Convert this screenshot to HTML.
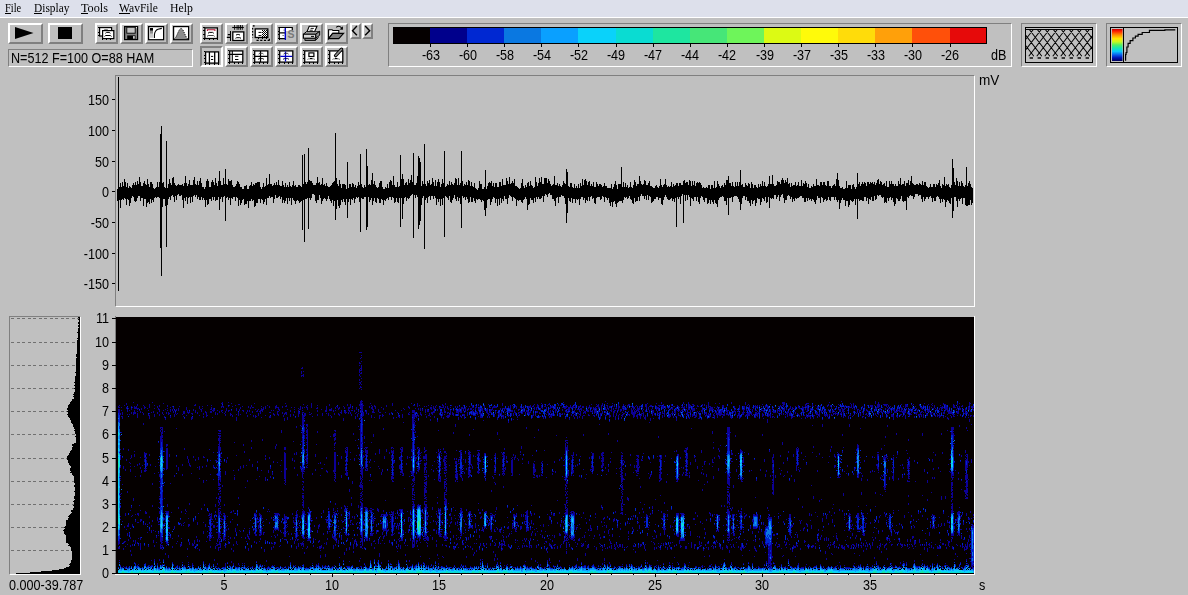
<!DOCTYPE html><html><head><meta charset="utf-8"><title>Spectrogram</title><style>
html,body{margin:0;padding:0;}
body{width:1188px;height:595px;overflow:hidden;background:#c0c0c0;position:relative;
 font-family:"Liberation Sans",sans-serif;font-size:13px;color:#000;}
.a{position:absolute;}
.b{position:absolute;box-sizing:border-box;border:2px solid;background:#c0c0c0;}
.b svg{position:absolute;left:0;top:0;}
.m{position:absolute;top:0;font-family:"Liberation Serif",serif;font-size:13px;line-height:15px;white-space:nowrap;transform-origin:0 0;}
.t{position:absolute;white-space:nowrap;line-height:14px;font-size:14px;transform:scaleX(0.9);transform-origin:0 0;}
.r{transform-origin:100% 0;text-align:right;}
.c{transform-origin:50% 0;text-align:center;}
.sunk{position:absolute;box-sizing:border-box;border:1px solid;border-color:#808080 #fff #fff #808080;}
</style></head><body>
<div class="a" style="left:0;top:0;width:1188px;height:17px;background:#dde0eb"></div>
<div class="a" style="left:0;top:17px;width:1188px;height:1px;background:#fff"></div>
<span class="m" style="left:5px;top:0px;transform:scaleX(0.8)">File</span>
<div class="a" style="left:5px;top:13px;width:6px;height:1px;background:#000"></div>
<span class="m" style="left:34px;top:0px;transform:scaleX(0.875)">Display</span>
<div class="a" style="left:34px;top:13px;width:8px;height:1px;background:#000"></div>
<span class="m" style="left:81px;top:0px;transform:scaleX(0.94)">Tools</span>
<div class="a" style="left:81px;top:13px;width:7px;height:1px;background:#000"></div>
<span class="m" style="left:119px;top:0px;transform:scaleX(0.89)">WavFile</span>
<div class="a" style="left:119px;top:13px;width:10.5px;height:1px;background:#000"></div>
<span class="m" style="left:169.5px;top:0px;transform:scaleX(0.905)">Help</span>
<div class="b" style="left:8px;top:23px;width:35px;height:21px;border-color:#ffffff #808080 #808080 #ffffff;"><svg width="35" height="21" viewBox="0 0 35 21" style="left:-2px;top:-2px"><polygon points="7,4 7,16 25.5,10" fill="#000" shape-rendering="auto"/></svg></div>
<div class="b" style="left:48px;top:23px;width:35px;height:21px;border-color:#ffffff #808080 #808080 #ffffff;"><svg width="35" height="21" viewBox="0 0 35 21" style="left:-2px;top:-2px"><rect x="10" y="4" width="14" height="12" fill="#000" shape-rendering="crispEdges"/></svg></div>
<div class="b" style="left:95px;top:23px;width:23px;height:21px;border-color:#ffffff #808080 #808080 #ffffff;"><svg width="23" height="21" viewBox="0 0 23 21" style="left:-2px;top:-2px"><rect x="4.6" y="4.6" width="12" height="8.4" fill="#fff" stroke="#000" stroke-width="1.2"/><rect x="3.2" y="4" width="1.3" height="1" fill="#000" shape-rendering="crispEdges"/><rect x="3.2" y="8.5" width="1.3" height="1" fill="#000" shape-rendering="crispEdges"/><rect x="3.2" y="12.2" width="1.3" height="1" fill="#000" shape-rendering="crispEdges"/><path d="M9 7.1L10.2 6.6H11.8L13 7.1" stroke="#666" stroke-width="1.0" fill="none" stroke-linejoin="round"/><rect x="7.6" y="7.6" width="11.2" height="8.0" fill="#fff" stroke="#000" stroke-width="1.2"/><rect x="7.2" y="15.6" width="1" height="1.2" fill="#000" shape-rendering="crispEdges"/><rect x="11" y="15.6" width="1" height="1.2" fill="#000" shape-rendering="crispEdges"/><rect x="15.2" y="15.6" width="1" height="1.2" fill="#000" shape-rendering="crispEdges"/><path d="M10.4 10.3L11.6 9.4H14.200000000000001L15.4 10.3" stroke="#000" stroke-width="1.0" fill="none" stroke-linejoin="round"/><path d="M9.5 13.4L10.7 12.5H15.3L16.5 13.4" stroke="#000" stroke-width="1.0" fill="none" stroke-linejoin="round"/></svg></div>
<div class="b" style="left:120px;top:23px;width:23px;height:21px;border-color:#ffffff #808080 #808080 #ffffff;"><svg width="23" height="21" viewBox="0 0 23 21" style="left:-2px;top:-2px"><rect x="4.6" y="3.6" width="13" height="13" fill="#808080" stroke="#000" stroke-width="1.2"/><rect x="6.8" y="4.2" width="8.4" height="6" fill="#c4c4c4" stroke="#000" stroke-width="0.9"/><rect x="7.2" y="12.4" width="8.3" height="4.2" fill="#000"/><rect x="13" y="13.1" width="1.8" height="2.6" fill="#c8c8c8"/><rect x="16" y="4.2" width="1" height="1" fill="#fff"/></svg></div>
<div class="b" style="left:145px;top:23px;width:23px;height:21px;border-color:#ffffff #808080 #808080 #ffffff;"><svg width="23" height="21" viewBox="0 0 23 21" style="left:-2px;top:-2px"><rect x="3.6" y="3.6" width="15" height="13.1" fill="#fff" stroke="#000" stroke-width="1.2"/><rect x="5" y="5" width="3" height="2.8" fill="#000"/><rect x="5" y="7.8" width="3" height="3" fill="#8c8c8c"/><rect x="5" y="10.8" width="3" height="4" fill="#c8c8c8"/><path d="M9.4 14.9V11.8Q9.8 7.4 13 6.2L16.8 5.4" stroke="#000" stroke-width="1.1" fill="none"/></svg></div>
<div class="b" style="left:170px;top:23px;width:23px;height:21px;border-color:#ffffff #808080 #808080 #ffffff;"><svg width="23" height="21" viewBox="0 0 23 21" style="left:-2px;top:-2px"><rect x="3.6" y="3.6" width="15" height="13.1" fill="#fff" stroke="#000" stroke-width="1.2"/><path d="M4.2 16.1C7 14.5 8.6 5.4 11.1 5.4C13.6 5.4 15.2 14.5 18 16.1Z" fill="#8c8c8c"/><path d="M4.2 16.1C7 14.5 8.6 5.4 11.1 5.4C13.6 5.4 15.2 14.5 18 16.1" fill="none" stroke="#000" stroke-width="0.9" stroke-dasharray="1.2 1"/></svg></div>
<div class="b" style="left:200px;top:23px;width:23px;height:21px;border-color:#ffffff #808080 #808080 #ffffff;"><svg width="23" height="21" viewBox="0 0 23 21" style="left:-2px;top:-2px"><rect x="4.9" y="4.9" width="12.5" height="10.6" fill="#fff" stroke="#000" stroke-width="1.3"/><rect x="3.2" y="4.2" width="1.3" height="1" fill="#000" shape-rendering="crispEdges"/><rect x="3.2" y="7.3" width="1.3" height="1" fill="#000" shape-rendering="crispEdges"/><rect x="3.2" y="11" width="1.3" height="1" fill="#000" shape-rendering="crispEdges"/><rect x="3.2" y="14.8" width="1.3" height="1" fill="#000" shape-rendering="crispEdges"/><rect x="4.4" y="15.8" width="1" height="1.2" fill="#000" shape-rendering="crispEdges"/><rect x="9" y="15.8" width="1" height="1.2" fill="#000" shape-rendering="crispEdges"/><rect x="13.2" y="15.8" width="1" height="1.2" fill="#000" shape-rendering="crispEdges"/><rect x="17" y="15.8" width="1" height="1.2" fill="#000" shape-rendering="crispEdges"/><path d="M7.4 7.9V6.7H14.9V7.9" stroke="#b01030" stroke-width="1.1" fill="none"/><path d="M8 10.3L9.2 9.4H12.600000000000001L13.8 10.3" stroke="#000" stroke-width="1.0" fill="none" stroke-linejoin="round"/><path d="M7 13.4L8.2 12.5H13.4L14.6 13.4" stroke="#444" stroke-width="1.0" fill="none" stroke-linejoin="round"/></svg></div>
<div class="b" style="left:225px;top:23px;width:23px;height:21px;border-color:#ffffff #808080 #808080 #ffffff;"><svg width="23" height="21" viewBox="0 0 23 21" style="left:-2px;top:-2px"><rect x="7.8" y="8.9" width="11" height="8.6" fill="#fff" stroke="#000" stroke-width="1.3"/><rect x="5" y="8.2" width="1.1" height="9.6" fill="#000" shape-rendering="crispEdges"/><path d="M2.8 11.6H5.4M1.8 14.4H5.4" stroke="#000" stroke-width="1.1"/><path d="M7.2 4.5H18.8" stroke="#000" stroke-width="1.1"/><path d="M9.6 2V6.8M12.1 2V6.8M13.8 2V6.8M15.5 2V6.8M17.3 2V6.8" stroke="#000" stroke-width="0.9"/><path d="M11 12.1L12.2 11.5H13.8L15 12.1" stroke="#000" stroke-width="1.0" fill="none" stroke-linejoin="round"/><path d="M10.5 15.299999999999999L11.7 14.7H14.8L16 15.299999999999999" stroke="#000" stroke-width="1.0" fill="none" stroke-linejoin="round"/></svg></div>
<div class="b" style="left:250px;top:23px;width:23px;height:21px;border-color:#ffffff #808080 #808080 #ffffff;"><svg width="23" height="21" viewBox="0 0 23 21" style="left:-2px;top:-2px"><rect x="5.2" y="5.9" width="12.6" height="8.6" fill="#fff" stroke="#000" stroke-width="1.3"/><g shape-rendering="crispEdges"><rect x="11.5" y="6.6" width="1" height="1" fill="#000"/><rect x="13.5" y="6.6" width="1" height="1" fill="#000"/><rect x="15.5" y="6.6" width="1" height="1" fill="#000"/><rect x="12.5" y="7.6" width="1" height="1" fill="#000"/><rect x="14.5" y="7.6" width="1" height="1" fill="#000"/><rect x="16.5" y="7.6" width="1" height="1" fill="#000"/><rect x="11.5" y="8.6" width="1" height="1" fill="#000"/><rect x="13.5" y="8.6" width="1" height="1" fill="#000"/><rect x="15.5" y="8.6" width="1" height="1" fill="#000"/><rect x="12.5" y="9.6" width="1" height="1" fill="#000"/><rect x="14.5" y="9.6" width="1" height="1" fill="#000"/><rect x="16.5" y="9.6" width="1" height="1" fill="#000"/><rect x="11.5" y="10.6" width="1" height="1" fill="#000"/><rect x="13.5" y="10.6" width="1" height="1" fill="#000"/><rect x="15.5" y="10.6" width="1" height="1" fill="#000"/><rect x="12.5" y="11.6" width="1" height="1" fill="#000"/><rect x="14.5" y="11.6" width="1" height="1" fill="#000"/><rect x="16.5" y="11.6" width="1" height="1" fill="#000"/><rect x="11.5" y="12.6" width="1" height="1" fill="#000"/><rect x="13.5" y="12.6" width="1" height="1" fill="#000"/><rect x="15.5" y="12.6" width="1" height="1" fill="#000"/></g><path d="M8.5 9.4H11.5M8.5 12.6H11.5" stroke="#000" stroke-width="1"/><rect x="3" y="2.2" width="1.6" height="1.4" fill="#000"/><path d="M2.6 5V14.5" stroke="#000" stroke-width="1.2" stroke-dasharray="1.5 1.5"/><path d="M6.5 17.3H19M19.4 15.8V17.8" stroke="#000" stroke-width="1.2" stroke-dasharray="2.2 1.5"/><rect x="8" y="14.8" width="1" height="1.2" fill="#000" shape-rendering="crispEdges"/><rect x="12.3" y="14.8" width="1" height="1.2" fill="#000" shape-rendering="crispEdges"/><rect x="16" y="14.8" width="1" height="1.2" fill="#000" shape-rendering="crispEdges"/></svg></div>
<div class="b" style="left:275px;top:23px;width:23px;height:21px;border-color:#ffffff #808080 #808080 #ffffff;"><svg width="23" height="21" viewBox="0 0 23 21" style="left:-2px;top:-2px"><rect x="4.5" y="5" width="6" height="10.6" fill="#fff"/><rect x="10.5" y="5" width="7" height="3" fill="#fff"/><path d="M3.3 4.5H17.8M17.3 4.5V7.4M4.3 4.5V15.6M4 9.9H10M4 15.6H11" stroke="#000" stroke-width="1.2" fill="none"/><rect x="2.9" y="7.6" width="1.2" height="1" fill="#000" shape-rendering="crispEdges"/><rect x="2.9" y="11.2" width="1.2" height="1" fill="#000" shape-rendering="crispEdges"/><rect x="2.9" y="14.8" width="1.2" height="1" fill="#000" shape-rendering="crispEdges"/><rect x="4.2" y="15.8" width="1" height="1.1" fill="#000" shape-rendering="crispEdges"/><rect x="10" y="15.8" width="1" height="1.1" fill="#000" shape-rendering="crispEdges"/><path d="M10.3 5V16.8" stroke="#0000d0" stroke-width="1.4"/><rect x="8.6" y="6.6" width="1" height="1" fill="#333"/><rect x="7.6" y="12" width="1" height="1" fill="#333"/><text x="12.6" y="15.4" font-family="Liberation Sans,sans-serif" font-weight="bold" font-size="10.5" fill="#787878">S</text></svg></div>
<div class="b" style="left:300px;top:23px;width:23px;height:21px;border-color:#ffffff #808080 #808080 #ffffff;"><svg width="23" height="21" viewBox="0 0 23 21" style="left:-2px;top:-2px"><path d="M9.2 3.3H17L14.6 8.8H7Z" fill="#fff" stroke="#000" stroke-width="1.1"/><path d="M10.6 5.4H13.8M9.6 7.2H12.8" stroke="#000" stroke-width="0.9"/><path d="M3.4 11.2L6.4 8.8H19.6L15.8 11.2Z" fill="#d8d8d8" stroke="#000" stroke-width="1"/><rect x="3.4" y="11.2" width="12.4" height="4" fill="#d8d8d8" stroke="#000" stroke-width="1.1"/><path d="M15.8 11.2L19.7 8.2V12.2L15.8 15.2Z" fill="#909090" stroke="#000" stroke-width="1"/><path d="M4.9 15.9H15.4V17.4H4.9Z" fill="#fff" stroke="#000" stroke-width="1"/><path d="M15.4 17.4L18.6 14.4" stroke="#000" stroke-width="1"/><path d="M11 13.4H14" stroke="#000" stroke-width="1"/></svg></div>
<div class="b" style="left:325px;top:23px;width:23px;height:21px;border-color:#ffffff #808080 #808080 #ffffff;"><svg width="23" height="21" viewBox="0 0 23 21" style="left:-2px;top:-2px"><path d="M3.6 15.6V6.7H7L7.9 7.5H13.8V10.4H7.7Z" fill="#fff" stroke="#000" stroke-width="1.1"/><path d="M7.7 10.4H18.6L13.8 15.6H3.6Z" fill="#808080" stroke="#000" stroke-width="1.1"/><path d="M11.2 4.4Q13.8 1.9 16.6 4.8" fill="none" stroke="#000" stroke-width="1.1"/><polygon points="17.9,3.3 17.9,6.7 14.6,6.4" fill="#000"/></svg></div>
<div class="b" style="left:350px;top:23px;width:11px;height:16px;border-color:#ffffff #808080 #808080 #ffffff;"><svg width="11" height="16" viewBox="0 0 11 16" style="left:-2px;top:-2px"><path d="M6.9 3.1L2.5 7.7L6.9 12.3" fill="none" stroke="#000" stroke-width="1.4"/></svg></div>
<div class="b" style="left:362px;top:23px;width:11px;height:16px;border-color:#ffffff #808080 #808080 #ffffff;"><svg width="11" height="16" viewBox="0 0 11 16" style="left:-2px;top:-2px"><path d="M3.1 3.1L7.7 7.7L3.1 12.3" fill="none" stroke="#000" stroke-width="1.4"/></svg></div>
<div class="b" style="left:200px;top:46px;width:23px;height:21px;border-color:#808080 #ffffff #ffffff #808080;"><svg width="23" height="21" viewBox="0 0 23 21" style="left:-2px;top:-2px"><rect x="5.6" y="5.9" width="13" height="11.2" fill="#fff" stroke="#000" stroke-width="1.3"/><path d="M9.4 5.9V17.1M14.7 5.9V17.1" stroke="#000" stroke-width="1.3"/><path d="M11 10.4H13.2M11 13.5H13.2" stroke="#000" stroke-width="1"/><rect x="3.9" y="5.3" width="1.3" height="1" fill="#000" shape-rendering="crispEdges"/><rect x="3.9" y="8.5" width="1.3" height="1" fill="#000" shape-rendering="crispEdges"/><rect x="3.9" y="12.2" width="1.3" height="1" fill="#000" shape-rendering="crispEdges"/><rect x="3.9" y="15.8" width="1.3" height="1" fill="#000" shape-rendering="crispEdges"/><rect x="5" y="17.3" width="1" height="1.2" fill="#000" shape-rendering="crispEdges"/><rect x="8.9" y="17.3" width="1" height="1.2" fill="#000" shape-rendering="crispEdges"/><rect x="14.2" y="17.3" width="1" height="1.2" fill="#000" shape-rendering="crispEdges"/><rect x="18" y="17.3" width="1" height="1.2" fill="#000" shape-rendering="crispEdges"/></svg></div>
<div class="b" style="left:225px;top:46px;width:23px;height:21px;border-color:#ffffff #808080 #808080 #ffffff;"><svg width="23" height="21" viewBox="0 0 23 21" style="left:-2px;top:-2px"><rect x="4.7" y="4.9" width="13.1" height="11.2" fill="#fff" stroke="#000" stroke-width="1.3"/><path d="M4.7 8.4H17.8M7.3 4.9V16.1" stroke="#000" stroke-width="1.1"/><path d="M10 10.3H13.4M10 13.5H13.4" stroke="#000" stroke-width="1"/><rect x="3" y="4.3" width="1.3" height="1" fill="#000" shape-rendering="crispEdges"/><rect x="3" y="7.9" width="1.3" height="1" fill="#000" shape-rendering="crispEdges"/><rect x="3" y="11.8" width="1.3" height="1" fill="#000" shape-rendering="crispEdges"/><rect x="3" y="15.5" width="1.3" height="1" fill="#000" shape-rendering="crispEdges"/><rect x="4.2" y="16.4" width="1" height="1.2" fill="#000" shape-rendering="crispEdges"/><rect x="9.2" y="16.4" width="1" height="1.2" fill="#000" shape-rendering="crispEdges"/><rect x="13.2" y="16.4" width="1" height="1.2" fill="#000" shape-rendering="crispEdges"/><rect x="17.2" y="16.4" width="1" height="1.2" fill="#000" shape-rendering="crispEdges"/></svg></div>
<div class="b" style="left:250px;top:46px;width:23px;height:21px;border-color:#ffffff #808080 #808080 #ffffff;"><svg width="23" height="21" viewBox="0 0 23 21" style="left:-2px;top:-2px"><rect x="4.7" y="4.9" width="13.1" height="11.2" fill="#fff" stroke="#000" stroke-width="1.3"/><path d="M4.7 10.4H17.8M10.5 4.9V16.1" stroke="#000" stroke-width="1.2"/><path d="M8.6 8.1L9.799999999999999 7.3H12.3L13.5 8.1" stroke="#333" stroke-width="0.9" fill="none" stroke-linejoin="round"/><path d="M8 13.4L9.2 12.6H12.8L14 13.4" stroke="#000" stroke-width="0.9" fill="none" stroke-linejoin="round"/><rect x="3" y="4.3" width="1.3" height="1" fill="#000" shape-rendering="crispEdges"/><rect x="3" y="7.9" width="1.3" height="1" fill="#000" shape-rendering="crispEdges"/><rect x="3" y="11.8" width="1.3" height="1" fill="#000" shape-rendering="crispEdges"/><rect x="3" y="15.5" width="1.3" height="1" fill="#000" shape-rendering="crispEdges"/><rect x="4.2" y="16.4" width="1" height="1.2" fill="#000" shape-rendering="crispEdges"/><rect x="9.2" y="16.4" width="1" height="1.2" fill="#000" shape-rendering="crispEdges"/><rect x="13.2" y="16.4" width="1" height="1.2" fill="#000" shape-rendering="crispEdges"/><rect x="17.2" y="16.4" width="1" height="1.2" fill="#000" shape-rendering="crispEdges"/></svg></div>
<div class="b" style="left:275px;top:46px;width:23px;height:21px;border-color:#ffffff #808080 #808080 #ffffff;"><svg width="23" height="21" viewBox="0 0 23 21" style="left:-2px;top:-2px"><rect x="4.7" y="4.9" width="13.1" height="11.2" fill="#fff" stroke="#000" stroke-width="1.3"/><path d="M5.3 10.4H17.2M10.5 5.5V15.5" stroke="#0000c8" stroke-width="1.3"/><path d="M8.6 8.1L9.799999999999999 7.3H12.3L13.5 8.1" stroke="#223" stroke-width="0.9" fill="none" stroke-linejoin="round"/><path d="M8 13.4L9.2 12.6H12.8L14 13.4" stroke="#003" stroke-width="0.9" fill="none" stroke-linejoin="round"/><rect x="3" y="4.3" width="1.3" height="1" fill="#000" shape-rendering="crispEdges"/><rect x="3" y="7.9" width="1.3" height="1" fill="#000" shape-rendering="crispEdges"/><rect x="3" y="11.8" width="1.3" height="1" fill="#000" shape-rendering="crispEdges"/><rect x="3" y="15.5" width="1.3" height="1" fill="#000" shape-rendering="crispEdges"/><rect x="4.2" y="16.4" width="1" height="1.2" fill="#000" shape-rendering="crispEdges"/><rect x="9.2" y="16.4" width="1" height="1.2" fill="#000" shape-rendering="crispEdges"/><rect x="13.2" y="16.4" width="1" height="1.2" fill="#000" shape-rendering="crispEdges"/><rect x="17.2" y="16.4" width="1" height="1.2" fill="#000" shape-rendering="crispEdges"/></svg></div>
<div class="b" style="left:300px;top:46px;width:23px;height:21px;border-color:#ffffff #808080 #808080 #ffffff;"><svg width="23" height="21" viewBox="0 0 23 21" style="left:-2px;top:-2px"><rect x="4.7" y="4.9" width="13.1" height="11.2" fill="#fff" stroke="#000" stroke-width="1.3"/><rect x="8.9" y="6.9" width="5" height="3.6" fill="#fff" stroke="#000" stroke-width="1.2"/><path d="M7.4 13.5L8.6 12.9H13.8L15 13.5" stroke="#666" stroke-width="0.9" fill="none" stroke-linejoin="round"/><path d="M10 12.5H12.4" stroke="#000" stroke-width="1"/><rect x="3" y="4.3" width="1.3" height="1" fill="#000" shape-rendering="crispEdges"/><rect x="3" y="7.9" width="1.3" height="1" fill="#000" shape-rendering="crispEdges"/><rect x="3" y="11.8" width="1.3" height="1" fill="#000" shape-rendering="crispEdges"/><rect x="3" y="15.5" width="1.3" height="1" fill="#000" shape-rendering="crispEdges"/><rect x="4.2" y="16.4" width="1" height="1.2" fill="#000" shape-rendering="crispEdges"/><rect x="9.2" y="16.4" width="1" height="1.2" fill="#000" shape-rendering="crispEdges"/><rect x="13.2" y="16.4" width="1" height="1.2" fill="#000" shape-rendering="crispEdges"/><rect x="17.2" y="16.4" width="1" height="1.2" fill="#000" shape-rendering="crispEdges"/></svg></div>
<div class="b" style="left:325px;top:46px;width:23px;height:21px;border-color:#ffffff #808080 #808080 #ffffff;"><svg width="23" height="21" viewBox="0 0 23 21" style="left:-2px;top:-2px"><rect x="4.7" y="4.9" width="13.1" height="11.2" fill="#fff" stroke="#000" stroke-width="1.3"/><path d="M10.6 9.6L16.6 3.2" stroke="#000" stroke-width="3.4" stroke-linecap="round"/><path d="M10.7 9.5L16.5 3.3" stroke="#909090" stroke-width="1.6" stroke-linecap="round"/><path d="M7.4 13.5L8.6 12.9H13.8L15 13.5" stroke="#666" stroke-width="0.9" fill="none" stroke-linejoin="round"/><path d="M10 12.5H12.4" stroke="#000" stroke-width="1"/><rect x="3" y="4.3" width="1.3" height="1" fill="#000" shape-rendering="crispEdges"/><rect x="3" y="7.9" width="1.3" height="1" fill="#000" shape-rendering="crispEdges"/><rect x="3" y="11.8" width="1.3" height="1" fill="#000" shape-rendering="crispEdges"/><rect x="3" y="15.5" width="1.3" height="1" fill="#000" shape-rendering="crispEdges"/><rect x="4.2" y="16.4" width="1" height="1.2" fill="#000" shape-rendering="crispEdges"/><rect x="9.2" y="16.4" width="1" height="1.2" fill="#000" shape-rendering="crispEdges"/><rect x="13.2" y="16.4" width="1" height="1.2" fill="#000" shape-rendering="crispEdges"/><rect x="17.2" y="16.4" width="1" height="1.2" fill="#000" shape-rendering="crispEdges"/></svg></div>
<div class="sunk" style="left:8px;top:49px;width:185px;height:18px"></div>
<span class="t" id="status" style="left:11px;top:51px">N=512 F=100 O=88 HAM</span>
<div class="sunk" style="left:388px;top:23px;width:624px;height:44px"></div>
<svg class="a" style="left:0;top:0" width="1188" height="70" shape-rendering="crispEdges"><rect x="393" y="27" width="37" height="17" fill="#050000"/><rect x="430" y="27" width="37" height="17" fill="#00008c"/><rect x="467" y="27" width="37" height="17" fill="#0028d2"/><rect x="504" y="27" width="37" height="17" fill="#0a78e1"/><rect x="541" y="27" width="37" height="17" fill="#0aa0ff"/><rect x="578" y="27" width="38" height="17" fill="#0ad2fa"/><rect x="616" y="27" width="37" height="17" fill="#0adcd2"/><rect x="653" y="27" width="37" height="17" fill="#1ee6a0"/><rect x="690" y="27" width="37" height="17" fill="#46e678"/><rect x="727" y="27" width="37" height="17" fill="#6ef55a"/><rect x="764" y="27" width="37" height="17" fill="#dcfa14"/><rect x="801" y="27" width="37" height="17" fill="#fffa0a"/><rect x="838" y="27" width="37" height="17" fill="#ffdc0a"/><rect x="875" y="27" width="37" height="17" fill="#ffa00a"/><rect x="912" y="27" width="38" height="17" fill="#ff500a"/><rect x="950" y="27" width="37" height="17" fill="#e60a0a"/><rect x="393" y="27" width="594" height="1" fill="#000"/><rect x="393" y="43" width="594" height="1" fill="#000"/><rect x="986" y="27" width="1" height="17" fill="#000"/><rect x="430" y="44" width="1" height="3" fill="#000"/><rect x="467" y="44" width="1" height="3" fill="#000"/><rect x="504" y="44" width="1" height="3" fill="#000"/><rect x="541" y="44" width="1" height="3" fill="#000"/><rect x="578" y="44" width="1" height="3" fill="#000"/><rect x="616" y="44" width="1" height="3" fill="#000"/><rect x="653" y="44" width="1" height="3" fill="#000"/><rect x="690" y="44" width="1" height="3" fill="#000"/><rect x="727" y="44" width="1" height="3" fill="#000"/><rect x="764" y="44" width="1" height="3" fill="#000"/><rect x="801" y="44" width="1" height="3" fill="#000"/><rect x="838" y="44" width="1" height="3" fill="#000"/><rect x="875" y="44" width="1" height="3" fill="#000"/><rect x="912" y="44" width="1" height="3" fill="#000"/><rect x="950" y="44" width="1" height="3" fill="#000"/></svg>
<span class="t c" style="left:410.6px;top:48px;width:40px">-63</span>
<span class="t c" style="left:447.7px;top:48px;width:40px">-60</span>
<span class="t c" style="left:484.8px;top:48px;width:40px">-58</span>
<span class="t c" style="left:521.9px;top:48px;width:40px">-54</span>
<span class="t c" style="left:559.0px;top:48px;width:40px">-52</span>
<span class="t c" style="left:596.1px;top:48px;width:40px">-49</span>
<span class="t c" style="left:633.2px;top:48px;width:40px">-47</span>
<span class="t c" style="left:670.3px;top:48px;width:40px">-44</span>
<span class="t c" style="left:707.4px;top:48px;width:40px">-42</span>
<span class="t c" style="left:744.5px;top:48px;width:40px">-39</span>
<span class="t c" style="left:781.6px;top:48px;width:40px">-37</span>
<span class="t c" style="left:818.7px;top:48px;width:40px">-35</span>
<span class="t c" style="left:855.8px;top:48px;width:40px">-33</span>
<span class="t c" style="left:892.9px;top:48px;width:40px">-30</span>
<span class="t c" style="left:930.0px;top:48px;width:40px">-26</span>
<span class="t" id="dB" style="left:990.5px;top:48px">dB</span>
<div class="sunk" style="left:1021px;top:23px;width:76px;height:44px"></div>
<svg class="a" style="left:1025px;top:27px" width="68" height="36" viewBox="0 0 68 36"><rect x="0.5" y="0.5" width="67" height="35" fill="#c0c0c0" stroke="#000" stroke-width="1"/><path d="M1 2.5H67" stroke="#000" stroke-width="1"/><clipPath id="mc"><rect x="1" y="1" width="66" height="34"/></clipPath><path d="M-59.70 2.5L-39.16 29.2M-55.70 2.5L-76.24 29.2M-51.70 2.5L-31.16 29.2M-47.70 2.5L-68.24 29.2M-43.70 2.5L-23.16 29.2M-39.70 2.5L-60.24 29.2M-35.70 2.5L-15.16 29.2M-31.70 2.5L-52.24 29.2M-27.70 2.5L-7.16 29.2M-23.70 2.5L-44.24 29.2M-19.70 2.5L0.84 29.2M-15.70 2.5L-36.24 29.2M-11.70 2.5L8.84 29.2M-7.70 2.5L-28.24 29.2M-3.70 2.5L16.84 29.2M0.30 2.5L-20.24 29.2M4.30 2.5L24.84 29.2M8.30 2.5L-12.24 29.2M12.30 2.5L32.84 29.2M16.30 2.5L-4.24 29.2M20.30 2.5L40.84 29.2M24.30 2.5L3.76 29.2M28.30 2.5L48.84 29.2M32.30 2.5L11.76 29.2M36.30 2.5L56.84 29.2M40.30 2.5L19.76 29.2M44.30 2.5L64.84 29.2M48.30 2.5L27.76 29.2M52.30 2.5L72.84 29.2M56.30 2.5L35.76 29.2M60.30 2.5L80.84 29.2M64.30 2.5L43.76 29.2M68.30 2.5L88.84 29.2M72.30 2.5L51.76 29.2M76.30 2.5L96.84 29.2M80.30 2.5L59.76 29.2M84.30 2.5L104.84 29.2M88.30 2.5L67.76 29.2M92.30 2.5L112.84 29.2M96.30 2.5L75.76 29.2M100.30 2.5L120.84 29.2M104.30 2.5L83.76 29.2M108.30 2.5L128.84 29.2M112.30 2.5L91.76 29.2M116.30 2.5L136.84 29.2M120.30 2.5L99.76 29.2M124.30 2.5L144.84 29.2M128.30 2.5L107.76 29.2M132.30 2.5L152.84 29.2M136.30 2.5L115.76 29.2M140.30 2.5L160.84 29.2M144.30 2.5L123.76 29.2" stroke="#000" stroke-width="1.05" fill="none" clip-path="url(#mc)"/><rect x="4.6" y="30.3" width="3.4" height="1.4" fill="#000"/><rect x="12.6" y="30.3" width="3.4" height="1.4" fill="#000"/><rect x="20.6" y="30.3" width="3.4" height="1.4" fill="#000"/><rect x="28.6" y="30.3" width="3.4" height="1.4" fill="#000"/><rect x="36.6" y="30.3" width="3.4" height="1.4" fill="#000"/><rect x="44.6" y="30.3" width="3.4" height="1.4" fill="#000"/><rect x="52.6" y="30.3" width="3.4" height="1.4" fill="#000"/><rect x="60.6" y="30.3" width="3.4" height="1.4" fill="#000"/></svg>
<div class="sunk" style="left:1106px;top:23px;width:76px;height:44px"></div>
<svg class="a" style="left:1110px;top:27px" width="68" height="36" viewBox="0 0 68 36"><defs><linearGradient id="cg" x1="0" y1="0" x2="0" y2="1"><stop offset="0" stop-color="#c80000"/><stop offset="0.07" stop-color="#ff1e00"/><stop offset="0.18" stop-color="#ff8c00"/><stop offset="0.3" stop-color="#ffe600"/><stop offset="0.4" stop-color="#c8fa1e"/><stop offset="0.5" stop-color="#50f064"/><stop offset="0.6" stop-color="#14e6b4"/><stop offset="0.7" stop-color="#0ac8fa"/><stop offset="0.8" stop-color="#0a64f0"/><stop offset="0.9" stop-color="#0014b4"/><stop offset="1" stop-color="#00005a"/></linearGradient></defs><rect x="0.5" y="0.5" width="67" height="35" fill="#c0c0c0" stroke="#000" stroke-width="1"/><rect x="2" y="2" width="10.5" height="32" fill="url(#cg)"/><path d="M13.5 0V36" stroke="#000" stroke-width="1"/><path d="M15.6 33.7H15.60V27.3H15.6H16.10V25.5H16.6H16.90V20H17.2H18.10V16.4H19H20.15V13.7H21.3H22.90V11H24.5H25.40V9.1H26.3H28.10V7.3H29.9H32.20V5.5H34.5H39.45V3.3H44.4H54.85V2.8H65.3" stroke="#000" stroke-width="1.2" fill="none"/></svg>
<div class="sunk" style="left:115px;top:75px;width:860px;height:232px"></div>
<span class="t r" style="left:59px;top:93px;width:50px">150</span>
<span class="t r" style="left:59px;top:124px;width:50px">100</span>
<span class="t r" style="left:59px;top:155px;width:50px">50</span>
<span class="t r" style="left:59px;top:185px;width:50px">0</span>
<span class="t r" style="left:59px;top:216px;width:50px">-50</span>
<span class="t r" style="left:59px;top:247px;width:50px">-100</span>
<span class="t r" style="left:59px;top:277px;width:50px">-150</span>
<span class="t r" style="left:59px;top:566px;width:50px">0</span>
<span class="t r" style="left:59px;top:543px;width:50px">1</span>
<span class="t r" style="left:59px;top:520px;width:50px">2</span>
<span class="t r" style="left:59px;top:497px;width:50px">3</span>
<span class="t r" style="left:59px;top:474px;width:50px">4</span>
<span class="t r" style="left:59px;top:451px;width:50px">5</span>
<span class="t r" style="left:59px;top:427px;width:50px">6</span>
<span class="t r" style="left:59px;top:404px;width:50px">7</span>
<span class="t r" style="left:59px;top:381px;width:50px">8</span>
<span class="t r" style="left:59px;top:358px;width:50px">9</span>
<span class="t r" style="left:59px;top:335px;width:50px">10</span>
<span class="t r" style="left:59px;top:311px;width:50px">11</span>
<span class="t c" style="left:203.5px;top:578px;width:40px">5</span>
<span class="t c" style="left:311.5px;top:578px;width:40px">10</span>
<span class="t c" style="left:418.5px;top:578px;width:40px">15</span>
<span class="t c" style="left:526.5px;top:578px;width:40px">20</span>
<span class="t c" style="left:634.5px;top:578px;width:40px">25</span>
<span class="t c" style="left:741.5px;top:578px;width:40px">30</span>
<span class="t c" style="left:849.5px;top:578px;width:40px">35</span>
<span class="t" id="mV" style="left:979px;top:73px;transform:scaleX(0.97)">mV</span>
<span class="t" id="sec" style="left:979px;top:578px">s</span>
<svg class="a" style="left:0;top:0" width="1188" height="310" shape-rendering="crispEdges"><path d="M117.5 189V201M118.5 77V291M119.5 187V200M120.5 183V208M121.5 187V200M122.5 182V199M123.5 186V200M124.5 179V198M125.5 182V199M126.5 187V205M127.5 183V199M128.5 188V200M129.5 186V206M130.5 187V203M131.5 188V198M132.5 185V196M133.5 183V197M134.5 185V201M135.5 182V202M136.5 185V201M137.5 181V198M138.5 184V196M139.5 177V196M140.5 182V201M141.5 186V198M142.5 186V198M143.5 183V206M144.5 181V199M145.5 184V199M146.5 185V207M147.5 179V203M148.5 184V202M149.5 187V204M150.5 182V199M151.5 182V203M152.5 184V200M153.5 188V202M154.5 189V198M155.5 188V197M156.5 187V198M157.5 182V197M158.5 187V197M159.5 182V198M160.5 134V248M161.5 126V276M162.5 183V207M163.5 182V199M164.5 187V199M165.5 188V206M166.5 141V247M167.5 188V205M168.5 184V199M169.5 179V197M170.5 183V200M171.5 185V196M172.5 178V195M173.5 177V197M174.5 183V202M175.5 185V196M176.5 186V200M177.5 185V195M178.5 184V194M179.5 185V196M180.5 185V196M181.5 185V195M182.5 184V200M183.5 186V208M184.5 183V198M185.5 176V201M186.5 183V197M187.5 186V204M188.5 184V198M189.5 180V197M190.5 185V203M191.5 185V197M192.5 185V202M193.5 180V196M194.5 177V195M195.5 184V197M196.5 185V195M197.5 181V199M198.5 185V197M199.5 181V200M200.5 178V200M201.5 183V197M202.5 187V200M203.5 187V198M204.5 189V200M205.5 187V207M206.5 181V200M207.5 179V205M208.5 181V204M209.5 187V199M210.5 187V199M211.5 182V201M212.5 180V197M213.5 182V200M214.5 185V197M215.5 178V201M216.5 183V200M217.5 186V200M218.5 181V197M219.5 171V210M220.5 181V199M221.5 185V197M222.5 185V202M223.5 178V197M224.5 184V196M225.5 169V221M226.5 184V198M227.5 185V197M228.5 179V200M229.5 181V198M230.5 181V205M231.5 180V198M232.5 185V199M233.5 187V197M234.5 187V197M235.5 186V201M236.5 184V197M237.5 181V198M238.5 182V206M239.5 184V200M240.5 187V205M241.5 187V203M242.5 189V200M243.5 189V199M244.5 186V205M245.5 186V204M246.5 185V204M247.5 189V201M248.5 189V208M249.5 186V201M250.5 185V201M251.5 182V199M252.5 186V201M253.5 184V200M254.5 185V207M255.5 183V206M256.5 183V203M257.5 182V203M258.5 182V199M259.5 182V199M260.5 187V203M261.5 189V199M262.5 187V200M263.5 183V204M264.5 187V202M265.5 186V199M266.5 178V205M267.5 185V198M268.5 184V198M269.5 174V196M270.5 184V198M271.5 184V197M272.5 186V197M273.5 185V203M274.5 183V199M275.5 185V195M276.5 182V198M277.5 185V198M278.5 180V197M279.5 185V196M280.5 186V199M281.5 186V197M282.5 181V203M283.5 185V200M284.5 187V203M285.5 183V201M286.5 187V198M287.5 185V204M288.5 187V198M289.5 182V201M290.5 186V198M291.5 187V205M292.5 185V198M293.5 181V200M294.5 186V201M295.5 185V204M296.5 187V201M297.5 187V200M298.5 185V201M299.5 185V203M300.5 186V202M301.5 187V201M302.5 155V230M303.5 184V200M304.5 154V242M305.5 182V199M306.5 184V199M307.5 182V198M308.5 148V229M309.5 180V198M310.5 181V200M311.5 181V198M312.5 183V194M313.5 185V194M314.5 185V195M315.5 185V201M316.5 183V203M317.5 177V200M318.5 183V200M319.5 182V195M320.5 185V198M321.5 184V204M322.5 178V201M323.5 185V199M324.5 184V198M325.5 186V199M326.5 183V201M327.5 186V199M328.5 187V196M329.5 187V199M330.5 186V201M331.5 185V203M332.5 183V200M333.5 182V206M334.5 181V201M335.5 133V220M336.5 178V209M337.5 184V200M338.5 186V206M339.5 180V208M340.5 184V205M341.5 188V200M342.5 184V202M343.5 184V199M344.5 184V202M345.5 185V205M346.5 189V199M347.5 162V218M348.5 188V202M349.5 184V199M350.5 184V205M351.5 187V199M352.5 183V200M353.5 184V198M354.5 187V203M355.5 185V199M356.5 188V197M357.5 186V198M358.5 182V197M359.5 185V202M360.5 154V232M361.5 184V198M362.5 187V199M363.5 188V199M364.5 185V197M365.5 187V197M366.5 149V230M367.5 166V227M368.5 185V197M369.5 184V202M370.5 185V200M371.5 180V198M372.5 173V205M373.5 184V201M374.5 181V198M375.5 185V202M376.5 187V203M377.5 188V198M378.5 187V199M379.5 183V203M380.5 181V203M381.5 181V199M382.5 187V200M383.5 189V205M384.5 189V200M385.5 187V201M386.5 188V199M387.5 184V198M388.5 188V200M389.5 182V197M390.5 180V197M391.5 181V200M392.5 185V197M393.5 176V198M394.5 185V203M395.5 187V202M396.5 187V198M397.5 182V202M398.5 187V203M399.5 186V198M400.5 155V227M401.5 179V198M402.5 174V219M403.5 179V204M404.5 185V198M405.5 183V197M406.5 182V201M407.5 185V198M408.5 179V199M409.5 183V198M410.5 180V196M411.5 175V195M412.5 182V194M413.5 153V238M414.5 185V195M415.5 185V198M416.5 183V195M417.5 176V197M418.5 156V229M419.5 158V225M420.5 162V221M421.5 186V205M422.5 181V198M423.5 184V196M424.5 144V249M425.5 184V200M426.5 186V198M427.5 181V203M428.5 183V197M429.5 180V196M430.5 185V200M431.5 184V196M432.5 178V196M433.5 182V199M434.5 186V196M435.5 180V198M436.5 186V205M437.5 182V199M438.5 179V202M439.5 182V199M440.5 187V206M441.5 184V199M442.5 179V205M443.5 183V198M444.5 151V237M445.5 187V196M446.5 186V197M447.5 184V198M448.5 185V200M449.5 181V196M450.5 185V202M451.5 182V203M452.5 184V200M453.5 185V198M454.5 183V195M455.5 178V199M456.5 179V201M457.5 185V197M458.5 178V201M459.5 185V198M460.5 183V204M461.5 151V228M462.5 181V196M463.5 186V198M464.5 184V197M465.5 185V200M466.5 182V197M467.5 185V199M468.5 180V203M469.5 181V202M470.5 186V197M471.5 182V202M472.5 186V202M473.5 187V198M474.5 183V201M475.5 188V203M476.5 189V199M477.5 190V200M478.5 188V199M479.5 181V199M480.5 184V200M481.5 184V202M482.5 189V200M483.5 189V201M484.5 187V210M485.5 170V216M486.5 189V208M487.5 186V200M488.5 183V199M489.5 182V199M490.5 183V205M491.5 181V202M492.5 186V199M493.5 183V197M494.5 187V198M495.5 183V203M496.5 183V199M497.5 187V206M498.5 187V199M499.5 182V205M500.5 182V198M501.5 186V203M502.5 179V199M503.5 185V201M504.5 185V196M505.5 185V199M506.5 178V199M507.5 181V204M508.5 184V198M509.5 177V195M510.5 184V196M511.5 183V197M512.5 181V201M513.5 183V197M514.5 179V198M515.5 186V199M516.5 186V206M517.5 187V200M518.5 188V201M519.5 189V200M520.5 188V200M521.5 183V202M522.5 179V203M523.5 186V200M524.5 188V199M525.5 185V197M526.5 187V199M527.5 183V210M528.5 182V205M529.5 186V204M530.5 181V198M531.5 185V200M532.5 186V200M533.5 188V203M534.5 187V198M535.5 177V202M536.5 182V197M537.5 186V199M538.5 183V197M539.5 178V199M540.5 182V199M541.5 177V198M542.5 184V196M543.5 184V202M544.5 178V196M545.5 178V194M546.5 178V195M547.5 183V197M548.5 179V194M549.5 181V193M550.5 184V195M551.5 186V195M552.5 185V199M553.5 184V199M554.5 176V201M555.5 185V206M556.5 185V198M557.5 183V197M558.5 186V203M559.5 184V197M560.5 186V197M561.5 187V195M562.5 185V196M563.5 181V196M564.5 183V198M565.5 184V204M566.5 169V223M567.5 172V213M568.5 186V198M569.5 187V201M570.5 183V202M571.5 183V198M572.5 187V203M573.5 188V199M574.5 184V199M575.5 188V203M576.5 186V199M577.5 188V200M578.5 184V199M579.5 188V205M580.5 183V199M581.5 186V197M582.5 179V197M583.5 185V200M584.5 180V198M585.5 179V203M586.5 181V200M587.5 185V201M588.5 182V197M589.5 181V201M590.5 186V197M591.5 184V196M592.5 186V199M593.5 182V198M594.5 187V203M595.5 187V204M596.5 182V198M597.5 184V197M598.5 186V197M599.5 184V197M600.5 184V200M601.5 185V199M602.5 187V196M603.5 186V197M604.5 183V202M605.5 186V197M606.5 186V198M607.5 188V200M608.5 188V198M609.5 188V203M610.5 188V206M611.5 184V202M612.5 189V207M613.5 187V202M614.5 184V201M615.5 181V204M616.5 185V207M617.5 189V203M618.5 184V202M619.5 184V201M620.5 184V201M621.5 167V201M622.5 187V203M623.5 182V200M624.5 187V197M625.5 183V198M626.5 187V197M627.5 185V199M628.5 188V198M629.5 187V196M630.5 182V199M631.5 187V200M632.5 188V203M633.5 185V204M634.5 180V198M635.5 182V202M636.5 186V201M637.5 184V201M638.5 184V197M639.5 176V201M640.5 181V196M641.5 184V194M642.5 185V196M643.5 184V196M644.5 180V199M645.5 181V196M646.5 185V200M647.5 185V195M648.5 183V200M649.5 181V196M650.5 186V197M651.5 186V203M652.5 187V202M653.5 188V201M654.5 188V199M655.5 186V199M656.5 185V197M657.5 187V197M658.5 188V200M659.5 186V198M660.5 179V198M661.5 185V204M662.5 187V205M663.5 185V200M664.5 184V197M665.5 179V195M666.5 185V197M667.5 187V199M668.5 186V200M669.5 187V200M670.5 186V199M671.5 182V198M672.5 187V201M673.5 184V199M674.5 186V202M675.5 185V198M676.5 183V227M677.5 183V197M678.5 186V199M679.5 183V197M680.5 183V204M681.5 185V196M682.5 185V194M683.5 181V223M684.5 180V195M685.5 183V201M686.5 182V195M687.5 182V200M688.5 185V195M689.5 180V197M690.5 181V206M691.5 186V198M692.5 181V199M693.5 185V201M694.5 181V197M695.5 186V197M696.5 183V201M697.5 182V197M698.5 183V202M699.5 182V204M700.5 183V198M701.5 185V196M702.5 188V197M703.5 187V200M704.5 188V202M705.5 188V198M706.5 187V198M707.5 188V204M708.5 185V203M709.5 185V200M710.5 189V204M711.5 185V200M712.5 185V202M713.5 188V204M714.5 181V200M715.5 188V203M716.5 187V204M717.5 181V207M718.5 184V200M719.5 186V198M720.5 188V197M721.5 186V197M722.5 185V196M723.5 187V197M724.5 183V201M725.5 185V201M726.5 180V205M727.5 180V198M728.5 176V215M729.5 183V198M730.5 183V198M731.5 186V197M732.5 182V202M733.5 186V197M734.5 187V196M735.5 182V196M736.5 186V196M737.5 182V197M738.5 186V199M739.5 182V202M740.5 170V210M741.5 185V204M742.5 184V198M743.5 187V196M744.5 187V196M745.5 183V200M746.5 185V197M747.5 186V201M748.5 183V201M749.5 184V203M750.5 188V206M751.5 182V200M752.5 184V204M753.5 188V201M754.5 185V200M755.5 185V206M756.5 187V203M757.5 188V198M758.5 184V199M759.5 187V199M760.5 184V205M761.5 186V202M762.5 181V198M763.5 186V199M764.5 182V201M765.5 186V197M766.5 187V203M767.5 186V202M768.5 184V197M769.5 176V208M770.5 184V198M771.5 184V199M772.5 175V198M773.5 184V199M774.5 186V195M775.5 186V195M776.5 185V199M777.5 181V197M778.5 182V195M779.5 182V201M780.5 184V197M781.5 180V195M782.5 178V194M783.5 180V198M784.5 183V203M785.5 180V200M786.5 182V200M787.5 178V196M788.5 184V195M789.5 183V196M790.5 187V199M791.5 183V197M792.5 186V202M793.5 185V199M794.5 185V201M795.5 182V198M796.5 186V199M797.5 185V198M798.5 182V198M799.5 186V197M800.5 186V196M801.5 180V196M802.5 186V198M803.5 183V198M804.5 184V202M805.5 181V202M806.5 183V198M807.5 187V201M808.5 184V198M809.5 188V200M810.5 188V199M811.5 186V201M812.5 187V199M813.5 184V200M814.5 186V202M815.5 186V204M816.5 179V200M817.5 185V196M818.5 185V198M819.5 186V198M820.5 182V203M821.5 182V197M822.5 185V198M823.5 182V202M824.5 182V200M825.5 185V199M826.5 186V201M827.5 181V200M828.5 181V197M829.5 186V200M830.5 186V201M831.5 188V197M832.5 186V197M833.5 185V197M834.5 184V200M835.5 186V197M836.5 179V200M837.5 173V202M838.5 180V200M839.5 186V209M840.5 188V203M841.5 188V200M842.5 187V198M843.5 189V200M844.5 189V200M845.5 188V206M846.5 181V201M847.5 188V201M848.5 185V207M849.5 185V205M850.5 185V200M851.5 189V201M852.5 185V202M853.5 184V201M854.5 187V199M855.5 189V205M856.5 187V199M857.5 173V219M858.5 184V199M859.5 182V201M860.5 186V200M861.5 184V200M862.5 182V201M863.5 184V201M864.5 182V197M865.5 183V197M866.5 186V201M867.5 182V198M868.5 182V204M869.5 184V199M870.5 182V200M871.5 183V197M872.5 182V201M873.5 184V201M874.5 182V196M875.5 185V200M876.5 183V199M877.5 180V195M878.5 179V196M879.5 184V195M880.5 181V195M881.5 182V197M882.5 185V198M883.5 184V197M884.5 183V203M885.5 186V202M886.5 181V203M887.5 187V198M888.5 187V201M889.5 181V198M890.5 184V197M891.5 181V200M892.5 184V198M893.5 184V202M894.5 186V206M895.5 184V204M896.5 186V198M897.5 186V199M898.5 181V201M899.5 184V201M900.5 178V199M901.5 185V196M902.5 184V201M903.5 184V202M904.5 181V201M905.5 186V201M906.5 183V210M907.5 183V197M908.5 180V198M909.5 185V196M910.5 181V195M911.5 176V196M912.5 183V196M913.5 184V199M914.5 185V197M915.5 185V194M916.5 184V194M917.5 184V194M918.5 185V196M919.5 183V195M920.5 184V195M921.5 185V199M922.5 181V202M923.5 185V197M924.5 182V201M925.5 182V199M926.5 186V197M927.5 187V197M928.5 188V199M929.5 187V197M930.5 184V196M931.5 187V198M932.5 187V202M933.5 184V198M934.5 184V201M935.5 187V201M936.5 184V197M937.5 185V196M938.5 183V197M939.5 180V199M940.5 186V203M941.5 188V199M942.5 184V202M943.5 185V199M944.5 177V200M945.5 186V207M946.5 184V202M947.5 185V200M948.5 184V201M949.5 187V203M950.5 188V204M951.5 185V198M952.5 159V218M953.5 168V211M954.5 182V197M955.5 185V197M956.5 178V201M957.5 181V207M958.5 186V199M959.5 182V201M960.5 186V199M961.5 181V198M962.5 183V204M963.5 186V198M964.5 187V198M965.5 185V205M966.5 167V206M967.5 186V206M968.5 183V205M969.5 181V205M970.5 184V200M971.5 187V205M972.5 188V203" stroke="#000" stroke-width="1" fill="none"/></svg>
<div class="a" style="left:115px;top:316px;width:1px;height:258px;background:#808080"></div>
<div class="a" style="left:116px;top:317px;width:858px;height:257px;background:#050000"></div>
<div class="a" style="left:115px;top:574px;width:860px;height:1px;background:#fff"></div>
<div class="a" style="left:974px;top:316px;width:1px;height:259px;background:#fff"></div>
<svg class="a" style="left:116px;top:317px" width="858" height="257" shape-rendering="crispEdges" fill="none"><defs><filter id="sb" x="0" y="0" width="100%" height="100%"><feGaussianBlur stdDeviation="0.55"/></filter></defs><g filter="url(#sb)"><path stroke="#0c0696" d="M2.5 89v2M2.5 92v4M2.5 224v4M2.5 230v2M3.5 88v1M3.5 90v1M3.5 92v6M3.5 222v5M3.5 230v2M3.5 243v1M4.5 96v2M4.5 118v1M4.5 132v1M4.5 136v1M4.5 139v4M4.5 149v2M4.5 161v1M4.5 163v1M4.5 177v1M4.5 179v1M4.5 188v1M4.5 190v1M4.5 199v1M4.5 202v1M4.5 248v1M5.5 90v1M5.5 93v1M5.5 99v1M5.5 115v1M5.5 176v1M5.5 250v1M6.5 95v3M6.5 99v3M6.5 140v1M6.5 167v1M6.5 204v1M6.5 250v1M7.5 131v2M7.5 149v3M7.5 225v2M7.5 231v2M7.5 249v1M8.5 88v1M8.5 209v2M8.5 224v2M8.5 250v1M9.5 152v2M9.5 196v3M9.5 224v1M9.5 229v1M9.5 250v1M10.5 86v2M10.5 90v2M10.5 142v2M10.5 212v1M10.5 249v1M11.5 90v1M11.5 92v3M11.5 97v1M11.5 174v2M11.5 208v2M11.5 216v3M11.5 227v1M12.5 91v1M12.5 132v2M12.5 206v4M12.5 222v2M12.5 250v1M13.5 93v1M13.5 97v1M13.5 145v1M13.5 216v2M14.5 141v1M14.5 146v1M14.5 149v1M14.5 152v3M14.5 193v1M14.5 211v1M14.5 220v2M14.5 228v2M14.5 233v2M15.5 89v1M15.5 91v2M15.5 95v2M15.5 138v3M15.5 189v2M15.5 199v1M15.5 237v2M16.5 90v1M16.5 198v1M16.5 207v3M16.5 227v2M17.5 85v1M17.5 95v3M17.5 181v3M17.5 223v2M17.5 250v1M18.5 89v3M18.5 93v4M18.5 134v1M18.5 137v3M18.5 149v1M18.5 245v1M19.5 90v2M19.5 95v2M19.5 159v1M19.5 197v1M19.5 203v2M19.5 223v4M19.5 246v1M20.5 89v3M20.5 249v1M21.5 87v2M21.5 91v2M21.5 94v1M21.5 96v5M21.5 147v2M21.5 196v2M21.5 205v1M21.5 225v2M21.5 248v1M22.5 91v1M22.5 196v3M22.5 205v1M22.5 221v1M22.5 227v2M22.5 247v1M23.5 93v1M23.5 146v2M23.5 188v1M24.5 94v2M24.5 140v1M24.5 150v2M24.5 158v2M24.5 193v1M24.5 202v3M24.5 220v3M24.5 226v7M25.5 91v2M25.5 153v3M25.5 202v2M26.5 95v1M26.5 148v1M27.5 88v1M27.5 96v2M27.5 106v2M27.5 206v2M28.5 89v3M28.5 135v6M28.5 142v3M28.5 147v1M28.5 151v1M28.5 153v2M28.5 228v1M29.5 90v1M29.5 136v2M29.5 140v2M29.5 151v4M29.5 194v3M29.5 206v2M29.5 246v1M30.5 136v2M30.5 140v2M30.5 143v7M30.5 151v1M30.5 153v1M30.5 195v2M31.5 91v1M31.5 148v1M31.5 207v1M31.5 215v1M31.5 249v1M32.5 93v1M32.5 97v2M32.5 228v2M32.5 248v1M33.5 87v4M33.5 96v1M33.5 98v4M33.5 137v2M33.5 199v2M33.5 205v2M33.5 212v2M33.5 248v1M34.5 147v2M35.5 95v1M35.5 208v2M35.5 213v3M35.5 243v1M35.5 248v1M36.5 85v1M36.5 166v2M36.5 188v2M36.5 203v2M36.5 248v1M37.5 94v2M37.5 213v1M37.5 223v3M37.5 250v1M38.5 88v1M38.5 91v1M38.5 97v3M38.5 156v1M38.5 228v2M38.5 242v2M39.5 149v1M39.5 214v1M40.5 219v2M40.5 225v1M41.5 89v2M41.5 95v2M41.5 200v4M41.5 246v2M42.5 91v2M42.5 125v1M42.5 145v1M42.5 155v1M42.5 190v1M42.5 204v2M42.5 207v1M42.5 215v2M42.5 218v1M42.5 250v1M43.5 88v2M43.5 92v3M43.5 97v2M43.5 148v1M43.5 157v3M43.5 164v1M43.5 170v1M43.5 179v1M43.5 181v2M43.5 185v1M43.5 194v3M43.5 204v1M43.5 207v1M43.5 242v2M43.5 250v1M44.5 110v2M44.5 113v2M44.5 119v12M44.5 162v4M44.5 167v3M44.5 173v2M44.5 177v4M44.5 187v3M44.5 216v9M44.5 227v5M44.5 245v1M45.5 110v1M45.5 112v1M45.5 115v10M45.5 220v7M45.5 228v1M45.5 230v2M45.5 248v1M46.5 95v2M46.5 110v7M46.5 118v3M46.5 122v8M46.5 160v2M46.5 167v6M46.5 175v7M46.5 183v6M46.5 218v1M46.5 220v4M46.5 225v1M46.5 228v3M46.5 232v1M46.5 247v1M47.5 86v1M47.5 93v1M47.5 97v1M47.5 141v1M47.5 153v1M47.5 196v1M47.5 200v1M47.5 203v1M47.5 207v1M47.5 209v1M47.5 212v1M47.5 242v1M48.5 99v2M48.5 114v1M48.5 134v1M48.5 151v2M48.5 181v1M48.5 198v1M48.5 201v2M48.5 206v2M48.5 247v1M49.5 92v1M49.5 101v2M49.5 194v1M49.5 196v1M49.5 199v6M49.5 206v1M49.5 210v1M49.5 212v4M49.5 218v1M49.5 220v3M49.5 224v1M49.5 236v2M50.5 95v2M50.5 127v3M50.5 131v22M50.5 194v2M50.5 225v2M50.5 228v1M51.5 88v2M51.5 91v1M51.5 93v1M51.5 127v2M51.5 131v21M51.5 187v3M51.5 194v2M51.5 226v2M52.5 95v3M52.5 194v5M52.5 200v1M52.5 204v1M52.5 208v1M52.5 211v1M52.5 215v1M52.5 217v2M52.5 220v1M52.5 222v2M52.5 225v1M52.5 228v1M52.5 238v3M52.5 250v1M53.5 96v1M53.5 137v3M53.5 204v1M53.5 210v2M53.5 215v1M53.5 218v1M53.5 250v1M54.5 90v1M54.5 92v3M54.5 99v2M54.5 166v1M54.5 219v2M55.5 195v1M56.5 89v1M56.5 92v2M56.5 221v1M56.5 229v2M56.5 245v1M57.5 90v2M57.5 94v2M57.5 247v1M58.5 93v1M58.5 97v3M58.5 158v2M58.5 209v3M59.5 93v1M59.5 95v2M59.5 250v1M60.5 92v2M60.5 97v1M60.5 111v1M60.5 139v1M60.5 148v2M60.5 226v1M60.5 249v1M61.5 96v1M61.5 224v1M61.5 248v1M62.5 91v3M62.5 150v4M62.5 190v2M62.5 207v1M62.5 218v2M63.5 89v1M63.5 249v1M64.5 202v1M64.5 206v1M64.5 227v3M65.5 194v2M65.5 207v2M65.5 221v1M65.5 226v3M65.5 249v1M66.5 97v1M66.5 147v2M66.5 157v2M66.5 245v1M67.5 94v3M67.5 99v1M67.5 206v1M67.5 208v1M67.5 249v1M68.5 94v3M68.5 101v1M68.5 131v2M68.5 205v1M68.5 248v1M69.5 192v2M69.5 196v1M70.5 90v3M70.5 98v1M70.5 194v1M71.5 93v3M71.5 139v3M71.5 231v2M71.5 239v1M71.5 250v1M72.5 95v2M72.5 142v4M72.5 201v1M72.5 207v3M72.5 224v1M72.5 245v1M73.5 94v2M73.5 146v3M73.5 186v2M73.5 207v2M73.5 225v3M73.5 249v1M74.5 148v2M74.5 249v1M75.5 96v1M75.5 100v3M75.5 156v1M76.5 96v2M76.5 100v2M76.5 226v3M76.5 246v2M77.5 92v2M77.5 139v2M77.5 204v1M77.5 227v2M77.5 248v1M78.5 88v1M78.5 223v4M78.5 230v1M79.5 87v2M79.5 93v3M79.5 142v2M79.5 201v2M79.5 231v1M80.5 219v2M80.5 227v3M81.5 95v2M81.5 150v1M81.5 205v3M81.5 222v3M81.5 231v1M82.5 140v3M82.5 196v1M83.5 89v3M83.5 98v1M83.5 149v4M83.5 161v1M83.5 223v2M83.5 232v2M84.5 92v1M84.5 248v1M85.5 92v3M85.5 191v2M86.5 89v1M86.5 91v1M86.5 149v2M87.5 96v2M87.5 99v2M87.5 139v2M87.5 163v3M87.5 205v1M87.5 214v3M87.5 244v1M88.5 140v1M88.5 187v2M88.5 248v1M89.5 94v2M89.5 207v3M89.5 247v1M90.5 95v5M90.5 148v2M90.5 163v1M90.5 224v1M90.5 250v1M91.5 88v1M91.5 98v1M91.5 144v1M91.5 214v1M91.5 219v2M91.5 250v1M92.5 193v2M92.5 198v1M92.5 218v1M93.5 132v1M93.5 196v3M93.5 200v1M93.5 202v1M93.5 204v1M93.5 207v1M93.5 209v5M93.5 217v1M93.5 219v5M93.5 246v1M94.5 92v1M94.5 94v2M94.5 143v1M94.5 157v1M94.5 197v1M94.5 199v3M94.5 215v2M94.5 220v2M94.5 223v1M94.5 229v2M95.5 88v1M95.5 90v3M95.5 94v2M95.5 196v7M95.5 204v1M95.5 206v3M95.5 211v3M95.5 215v2M95.5 218v3M95.5 249v1M96.5 93v1M96.5 100v1M96.5 202v1M96.5 206v2M96.5 218v1M97.5 91v4M97.5 135v1M97.5 148v3M97.5 162v1M97.5 204v1M97.5 208v3M97.5 220v1M98.5 92v2M98.5 151v1M98.5 200v1M98.5 208v3M98.5 242v2M99.5 95v3M99.5 143v1M99.5 151v1M99.5 187v3M99.5 194v2M99.5 197v2M99.5 201v2M99.5 229v3M99.5 249v1M100.5 143v2M100.5 157v1M100.5 180v2M100.5 205v1M100.5 209v1M100.5 215v1M100.5 226v1M100.5 228v1M100.5 249v1M101.5 93v1M101.5 96v2M101.5 138v1M101.5 141v1M101.5 147v2M101.5 151v1M101.5 156v1M101.5 158v1M101.5 208v2M101.5 215v1M101.5 222v3M101.5 227v2M101.5 246v2M102.5 113v1M102.5 116v1M102.5 118v1M102.5 121v3M102.5 127v1M102.5 129v8M102.5 159v1M102.5 161v1M102.5 163v6M102.5 170v1M102.5 172v1M102.5 176v2M102.5 181v1M102.5 183v3M102.5 188v1M102.5 191v8M102.5 215v7M102.5 227v1M102.5 230v4M102.5 250v1M103.5 94v2M103.5 113v2M103.5 116v1M103.5 118v16M103.5 159v4M103.5 166v3M103.5 170v3M103.5 174v1M103.5 179v4M103.5 185v3M103.5 191v1M103.5 193v1M103.5 195v3M103.5 216v5M103.5 222v1M103.5 224v4M103.5 230v1M104.5 113v2M104.5 116v1M104.5 118v2M104.5 121v1M104.5 123v1M104.5 125v1M104.5 130v4M104.5 136v5M104.5 143v2M104.5 147v2M104.5 151v2M104.5 155v4M104.5 160v5M104.5 167v1M104.5 170v2M104.5 173v2M104.5 176v1M104.5 179v2M104.5 182v3M104.5 189v1M104.5 191v1M104.5 194v3M104.5 199v1M104.5 201v1M104.5 203v2M104.5 209v2M104.5 214v3M104.5 218v1M104.5 220v2M104.5 224v1M104.5 226v5M104.5 232v1M105.5 86v1M105.5 89v2M105.5 93v2M105.5 135v1M105.5 140v1M105.5 144v1M105.5 197v1M105.5 201v2M105.5 204v1M105.5 209v2M106.5 85v2M106.5 88v2M106.5 93v1M106.5 95v1M106.5 168v2M106.5 202v1M106.5 207v1M106.5 250v1M107.5 89v2M107.5 196v1M107.5 198v2M107.5 202v4M107.5 208v3M107.5 212v4M107.5 218v6M108.5 96v1M108.5 144v1M108.5 187v2M108.5 196v3M108.5 220v3M108.5 228v1M108.5 250v1M109.5 94v2M109.5 97v2M109.5 154v4M109.5 198v5M109.5 204v1M109.5 206v4M109.5 211v9M109.5 221v1M109.5 223v1M109.5 228v3M109.5 246v4M110.5 91v3M110.5 143v3M110.5 206v1M110.5 209v1M110.5 212v2M110.5 227v1M111.5 140v2M111.5 199v1M111.5 208v1M111.5 245v1M112.5 85v1M112.5 89v1M112.5 93v2M112.5 211v2M112.5 219v1M112.5 222v1M112.5 224v3M113.5 88v1M113.5 93v1M113.5 226v1M113.5 248v1M114.5 96v3M114.5 195v1M114.5 204v2M114.5 220v2M115.5 86v1M115.5 93v1M115.5 97v1M115.5 194v2M115.5 231v2M115.5 244v2M115.5 250v1M116.5 89v1M116.5 98v2M116.5 202v1M117.5 153v1M117.5 193v2M117.5 227v2M117.5 233v2M117.5 246v2M118.5 125v1M118.5 158v1M118.5 160v3M118.5 196v1M118.5 220v2M119.5 88v1M119.5 211v4M119.5 249v1M120.5 91v3M120.5 97v1M120.5 100v4M120.5 138v1M120.5 215v2M120.5 224v3M121.5 195v1M121.5 198v1M121.5 208v1M121.5 227v1M121.5 250v1M122.5 87v1M122.5 95v4M122.5 152v2M122.5 180v2M122.5 246v2M123.5 87v1M123.5 92v2M123.5 187v1M123.5 213v1M123.5 248v1M124.5 90v2M124.5 97v1M124.5 149v3M124.5 214v1M125.5 220v1M126.5 89v1M126.5 93v1M126.5 246v1M127.5 93v2M127.5 127v2M127.5 148v3M127.5 214v1M128.5 134v2M128.5 211v1M128.5 246v1M129.5 170v1M129.5 220v2M129.5 231v1M129.5 250v1M130.5 95v2M130.5 148v1M130.5 224v1M131.5 93v2M131.5 98v2M131.5 163v2M131.5 217v3M132.5 89v2M132.5 219v3M132.5 231v3M132.5 249v1M133.5 93v2M133.5 142v2M133.5 211v1M133.5 213v2M133.5 216v2M133.5 221v2M134.5 90v2M134.5 97v1M134.5 203v1M134.5 250v1M135.5 88v2M135.5 123v2M135.5 130v2M135.5 230v1M135.5 250v1M136.5 90v1M136.5 94v2M136.5 147v3M136.5 249v1M137.5 90v1M137.5 98v2M137.5 211v1M137.5 213v1M138.5 86v1M138.5 196v1M138.5 199v4M138.5 205v2M138.5 208v2M138.5 211v2M138.5 215v2M138.5 224v2M139.5 92v1M139.5 98v3M139.5 196v2M139.5 216v3M139.5 250v1M140.5 94v1M140.5 99v1M140.5 162v1M140.5 195v1M140.5 197v3M140.5 201v8M140.5 211v2M140.5 214v1M140.5 217v2M140.5 225v2M140.5 244v1M141.5 93v2M141.5 144v2M141.5 152v2M141.5 200v1M141.5 202v1M141.5 204v2M141.5 247v1M142.5 92v1M142.5 96v3M142.5 202v1M142.5 205v1M142.5 208v4M143.5 94v1M143.5 159v1M143.5 196v3M143.5 200v3M143.5 204v1M143.5 206v5M143.5 212v4M143.5 217v2M143.5 224v1M143.5 248v1M144.5 93v4M144.5 197v2M144.5 216v3M144.5 221v2M144.5 247v1M145.5 89v1M145.5 91v3M145.5 100v1M145.5 153v1M145.5 198v6M145.5 207v1M145.5 210v8M145.5 231v1M145.5 249v1M146.5 92v3M146.5 122v2M146.5 201v1M146.5 205v1M146.5 211v1M147.5 90v3M147.5 204v1M147.5 215v3M148.5 215v1M148.5 232v3M148.5 248v1M149.5 89v3M149.5 98v1M149.5 138v2M149.5 141v2M149.5 160v4M149.5 223v2M149.5 251v1M150.5 202v1M150.5 243v2M150.5 251v1M151.5 88v1M151.5 163v1M151.5 194v1M151.5 226v1M151.5 250v1M152.5 153v3M152.5 192v1M152.5 249v1M153.5 89v2M153.5 95v1M153.5 99v2M153.5 140v2M153.5 194v1M153.5 205v2M153.5 250v1M154.5 95v1M154.5 99v2M154.5 150v2M154.5 159v2M155.5 93v1M155.5 200v2M155.5 219v1M155.5 225v2M155.5 230v3M155.5 249v1M156.5 155v3M156.5 226v1M156.5 248v1M157.5 93v1M157.5 96v2M157.5 144v2M157.5 213v3M157.5 229v2M158.5 97v2M158.5 196v1M158.5 198v2M158.5 201v3M158.5 205v1M158.5 208v5M158.5 218v1M158.5 226v2M158.5 248v1M159.5 89v3M159.5 129v3M159.5 196v2M159.5 212v2M159.5 219v2M159.5 225v2M160.5 88v3M160.5 127v2M160.5 196v3M160.5 212v1M160.5 250v1M161.5 90v1M161.5 94v4M161.5 145v1M161.5 196v2M161.5 212v1M161.5 217v2M162.5 90v3M162.5 94v1M162.5 97v2M162.5 196v2M162.5 200v1M162.5 204v3M162.5 208v1M162.5 210v4M162.5 250v1M163.5 92v2M163.5 197v2M163.5 203v1M163.5 229v1M164.5 148v1M164.5 213v2M164.5 228v1M165.5 113v3M165.5 143v1M165.5 154v1M165.5 205v1M165.5 215v1M165.5 250v1M166.5 89v2M166.5 95v2M166.5 203v1M166.5 221v1M166.5 250v1M167.5 98v2M167.5 202v1M167.5 206v1M167.5 211v1M167.5 215v2M168.5 96v2M168.5 101v3M168.5 130v3M168.5 135v27M168.5 163v1M168.5 166v1M168.5 197v7M168.5 207v3M168.5 212v8M168.5 222v1M169.5 86v1M169.5 89v1M169.5 95v2M169.5 130v3M169.5 136v30M169.5 167v1M169.5 199v6M169.5 206v2M169.5 210v4M169.5 215v1M169.5 217v3M169.5 222v1M169.5 249v1M170.5 88v2M170.5 95v3M170.5 151v2M170.5 199v3M170.5 203v2M170.5 208v1M170.5 210v1M170.5 215v1M170.5 222v2M171.5 92v1M171.5 100v3M171.5 202v1M171.5 207v1M171.5 209v1M171.5 214v1M171.5 226v1M172.5 216v2M172.5 249v1M173.5 239v1M174.5 93v2M174.5 97v3M174.5 222v1M174.5 245v1M175.5 90v1M175.5 216v2M175.5 230v1M176.5 141v3M176.5 196v2M176.5 222v1M177.5 97v2M177.5 124v1M177.5 200v2M177.5 203v3M177.5 248v1M178.5 90v1M178.5 92v1M178.5 94v2M178.5 136v2M178.5 143v2M178.5 150v2M178.5 205v3M178.5 209v1M178.5 216v1M178.5 224v3M179.5 100v1M179.5 198v1M179.5 200v4M179.5 205v3M179.5 209v5M179.5 216v5M179.5 222v2M179.5 248v1M180.5 109v2M180.5 135v3M180.5 194v4M180.5 199v1M180.5 220v2M180.5 229v3M180.5 250v1M181.5 157v2M181.5 193v1M181.5 197v4M181.5 205v3M181.5 209v3M181.5 213v1M181.5 215v5M181.5 222v2M182.5 91v1M182.5 93v7M182.5 203v2M182.5 210v1M182.5 218v1M182.5 222v1M182.5 226v4M183.5 92v1M183.5 95v2M183.5 199v1M183.5 213v1M184.5 89v4M184.5 108v1M184.5 139v1M184.5 150v2M184.5 204v1M184.5 209v2M184.5 215v2M184.5 226v1M184.5 249v1M185.5 51v1M185.5 54v3M185.5 58v2M185.5 109v1M185.5 113v1M185.5 124v1M185.5 131v1M185.5 138v1M185.5 145v1M185.5 150v2M185.5 153v2M185.5 198v4M185.5 211v1M185.5 218v1M185.5 226v3M185.5 250v1M186.5 50v2M186.5 58v1M186.5 90v2M186.5 93v1M186.5 95v2M186.5 98v12M186.5 114v6M186.5 121v9M186.5 132v1M186.5 150v1M186.5 152v9M186.5 164v1M186.5 167v1M186.5 171v2M186.5 176v1M186.5 178v3M186.5 182v1M186.5 185v1M186.5 187v2M186.5 192v1M186.5 194v3M186.5 219v2M186.5 225v3M186.5 231v1M187.5 54v1M187.5 57v3M187.5 87v1M187.5 95v1M187.5 98v10M187.5 116v2M187.5 151v4M187.5 156v1M187.5 161v1M187.5 164v2M187.5 169v2M187.5 172v2M187.5 176v1M187.5 178v4M187.5 183v8M187.5 193v3M187.5 220v2M187.5 224v1M187.5 226v4M187.5 247v1M188.5 90v1M188.5 96v4M188.5 101v1M188.5 104v1M188.5 107v1M188.5 110v5M188.5 116v1M188.5 118v4M188.5 123v1M188.5 125v2M188.5 132v2M188.5 135v2M188.5 139v3M188.5 143v2M188.5 146v2M188.5 149v1M188.5 151v2M188.5 154v1M188.5 194v5M188.5 200v7M188.5 208v4M188.5 213v1M188.5 216v2M188.5 220v2M188.5 235v2M189.5 96v3M189.5 139v1M189.5 142v1M189.5 197v1M189.5 204v1M189.5 208v1M189.5 213v1M190.5 89v2M190.5 107v2M190.5 110v2M190.5 113v3M190.5 117v2M190.5 120v2M190.5 125v1M190.5 127v1M190.5 132v2M190.5 135v1M190.5 138v7M190.5 146v1M190.5 149v2M190.5 206v2M190.5 216v1M190.5 220v1M190.5 231v1M190.5 250v1M191.5 88v1M191.5 90v3M191.5 107v3M191.5 112v25M191.5 139v2M191.5 142v5M191.5 148v1M191.5 150v1M191.5 195v1M191.5 198v14M191.5 214v3M191.5 219v1M191.5 221v1M191.5 223v1M191.5 229v2M192.5 190v2M192.5 195v1M192.5 222v2M193.5 95v1M193.5 97v1M193.5 194v2M193.5 222v2M193.5 250v1M194.5 97v1M194.5 196v2M194.5 200v4M194.5 206v2M194.5 210v6M194.5 217v3M194.5 221v1M194.5 223v1M194.5 249v1M195.5 86v5M195.5 96v1M195.5 194v1M195.5 201v1M195.5 204v1M195.5 213v2M196.5 99v1M196.5 156v2M196.5 203v1M196.5 226v1M196.5 246v1M197.5 221v3M197.5 228v2M197.5 249v1M198.5 208v2M199.5 137v3M199.5 152v2M199.5 222v1M199.5 249v1M200.5 91v1M200.5 127v1M200.5 200v2M200.5 247v1M201.5 88v1M201.5 90v2M201.5 93v2M201.5 97v2M201.5 114v2M201.5 213v3M201.5 230v1M201.5 248v1M202.5 146v1M202.5 208v4M202.5 224v2M202.5 246v2M203.5 207v3M203.5 223v2M203.5 229v3M203.5 249v1M204.5 145v2M204.5 158v1M204.5 229v3M204.5 233v1M204.5 238v3M205.5 92v1M205.5 151v1M205.5 196v1M205.5 228v3M206.5 96v3M206.5 151v1M206.5 248v1M207.5 193v3M207.5 216v2M207.5 230v2M208.5 147v1M208.5 226v1M208.5 249v1M209.5 93v2M209.5 202v1M209.5 237v3M209.5 248v1M210.5 89v6M210.5 96v1M210.5 140v2M210.5 153v2M210.5 200v1M210.5 202v4M210.5 225v3M210.5 249v1M211.5 154v2M211.5 202v1M211.5 205v1M211.5 209v2M211.5 215v2M211.5 221v2M211.5 249v1M212.5 96v3M212.5 191v2M212.5 196v1M212.5 203v1M212.5 209v4M213.5 87v2M213.5 92v2M213.5 194v3M213.5 211v2M213.5 214v1M213.5 249v1M214.5 92v2M214.5 98v1M214.5 119v1M214.5 185v1M214.5 204v1M214.5 206v1M214.5 209v1M214.5 214v1M215.5 91v3M215.5 99v2M215.5 203v1M215.5 209v1M215.5 250v1M216.5 198v1M216.5 200v1M216.5 207v2M216.5 217v4M216.5 249v1M217.5 93v2M217.5 117v3M217.5 153v2M217.5 191v3M217.5 195v1M217.5 197v1M217.5 203v1M217.5 213v4M217.5 219v3M217.5 228v4M218.5 96v2M218.5 113v1M218.5 116v4M218.5 121v3M218.5 126v3M218.5 130v1M218.5 132v1M218.5 135v22M218.5 158v1M218.5 160v1M218.5 162v2M218.5 195v3M218.5 220v3M218.5 248v1M219.5 90v2M219.5 93v1M219.5 113v2M219.5 116v3M219.5 120v3M219.5 125v2M219.5 135v20M219.5 156v6M219.5 164v1M219.5 186v2M219.5 194v1M219.5 196v2M219.5 219v5M219.5 227v2M220.5 89v1M220.5 202v4M220.5 209v2M220.5 213v1M220.5 217v1M220.5 221v1M220.5 223v3M220.5 250v1M221.5 89v2M221.5 191v1M221.5 193v2M221.5 197v2M221.5 213v1M222.5 91v2M222.5 96v2M222.5 145v3M222.5 196v1M222.5 203v2M222.5 209v1M222.5 211v1M222.5 223v4M223.5 90v2M223.5 97v2M223.5 217v1M223.5 220v1M223.5 240v1M224.5 95v1M224.5 215v1M224.5 249v1M225.5 93v4M225.5 139v3M225.5 158v3M225.5 190v2M225.5 197v2M225.5 203v1M225.5 219v4M226.5 204v2M227.5 89v1M227.5 101v3M227.5 210v2M227.5 243v1M228.5 90v2M228.5 94v2M228.5 188v2M228.5 192v3M228.5 202v2M228.5 211v1M228.5 227v1M228.5 235v3M229.5 93v4M229.5 131v1M229.5 133v3M229.5 140v1M229.5 143v2M229.5 147v2M229.5 150v4M229.5 156v2M229.5 189v2M229.5 192v2M229.5 195v3M229.5 203v3M229.5 208v2M229.5 211v2M229.5 214v4M230.5 95v1M230.5 130v1M230.5 132v1M230.5 134v5M230.5 144v2M230.5 148v2M230.5 152v7M230.5 191v1M230.5 217v2M230.5 231v3M230.5 249v1M231.5 87v2M231.5 130v10M231.5 141v4M231.5 147v1M231.5 153v1M231.5 155v4M231.5 189v1M231.5 191v1M231.5 193v1M231.5 198v2M231.5 201v11M231.5 217v1M231.5 221v3M231.5 249v1M232.5 90v4M232.5 95v2M232.5 162v1M232.5 195v1M232.5 198v1M232.5 201v1M232.5 207v1M232.5 209v1M232.5 218v1M232.5 249v1M233.5 90v2M233.5 93v2M233.5 172v3M233.5 194v2M233.5 198v4M233.5 217v1M233.5 230v3M233.5 244v1M233.5 249v1M234.5 87v4M234.5 95v2M234.5 135v1M234.5 142v1M234.5 203v3M234.5 207v1M234.5 228v1M234.5 250v1M235.5 93v1M235.5 97v2M235.5 180v2M235.5 186v3M235.5 203v1M236.5 90v2M236.5 93v1M236.5 164v3M236.5 199v2M236.5 206v2M236.5 221v1M236.5 248v1M237.5 116v2M237.5 207v1M237.5 213v1M237.5 227v5M237.5 234v2M238.5 93v2M238.5 141v3M238.5 199v3M238.5 223v4M239.5 96v1M239.5 99v3M239.5 123v1M239.5 222v3M240.5 90v3M240.5 95v1M240.5 138v1M240.5 197v1M240.5 206v2M240.5 224v2M240.5 228v2M241.5 97v3M241.5 128v1M241.5 205v1M241.5 217v2M241.5 227v2M242.5 93v2M242.5 96v1M242.5 109v1M242.5 130v1M242.5 141v1M242.5 188v3M242.5 210v1M243.5 35v1M243.5 45v2M243.5 48v1M243.5 52v4M243.5 57v2M243.5 62v2M243.5 65v1M243.5 67v1M243.5 71v1M243.5 87v2M243.5 102v1M243.5 112v1M243.5 137v2M243.5 144v1M243.5 168v2M243.5 201v1M243.5 208v1M243.5 211v2M243.5 243v2M244.5 35v1M244.5 41v1M244.5 46v1M244.5 51v1M244.5 53v1M244.5 56v1M244.5 59v1M244.5 65v2M244.5 69v2M244.5 84v7M244.5 93v1M244.5 95v1M244.5 97v5M244.5 103v2M244.5 106v29M244.5 136v3M244.5 143v7M244.5 151v1M244.5 153v2M244.5 156v1M244.5 159v4M244.5 165v6M244.5 172v1M244.5 176v1M244.5 178v1M244.5 180v1M244.5 182v1M244.5 184v2M244.5 189v3M244.5 193v2M244.5 199v2M244.5 206v3M244.5 215v3M244.5 221v1M244.5 224v2M244.5 227v1M244.5 229v2M244.5 241v1M244.5 249v1M245.5 35v1M245.5 38v1M245.5 40v1M245.5 44v1M245.5 48v6M245.5 55v2M245.5 61v1M245.5 64v1M245.5 67v1M245.5 70v1M245.5 72v1M245.5 83v4M245.5 88v8M245.5 99v1M245.5 101v1M245.5 115v2M245.5 125v2M245.5 130v1M245.5 151v7M245.5 161v1M245.5 163v3M245.5 167v4M245.5 175v2M245.5 178v2M245.5 182v1M245.5 185v6M245.5 218v2M245.5 221v4M245.5 229v2M245.5 249v1M246.5 84v1M246.5 86v8M246.5 95v5M246.5 101v6M246.5 108v11M246.5 120v6M246.5 127v5M246.5 134v1M246.5 136v4M246.5 145v2M246.5 149v1M246.5 151v10M246.5 162v1M246.5 166v1M246.5 168v5M246.5 174v1M246.5 177v1M246.5 181v1M246.5 183v1M246.5 186v5M246.5 192v5M246.5 214v15M246.5 231v1M247.5 88v1M247.5 95v4M247.5 134v1M247.5 138v3M247.5 151v1M247.5 204v4M247.5 213v1M247.5 250v1M248.5 119v3M248.5 125v1M248.5 131v1M248.5 139v1M248.5 190v1M248.5 199v1M248.5 202v1M248.5 206v1M248.5 208v1M248.5 214v1M248.5 218v1M248.5 224v1M248.5 230v2M248.5 246v1M249.5 94v1M249.5 130v1M249.5 132v4M249.5 137v2M249.5 141v2M249.5 144v7M249.5 152v2M249.5 190v3M249.5 220v2M249.5 248v1M250.5 93v4M250.5 130v2M250.5 133v5M250.5 150v2M250.5 153v1M250.5 190v2M250.5 221v3M251.5 130v1M251.5 133v4M251.5 138v2M251.5 142v1M251.5 144v2M251.5 147v3M251.5 151v3M251.5 191v2M251.5 221v3M252.5 96v2M252.5 194v1M252.5 196v1M252.5 200v1M252.5 203v2M252.5 209v2M253.5 89v2M253.5 144v2M253.5 163v1M253.5 193v1M253.5 222v2M253.5 249v1M254.5 86v1M254.5 142v2M254.5 150v1M254.5 158v2M254.5 191v1M254.5 193v3M254.5 199v2M254.5 202v5M254.5 209v3M254.5 214v1M254.5 217v2M254.5 243v1M255.5 88v1M255.5 90v2M255.5 98v3M255.5 125v1M255.5 163v1M255.5 191v1M255.5 193v2M255.5 215v4M255.5 226v3M255.5 247v1M256.5 89v4M256.5 94v2M256.5 192v1M256.5 195v1M256.5 199v2M256.5 202v3M256.5 206v1M256.5 209v1M256.5 211v4M256.5 216v3M257.5 92v4M257.5 117v3M257.5 192v1M257.5 200v1M257.5 202v5M257.5 209v1M257.5 213v1M257.5 216v1M257.5 224v1M258.5 88v2M258.5 95v1M258.5 100v1M258.5 144v1M258.5 199v1M258.5 203v1M258.5 223v2M258.5 230v2M258.5 242v1M259.5 89v3M259.5 136v2M259.5 201v1M259.5 226v1M259.5 247v1M260.5 207v3M260.5 213v4M260.5 248v1M261.5 191v3M261.5 245v2M262.5 92v3M262.5 149v1M262.5 192v3M262.5 213v2M262.5 223v4M263.5 95v1M263.5 98v4M263.5 132v5M263.5 151v1M263.5 221v1M263.5 236v4M263.5 247v1M264.5 95v1M264.5 98v1M264.5 199v1M264.5 204v1M264.5 206v1M264.5 219v1M264.5 226v1M265.5 90v1M265.5 155v3M265.5 197v3M265.5 205v2M265.5 245v2M265.5 250v1M266.5 97v3M266.5 152v3M266.5 197v1M266.5 199v1M266.5 201v2M266.5 205v8M266.5 215v3M266.5 223v1M267.5 91v2M267.5 98v1M267.5 111v2M267.5 193v2M267.5 197v2M267.5 212v3M267.5 219v3M268.5 139v3M268.5 197v1M268.5 212v2M268.5 218v2M268.5 226v1M269.5 95v1M269.5 183v1M269.5 197v2M269.5 212v2M270.5 88v2M270.5 132v3M270.5 197v3M270.5 203v12M270.5 217v2M271.5 153v1M271.5 197v2M271.5 203v3M271.5 209v2M271.5 213v2M272.5 212v2M272.5 243v2M273.5 96v2M273.5 135v2M273.5 195v1M273.5 197v1M273.5 205v1M273.5 223v3M273.5 248v1M274.5 197v3M274.5 202v1M274.5 204v1M274.5 246v1M275.5 95v2M275.5 130v2M275.5 133v3M275.5 138v3M275.5 142v2M275.5 147v1M275.5 149v2M275.5 153v1M275.5 155v1M275.5 157v1M275.5 159v4M275.5 194v2M275.5 199v12M275.5 212v3M275.5 217v2M275.5 225v2M276.5 86v3M276.5 130v1M276.5 134v3M276.5 139v2M276.5 149v2M276.5 158v4M276.5 163v2M276.5 195v4M276.5 216v3M276.5 228v1M276.5 249v1M277.5 100v2M277.5 131v1M277.5 133v4M277.5 138v4M277.5 143v4M277.5 149v2M277.5 152v2M277.5 155v4M277.5 160v2M277.5 164v1M277.5 194v5M277.5 200v5M277.5 208v6M277.5 217v1M278.5 144v2M278.5 207v3M278.5 216v1M278.5 222v1M279.5 93v1M279.5 196v1M279.5 199v2M279.5 206v1M280.5 100v1M280.5 210v2M280.5 224v3M280.5 230v1M280.5 247v1M281.5 95v1M281.5 193v2M281.5 200v2M281.5 206v3M281.5 231v1M281.5 234v1M281.5 249v1M282.5 97v3M282.5 197v2M282.5 208v5M282.5 215v2M282.5 222v1M282.5 227v3M282.5 243v2M283.5 99v2M283.5 141v2M283.5 148v4M283.5 192v2M283.5 196v1M283.5 198v1M283.5 207v2M283.5 215v2M283.5 221v1M283.5 223v2M283.5 246v1M284.5 131v2M284.5 135v1M284.5 139v5M284.5 147v6M284.5 154v2M284.5 157v1M284.5 192v6M284.5 199v3M284.5 205v1M284.5 207v1M284.5 209v1M284.5 216v2M284.5 220v1M284.5 223v1M284.5 228v4M284.5 250v1M285.5 93v1M285.5 130v1M285.5 132v6M285.5 140v3M285.5 153v3M285.5 192v1M285.5 222v2M286.5 97v4M286.5 130v5M286.5 139v1M286.5 143v1M286.5 146v2M286.5 149v2M286.5 152v5M286.5 158v1M286.5 192v3M286.5 196v4M286.5 201v1M286.5 204v1M286.5 206v6M286.5 214v3M286.5 219v1M286.5 221v3M287.5 91v1M287.5 105v1M287.5 156v3M287.5 203v1M287.5 207v1M287.5 213v4M287.5 219v1M288.5 92v1M288.5 171v1M288.5 206v1M288.5 225v2M289.5 215v1M289.5 224v1M289.5 228v1M289.5 237v2M290.5 146v2M290.5 243v1M291.5 139v3M291.5 194v1M291.5 228v1M291.5 248v1M292.5 89v2M292.5 96v2M292.5 200v5M292.5 212v4M292.5 250v1M293.5 90v2M293.5 95v1M293.5 97v1M293.5 140v1M293.5 159v1M293.5 200v1M293.5 208v3M293.5 243v2M294.5 154v1M294.5 193v2M294.5 197v1M294.5 201v2M294.5 204v1M294.5 206v3M294.5 221v3M294.5 249v1M295.5 86v1M295.5 132v3M295.5 139v1M295.5 142v2M295.5 154v3M295.5 167v1M295.5 197v1M295.5 204v3M295.5 208v2M295.5 215v3M295.5 249v1M296.5 93v3M296.5 97v3M296.5 101v22M296.5 125v9M296.5 135v7M296.5 150v9M296.5 162v2M296.5 166v1M296.5 169v1M296.5 171v7M296.5 179v1M296.5 181v2M296.5 184v1M296.5 187v1M296.5 189v5M296.5 202v1M296.5 218v4M296.5 223v8M296.5 247v1M297.5 88v1M297.5 93v3M297.5 97v10M297.5 113v2M297.5 156v4M297.5 161v4M297.5 168v2M297.5 171v3M297.5 177v1M297.5 182v1M297.5 184v5M297.5 223v2M297.5 227v4M298.5 88v1M298.5 93v9M298.5 103v1M298.5 105v5M298.5 112v2M298.5 115v1M298.5 117v3M298.5 121v1M298.5 123v4M298.5 128v10M298.5 142v1M298.5 151v5M298.5 159v5M298.5 165v1M298.5 167v1M298.5 175v1M298.5 177v2M298.5 180v1M298.5 182v1M298.5 187v3M298.5 191v2M298.5 195v1M298.5 219v11M298.5 249v1M299.5 91v1M299.5 95v1M299.5 98v2M299.5 104v1M299.5 108v1M299.5 114v2M299.5 132v1M299.5 138v1M299.5 140v4M299.5 194v1M299.5 197v2M299.5 208v1M299.5 213v1M299.5 215v1M299.5 248v1M300.5 98v3M300.5 140v2M300.5 145v2M300.5 149v1M300.5 155v2M300.5 195v1M300.5 204v2M300.5 216v1M300.5 223v4M300.5 247v1M301.5 86v4M301.5 96v3M301.5 119v1M301.5 130v2M301.5 135v2M301.5 139v1M301.5 144v4M301.5 151v1M301.5 153v1M301.5 188v2M301.5 218v4M301.5 223v2M301.5 228v2M302.5 91v2M302.5 98v2M302.5 103v1M302.5 130v1M302.5 132v2M302.5 136v1M302.5 150v5M302.5 187v2M302.5 220v1M302.5 232v1M302.5 245v1M303.5 88v1M303.5 131v2M303.5 134v4M303.5 139v3M303.5 144v1M303.5 146v4M303.5 151v2M303.5 188v1M303.5 220v4M304.5 91v3M304.5 95v3M304.5 136v1M304.5 138v1M304.5 141v1M304.5 143v2M304.5 146v1M304.5 189v2M304.5 219v3M304.5 225v1M304.5 239v1M304.5 248v1M305.5 97v2M305.5 135v1M305.5 143v1M305.5 193v2M305.5 198v1M305.5 200v1M305.5 210v1M305.5 213v1M305.5 216v2M305.5 247v1M306.5 92v2M306.5 195v1M306.5 200v2M306.5 216v1M307.5 139v3M307.5 195v2M307.5 203v1M307.5 210v2M307.5 221v2M307.5 245v1M308.5 89v1M308.5 130v3M308.5 134v2M308.5 139v3M308.5 143v1M308.5 146v3M308.5 150v6M308.5 157v1M308.5 159v1M308.5 163v1M308.5 165v2M308.5 168v2M308.5 171v9M308.5 181v1M308.5 184v4M308.5 190v5M308.5 196v13M308.5 210v1M308.5 212v1M308.5 214v6M308.5 221v1M308.5 223v1M308.5 246v1M309.5 92v4M309.5 97v1M309.5 133v2M309.5 137v5M309.5 146v7M309.5 157v1M309.5 159v2M309.5 162v1M309.5 165v3M309.5 169v7M309.5 178v1M309.5 180v2M309.5 184v1M309.5 187v4M309.5 218v4M309.5 223v1M310.5 89v1M310.5 99v2M310.5 133v1M310.5 137v7M310.5 145v3M310.5 150v1M310.5 153v3M310.5 157v1M310.5 159v4M310.5 164v5M310.5 170v1M310.5 173v3M310.5 180v1M310.5 182v1M310.5 184v1M310.5 187v6M310.5 194v4M310.5 199v6M310.5 206v2M310.5 210v1M310.5 212v3M310.5 216v3M310.5 220v3M310.5 225v1M310.5 248v1M311.5 92v3M311.5 190v1M311.5 197v1M311.5 199v3M311.5 205v1M311.5 207v1M311.5 212v1M311.5 214v2M311.5 220v4M311.5 226v1M311.5 228v2M311.5 250v1M312.5 88v1M312.5 93v2M312.5 98v1M312.5 158v2M312.5 198v2M312.5 214v1M312.5 220v4M312.5 248v1M313.5 96v3M313.5 241v1M314.5 90v2M314.5 99v1M314.5 102v2M314.5 205v1M314.5 218v1M314.5 249v1M315.5 88v1M315.5 90v3M315.5 95v2M315.5 152v1M315.5 199v1M315.5 247v1M316.5 95v3M316.5 148v1M316.5 190v3M316.5 220v3M316.5 250v1M317.5 89v3M317.5 94v2M317.5 153v2M317.5 203v2M317.5 212v2M317.5 248v1M318.5 91v5M318.5 99v2M318.5 144v1M318.5 162v1M318.5 212v2M319.5 89v2M319.5 204v1M319.5 244v1M320.5 88v1M320.5 135v1M320.5 151v1M320.5 194v1M320.5 196v2M320.5 205v3M320.5 213v4M320.5 223v2M320.5 227v3M321.5 92v2M321.5 103v2M321.5 139v1M321.5 143v1M321.5 145v1M321.5 153v1M321.5 180v1M321.5 185v2M321.5 198v3M321.5 204v1M321.5 237v2M321.5 250v1M322.5 113v1M322.5 132v3M322.5 136v6M322.5 143v2M322.5 146v2M322.5 150v1M322.5 153v3M322.5 157v7M322.5 191v2M322.5 194v3M322.5 199v3M322.5 203v1M322.5 208v2M322.5 212v3M322.5 216v2M322.5 241v1M322.5 246v2M323.5 90v2M323.5 96v2M323.5 135v2M323.5 159v3M323.5 163v2M323.5 192v3M323.5 216v4M323.5 250v1M324.5 89v2M324.5 94v1M324.5 98v1M324.5 132v1M324.5 135v1M324.5 140v3M324.5 144v1M324.5 146v1M324.5 148v2M324.5 151v3M324.5 156v1M324.5 159v6M324.5 191v2M324.5 194v3M324.5 198v5M324.5 204v4M324.5 212v1M324.5 214v1M324.5 216v4M324.5 250v1M325.5 90v1M325.5 94v2M325.5 99v2M325.5 136v1M325.5 138v1M325.5 141v1M325.5 197v1M325.5 204v2M325.5 214v1M325.5 217v1M325.5 219v1M326.5 87v2M326.5 90v1M326.5 95v4M326.5 151v1M326.5 203v1M326.5 206v2M326.5 212v1M326.5 227v2M326.5 239v1M326.5 249v1M327.5 88v3M327.5 100v2M327.5 131v2M327.5 142v3M327.5 219v2M327.5 240v1M328.5 91v5M328.5 97v1M328.5 134v2M328.5 139v10M328.5 150v2M328.5 153v1M328.5 155v2M328.5 162v1M328.5 164v8M328.5 175v8M328.5 184v4M328.5 192v2M328.5 195v1M328.5 199v3M328.5 203v3M328.5 207v3M328.5 212v1M328.5 214v1M328.5 216v1M328.5 218v4M328.5 223v1M329.5 86v2M329.5 89v2M329.5 94v2M329.5 134v2M329.5 139v3M329.5 143v1M329.5 145v9M329.5 156v1M329.5 158v2M329.5 162v1M329.5 164v2M329.5 167v1M329.5 169v1M329.5 173v1M329.5 175v1M329.5 177v1M329.5 181v6M329.5 219v5M329.5 228v1M330.5 99v1M330.5 136v1M330.5 138v2M330.5 141v1M330.5 144v1M330.5 147v1M330.5 149v2M330.5 152v2M330.5 155v1M330.5 161v1M330.5 163v1M330.5 166v2M330.5 170v5M330.5 177v1M330.5 182v7M330.5 191v1M330.5 193v4M330.5 198v14M330.5 213v2M330.5 216v6M330.5 223v1M330.5 228v2M330.5 248v1M331.5 89v3M331.5 95v2M331.5 98v3M331.5 191v1M331.5 202v2M331.5 216v1M331.5 221v1M332.5 91v2M332.5 95v1M332.5 98v3M332.5 186v1M332.5 250v1M333.5 97v3M333.5 148v1M333.5 198v1M333.5 208v2M333.5 230v1M334.5 90v1M334.5 93v5M334.5 196v3M334.5 205v2M334.5 214v2M334.5 223v1M335.5 88v1M335.5 92v1M335.5 193v2M335.5 200v3M335.5 204v2M335.5 250v1M336.5 95v3M337.5 93v1M337.5 96v3M337.5 115v2M337.5 190v1M337.5 218v3M337.5 230v2M338.5 141v2M338.5 198v1M338.5 225v2M338.5 229v4M338.5 248v1M339.5 89v2M339.5 92v1M339.5 97v2M339.5 107v3M339.5 144v3M339.5 148v2M339.5 151v2M339.5 154v2M339.5 157v4M339.5 163v2M339.5 193v1M339.5 201v1M339.5 205v3M340.5 93v3M340.5 133v1M340.5 141v2M340.5 144v4M340.5 155v5M340.5 161v2M340.5 218v1M340.5 221v2M340.5 227v2M341.5 89v2M341.5 94v2M341.5 147v1M341.5 154v1M341.5 156v7M341.5 164v1M341.5 204v3M341.5 208v1M341.5 226v2M342.5 92v7M342.5 100v3M342.5 142v3M342.5 146v1M342.5 198v1M342.5 202v1M342.5 211v2M342.5 220v1M342.5 230v1M342.5 250v1M343.5 89v1M343.5 91v4M343.5 140v1M343.5 142v1M343.5 146v1M343.5 153v1M343.5 157v1M343.5 199v2M343.5 213v1M343.5 222v1M344.5 94v2M344.5 98v2M344.5 133v9M344.5 152v8M344.5 191v1M344.5 193v3M344.5 215v2M344.5 218v1M344.5 221v1M344.5 249v1M345.5 90v6M345.5 99v2M345.5 133v1M345.5 135v2M345.5 138v1M345.5 142v3M345.5 152v3M345.5 158v3M345.5 191v4M345.5 216v3M345.5 247v1M346.5 90v2M346.5 97v1M346.5 148v3M346.5 156v1M346.5 161v3M346.5 194v2M346.5 198v1M346.5 200v1M346.5 223v1M346.5 226v2M347.5 88v1M347.5 91v3M347.5 97v2M347.5 142v1M347.5 148v1M347.5 151v1M347.5 154v1M347.5 202v1M347.5 216v1M347.5 223v1M347.5 226v2M347.5 231v2M347.5 248v1M347.5 250v1M348.5 91v1M348.5 95v1M348.5 97v5M348.5 155v2M348.5 203v2M348.5 210v1M349.5 90v5M349.5 135v2M349.5 142v4M349.5 206v2M349.5 212v2M349.5 215v1M349.5 220v1M349.5 225v1M349.5 248v1M350.5 89v1M350.5 151v2M350.5 192v2M350.5 207v1M350.5 220v1M350.5 223v1M350.5 239v2M350.5 250v1M351.5 92v2M351.5 95v4M351.5 198v2M351.5 228v1M352.5 91v2M352.5 133v1M352.5 135v3M352.5 139v1M352.5 141v2M352.5 144v2M352.5 147v1M352.5 150v8M352.5 159v2M352.5 195v2M352.5 198v1M352.5 202v1M352.5 204v5M352.5 210v2M352.5 220v3M352.5 229v1M353.5 89v1M353.5 117v2M353.5 134v5M353.5 147v3M353.5 151v2M353.5 154v6M353.5 194v2M353.5 211v1M354.5 91v2M354.5 94v1M354.5 96v1M354.5 135v1M354.5 137v11M354.5 150v1M354.5 153v3M354.5 157v2M354.5 194v5M354.5 200v3M354.5 209v2M354.5 220v1M354.5 229v2M354.5 249v1M355.5 88v1M355.5 91v2M355.5 97v1M355.5 147v2M355.5 199v1M355.5 202v2M355.5 208v1M355.5 210v1M355.5 250v1M356.5 88v3M356.5 93v5M356.5 149v3M356.5 199v1M356.5 209v3M356.5 231v2M356.5 250v1M356.5 252v1M357.5 90v1M357.5 92v1M357.5 94v1M357.5 98v1M357.5 112v1M357.5 138v2M357.5 237v2M358.5 95v1M358.5 98v1M358.5 226v1M358.5 235v2M359.5 88v1M359.5 90v3M359.5 95v1M359.5 97v2M359.5 102v1M359.5 139v1M359.5 201v1M359.5 206v5M359.5 250v1M360.5 89v2M360.5 94v3M360.5 212v4M360.5 222v1M360.5 226v1M360.5 233v2M361.5 95v3M361.5 133v1M361.5 137v2M361.5 140v1M361.5 142v2M361.5 145v3M361.5 150v1M361.5 154v2M362.5 87v2M362.5 91v3M362.5 99v1M362.5 133v1M362.5 135v4M362.5 144v3M362.5 152v5M362.5 186v1M362.5 192v2M363.5 90v3M363.5 95v2M363.5 133v1M363.5 136v3M363.5 141v4M363.5 146v1M363.5 153v1M363.5 155v1M363.5 195v2M363.5 213v1M363.5 218v3M363.5 231v2M363.5 250v1M364.5 88v1M364.5 91v1M364.5 95v6M364.5 143v2M364.5 195v2M364.5 200v2M364.5 226v3M364.5 242v2M364.5 245v1M365.5 91v3M365.5 96v1M365.5 99v2M365.5 199v2M365.5 213v1M365.5 249v1M366.5 91v7M366.5 100v1M366.5 140v1M366.5 192v2M366.5 210v4M366.5 233v1M366.5 242v1M367.5 94v1M367.5 103v1M367.5 144v2M367.5 147v1M367.5 155v1M367.5 201v1M367.5 208v1M367.5 212v3M367.5 227v2M368.5 88v5M368.5 136v3M368.5 153v2M368.5 156v2M368.5 160v1M368.5 210v2M368.5 228v2M369.5 136v1M369.5 158v2M369.5 162v2M369.5 194v2M369.5 210v1M369.5 248v1M370.5 92v4M370.5 139v2M370.5 144v1M370.5 153v1M370.5 194v3M370.5 200v6M370.5 208v1M370.5 211v1M370.5 226v2M371.5 91v6M371.5 99v2M371.5 139v1M371.5 143v1M371.5 204v2M371.5 246v2M372.5 87v1M372.5 96v3M372.5 206v2M373.5 90v1M373.5 94v2M373.5 97v1M373.5 99v2M373.5 202v1M373.5 205v3M373.5 219v2M374.5 90v1M374.5 92v4M374.5 196v1M374.5 198v6M374.5 205v8M374.5 219v4M374.5 226v3M374.5 250v1M375.5 92v2M375.5 95v1M375.5 142v1M375.5 173v2M375.5 196v1M375.5 198v1M375.5 212v3M375.5 220v2M376.5 90v3M376.5 96v2M376.5 159v1M376.5 197v3M376.5 201v2M376.5 250v1M377.5 89v2M377.5 93v1M377.5 160v2M377.5 198v1M377.5 202v2M377.5 207v1M377.5 234v2M378.5 89v2M378.5 97v3M378.5 138v1M378.5 140v2M378.5 143v2M378.5 148v3M378.5 152v4M378.5 157v1M378.5 165v1M378.5 198v3M378.5 212v3M378.5 225v1M378.5 228v1M378.5 241v3M378.5 249v1M379.5 89v2M379.5 94v3M379.5 136v4M379.5 147v3M379.5 154v2M379.5 157v1M379.5 166v2M379.5 194v1M379.5 197v1M379.5 214v1M379.5 226v3M379.5 237v3M380.5 89v2M380.5 93v1M380.5 190v3M380.5 210v1M380.5 222v1M380.5 247v1M381.5 95v1M381.5 100v3M381.5 115v3M381.5 141v1M381.5 211v2M381.5 241v2M381.5 245v2M382.5 93v1M382.5 96v2M382.5 229v2M383.5 95v5M383.5 122v1M383.5 158v1M383.5 212v3M383.5 227v2M383.5 250v1M384.5 91v2M384.5 96v1M384.5 213v3M384.5 227v1M384.5 245v1M385.5 94v5M385.5 100v2M385.5 135v1M385.5 210v3M385.5 223v2M385.5 226v5M385.5 232v2M385.5 249v1M386.5 86v3M386.5 91v1M386.5 94v1M386.5 98v2M386.5 136v2M386.5 139v1M386.5 142v4M386.5 147v3M386.5 151v2M386.5 154v1M386.5 156v2M386.5 218v1M386.5 226v3M386.5 231v2M387.5 91v1M387.5 98v4M387.5 136v5M387.5 150v7M387.5 158v1M387.5 169v2M387.5 213v1M387.5 215v1M387.5 219v2M387.5 222v3M387.5 227v1M387.5 250v1M388.5 91v3M388.5 131v2M388.5 135v2M388.5 138v5M388.5 144v1M388.5 146v3M388.5 151v1M388.5 153v2M388.5 156v2M388.5 224v5M388.5 248v1M389.5 91v1M389.5 95v1M389.5 97v1M389.5 150v3M389.5 228v1M390.5 91v2M390.5 94v1M390.5 139v3M390.5 143v3M390.5 219v2M390.5 248v1M391.5 145v1M391.5 190v1M391.5 200v1M391.5 210v2M391.5 247v1M392.5 89v2M392.5 94v2M392.5 97v3M392.5 104v2M392.5 205v1M392.5 209v3M392.5 218v2M392.5 227v3M393.5 91v1M393.5 94v2M393.5 98v1M393.5 216v2M393.5 229v2M393.5 250v1M394.5 88v5M394.5 94v1M394.5 247v1M395.5 93v2M395.5 96v3M395.5 103v1M395.5 141v1M395.5 143v13M395.5 158v1M395.5 214v1M395.5 216v1M395.5 230v1M396.5 88v1M396.5 93v2M396.5 140v1M396.5 142v17M396.5 193v1M396.5 203v1M396.5 207v5M396.5 249v1M397.5 89v3M397.5 96v3M397.5 102v1M397.5 137v2M397.5 197v4M397.5 203v6M397.5 210v1M397.5 250v1M398.5 93v3M398.5 140v3M398.5 197v2M398.5 210v2M398.5 250v1M399.5 88v2M399.5 95v3M399.5 138v3M399.5 198v4M399.5 204v2M399.5 207v3M399.5 211v4M399.5 222v2M399.5 225v1M400.5 89v3M400.5 196v3M400.5 208v1M400.5 211v2M400.5 214v1M401.5 99v2M401.5 102v1M401.5 141v1M401.5 188v1M401.5 205v4M401.5 223v1M401.5 231v1M401.5 249v1M402.5 92v2M402.5 95v2M402.5 98v1M402.5 142v2M402.5 229v1M403.5 92v1M403.5 95v1M403.5 97v2M403.5 157v1M403.5 231v1M404.5 89v2M404.5 94v2M404.5 134v2M404.5 137v1M404.5 209v4M405.5 91v2M405.5 96v1M405.5 129v3M405.5 197v3M405.5 209v3M405.5 250v1M406.5 90v1M406.5 94v3M406.5 141v2M406.5 146v1M406.5 223v1M406.5 228v3M407.5 89v6M407.5 138v1M407.5 197v3M407.5 226v1M408.5 91v1M408.5 94v1M408.5 204v3M408.5 221v2M408.5 228v2M408.5 247v1M409.5 95v4M409.5 195v1M409.5 199v4M409.5 204v1M409.5 223v2M409.5 244v1M409.5 248v1M410.5 89v1M410.5 93v2M410.5 110v2M410.5 194v10M410.5 205v5M410.5 211v4M410.5 221v2M410.5 228v2M410.5 250v1M411.5 91v1M411.5 93v3M411.5 193v6M411.5 211v3M411.5 229v1M411.5 249v1M412.5 89v2M412.5 94v3M412.5 144v3M412.5 199v1M412.5 205v1M412.5 208v1M412.5 211v3M412.5 223v1M413.5 89v2M413.5 92v1M413.5 95v3M413.5 206v2M413.5 227v4M413.5 250v1M414.5 88v3M414.5 93v3M414.5 196v1M414.5 211v2M414.5 221v3M414.5 228v1M415.5 90v1M415.5 101v1M415.5 188v1M415.5 196v3M415.5 203v4M415.5 216v3M415.5 228v3M415.5 241v2M415.5 249v1M416.5 89v1M416.5 98v3M416.5 138v1M416.5 210v1M416.5 214v2M417.5 88v2M417.5 91v1M417.5 93v1M417.5 96v3M417.5 146v4M417.5 151v7M417.5 160v1M417.5 206v2M418.5 87v1M418.5 90v3M418.5 120v1M418.5 144v1M418.5 147v9M418.5 157v2M418.5 160v1M418.5 196v2M418.5 212v1M419.5 96v3M419.5 152v3M419.5 216v3M419.5 243v2M419.5 250v1M420.5 90v3M420.5 94v2M420.5 99v1M420.5 134v1M420.5 158v2M420.5 211v1M420.5 228v3M420.5 251v1M421.5 87v4M421.5 94v2M421.5 158v3M421.5 214v1M421.5 223v1M421.5 245v1M422.5 88v2M422.5 92v1M422.5 112v2M422.5 228v1M422.5 247v1M423.5 95v2M423.5 99v2M423.5 158v2M423.5 250v1M424.5 91v3M424.5 96v1M424.5 99v1M424.5 208v1M424.5 217v1M424.5 247v2M425.5 86v1M425.5 88v3M425.5 145v2M425.5 148v1M425.5 150v4M425.5 155v1M425.5 157v2M425.5 213v2M425.5 250v1M426.5 87v1M426.5 90v2M426.5 144v1M426.5 146v1M426.5 150v2M426.5 153v1M426.5 156v1M426.5 158v1M426.5 218v3M427.5 99v3M427.5 207v3M428.5 87v1M428.5 89v1M428.5 92v1M428.5 99v1M428.5 133v1M428.5 221v1M428.5 226v1M428.5 230v2M428.5 250v1M429.5 88v2M429.5 96v1M429.5 101v1M429.5 214v1M429.5 224v1M429.5 250v1M430.5 90v4M430.5 97v1M430.5 160v1M430.5 224v2M430.5 233v1M430.5 249v1M431.5 88v1M431.5 94v2M431.5 147v1M431.5 197v1M431.5 230v2M431.5 234v2M431.5 243v2M432.5 87v1M432.5 93v6M432.5 208v1M432.5 221v1M432.5 247v1M433.5 86v2M433.5 91v1M433.5 99v2M433.5 199v4M433.5 218v1M433.5 226v3M433.5 241v3M433.5 248v2M434.5 89v3M434.5 93v3M434.5 97v3M434.5 193v1M434.5 201v2M434.5 222v1M434.5 227v3M434.5 245v1M434.5 250v1M435.5 89v2M435.5 96v1M435.5 98v3M435.5 196v2M435.5 205v2M435.5 228v1M435.5 231v1M436.5 88v3M436.5 93v2M436.5 96v3M436.5 154v1M436.5 156v2M436.5 218v1M436.5 223v2M436.5 230v2M437.5 91v2M437.5 154v1M437.5 196v3M437.5 228v1M437.5 248v1M438.5 89v1M438.5 97v2M438.5 144v2M438.5 197v2M438.5 218v3M438.5 227v2M438.5 230v2M438.5 249v1M439.5 89v7M439.5 154v2M439.5 227v1M440.5 92v2M440.5 118v1M441.5 96v1M441.5 183v1M441.5 205v2M441.5 229v3M441.5 247v1M442.5 87v2M443.5 93v1M443.5 97v3M443.5 142v2M443.5 195v2M443.5 216v3M443.5 243v2M444.5 88v1M444.5 96v2M444.5 207v3M444.5 217v2M444.5 228v3M444.5 249v1M445.5 87v2M445.5 97v1M445.5 140v2M445.5 201v1M445.5 204v2M445.5 227v1M445.5 250v1M446.5 90v1M446.5 92v2M446.5 96v2M446.5 159v1M447.5 85v1M447.5 90v1M447.5 143v1M447.5 148v1M447.5 204v2M447.5 209v1M447.5 224v3M448.5 87v1M448.5 90v2M448.5 96v2M448.5 137v1M448.5 142v1M448.5 148v1M448.5 160v1M448.5 162v1M448.5 187v1M448.5 196v1M448.5 203v1M448.5 206v2M448.5 214v3M448.5 221v4M449.5 89v3M449.5 93v2M449.5 100v2M449.5 123v2M449.5 126v13M449.5 142v1M449.5 154v2M449.5 159v3M449.5 163v1M449.5 167v2M449.5 170v3M449.5 174v1M449.5 177v2M449.5 187v5M449.5 193v1M449.5 195v3M449.5 216v5M449.5 223v1M450.5 88v3M450.5 92v1M450.5 94v2M450.5 99v1M450.5 120v1M450.5 123v1M450.5 125v1M450.5 130v3M450.5 161v2M450.5 164v3M450.5 168v2M450.5 175v2M450.5 180v2M450.5 183v4M450.5 190v1M450.5 192v5M450.5 217v1M450.5 219v1M450.5 221v3M450.5 225v6M450.5 232v1M450.5 234v3M451.5 89v1M451.5 92v1M451.5 94v3M451.5 123v1M451.5 125v2M451.5 128v11M451.5 144v1M451.5 150v1M451.5 157v4M451.5 162v1M451.5 164v3M451.5 171v1M451.5 174v1M451.5 177v1M451.5 180v1M451.5 183v1M451.5 185v1M451.5 188v1M451.5 191v6M451.5 216v3M451.5 220v2M451.5 223v1M452.5 90v4M452.5 95v1M452.5 133v1M452.5 142v1M452.5 154v5M452.5 205v1M452.5 222v1M452.5 225v1M453.5 90v4M453.5 101v2M453.5 141v1M453.5 146v2M453.5 201v1M453.5 206v1M453.5 218v3M453.5 228v2M453.5 248v1M454.5 88v3M454.5 195v1M454.5 197v1M454.5 199v1M454.5 203v1M454.5 207v1M454.5 209v1M454.5 211v5M454.5 217v1M454.5 219v1M454.5 221v1M455.5 90v2M455.5 95v1M455.5 97v2M455.5 138v1M455.5 143v3M455.5 147v8M455.5 157v2M455.5 194v3M455.5 221v2M455.5 230v2M455.5 250v1M456.5 89v2M456.5 93v1M456.5 138v4M456.5 153v4M456.5 194v1M456.5 196v1M456.5 221v2M457.5 89v2M457.5 96v1M457.5 98v2M457.5 135v4M457.5 140v1M457.5 142v2M457.5 145v1M457.5 148v2M457.5 151v1M457.5 153v3M457.5 158v1M457.5 194v4M457.5 220v2M457.5 223v1M457.5 250v1M458.5 87v2M458.5 90v1M458.5 93v3M458.5 97v1M458.5 100v2M458.5 195v12M458.5 208v5M458.5 217v4M458.5 222v2M458.5 249v1M459.5 88v5M459.5 95v4M459.5 148v2M459.5 214v1M459.5 225v1M459.5 248v1M460.5 137v2M460.5 197v1M460.5 210v3M460.5 229v1M460.5 247v1M461.5 92v1M461.5 95v2M461.5 99v3M461.5 147v2M461.5 208v1M461.5 210v1M461.5 226v2M461.5 241v3M462.5 89v2M462.5 92v1M462.5 96v1M462.5 222v2M462.5 249v1M463.5 89v2M463.5 92v3M463.5 97v1M463.5 99v2M463.5 144v1M463.5 147v1M463.5 158v2M463.5 197v1M463.5 207v1M463.5 221v3M463.5 249v1M464.5 88v2M464.5 91v2M464.5 94v5M464.5 139v1M464.5 211v1M465.5 91v3M465.5 160v1M465.5 200v1M465.5 226v1M465.5 228v2M465.5 245v1M466.5 89v2M466.5 99v3M466.5 220v1M466.5 227v3M466.5 249v1M467.5 89v2M467.5 93v1M467.5 95v2M467.5 98v1M467.5 117v2M467.5 152v1M467.5 195v2M467.5 226v3M467.5 249v2M468.5 94v2M468.5 98v1M468.5 218v3M468.5 248v1M469.5 94v3M469.5 161v1M469.5 201v1M469.5 215v1M469.5 224v1M469.5 236v3M469.5 248v1M470.5 89v2M470.5 157v1M470.5 205v2M470.5 231v1M471.5 92v3M471.5 228v3M471.5 249v1M472.5 90v2M472.5 93v2M472.5 97v2M472.5 212v2M472.5 228v3M472.5 248v1M473.5 88v3M473.5 98v1M473.5 140v2M473.5 202v2M473.5 218v1M474.5 90v1M474.5 93v2M474.5 152v2M474.5 208v4M474.5 213v1M475.5 87v1M475.5 90v2M475.5 94v1M475.5 135v1M475.5 139v3M475.5 144v3M475.5 148v3M475.5 152v1M475.5 154v1M475.5 211v3M475.5 249v1M476.5 93v3M476.5 136v3M476.5 150v3M476.5 155v2M476.5 248v1M477.5 90v3M477.5 98v1M477.5 136v6M477.5 145v1M477.5 149v5M477.5 221v1M477.5 247v1M478.5 91v6M478.5 98v2M478.5 218v2M478.5 229v1M478.5 249v1M479.5 90v2M479.5 93v3M479.5 196v2M479.5 200v1M479.5 250v1M480.5 87v1M480.5 89v1M480.5 91v6M480.5 98v1M480.5 230v3M480.5 250v1M481.5 88v2M481.5 157v1M481.5 210v3M482.5 87v5M482.5 93v4M482.5 100v1M482.5 248v1M483.5 90v1M483.5 107v1M483.5 139v3M483.5 217v2M483.5 226v1M484.5 96v6M484.5 220v2M484.5 227v1M484.5 229v1M485.5 88v6M485.5 96v1M485.5 136v3M485.5 141v1M485.5 143v2M485.5 148v3M485.5 153v1M485.5 188v3M485.5 204v2M485.5 250v1M486.5 86v3M486.5 94v3M486.5 135v16M486.5 154v1M486.5 191v2M486.5 209v1M486.5 228v3M486.5 232v2M486.5 246v2M487.5 89v1M487.5 135v2M487.5 138v1M487.5 140v5M487.5 146v3M487.5 153v1M487.5 201v2M487.5 219v2M488.5 97v1M488.5 200v2M488.5 205v1M488.5 208v1M488.5 214v2M488.5 228v2M488.5 241v3M488.5 245v1M489.5 84v1M489.5 90v3M489.5 94v2M489.5 98v2M489.5 102v1M489.5 150v2M489.5 231v1M489.5 248v1M490.5 88v1M490.5 92v2M490.5 95v4M490.5 157v1M490.5 208v3M491.5 86v1M491.5 88v4M491.5 199v2M491.5 230v2M491.5 247v1M492.5 91v2M492.5 116v2M492.5 148v2M492.5 152v3M492.5 213v4M493.5 89v2M493.5 95v6M493.5 104v1M493.5 212v1M493.5 218v1M493.5 222v2M493.5 229v2M493.5 245v2M493.5 249v1M494.5 89v2M494.5 93v1M494.5 98v2M494.5 141v1M494.5 144v2M494.5 224v3M494.5 247v1M495.5 91v4M495.5 135v1M495.5 226v1M495.5 228v4M496.5 86v1M496.5 88v2M496.5 217v3M497.5 91v2M497.5 94v6M497.5 202v3M498.5 87v3M498.5 93v3M498.5 201v3M498.5 227v3M498.5 231v1M498.5 249v1M499.5 91v1M499.5 93v1M499.5 99v4M499.5 194v2M499.5 230v3M500.5 90v2M500.5 96v3M500.5 151v1M500.5 156v1M500.5 203v1M500.5 226v2M501.5 93v1M501.5 95v1M501.5 123v2M501.5 206v1M501.5 209v2M501.5 228v2M501.5 250v1M502.5 87v7M502.5 98v3M502.5 102v1M502.5 203v1M502.5 230v1M502.5 249v1M503.5 89v2M503.5 97v1M503.5 151v1M503.5 219v1M503.5 227v3M504.5 92v3M504.5 143v1M504.5 145v1M504.5 150v1M504.5 154v1M504.5 157v1M504.5 159v1M504.5 169v1M504.5 183v1M504.5 196v1M504.5 206v1M504.5 211v2M504.5 227v3M504.5 249v1M505.5 92v2M505.5 98v1M505.5 100v2M505.5 135v1M505.5 138v5M505.5 147v5M505.5 153v13M505.5 169v2M505.5 173v1M505.5 175v1M505.5 179v3M505.5 186v8M505.5 195v2M505.5 249v1M506.5 89v3M506.5 95v1M506.5 97v3M506.5 136v1M506.5 138v2M506.5 141v1M506.5 143v6M506.5 153v1M506.5 155v2M506.5 158v7M506.5 166v1M506.5 168v5M506.5 174v1M506.5 176v2M506.5 179v1M506.5 182v5M506.5 189v1M506.5 191v3M506.5 195v3M506.5 227v4M506.5 247v1M507.5 87v2M507.5 90v1M507.5 92v2M507.5 96v2M507.5 143v1M507.5 146v1M507.5 151v1M507.5 161v2M507.5 172v1M507.5 187v1M508.5 90v3M508.5 96v1M508.5 144v2M508.5 162v1M508.5 187v1M508.5 230v1M508.5 233v1M509.5 88v1M509.5 95v1M509.5 100v1M509.5 156v3M509.5 197v1M509.5 205v1M509.5 208v1M510.5 91v2M510.5 95v1M510.5 230v1M510.5 247v1M511.5 88v3M511.5 97v2M511.5 180v3M511.5 204v3M511.5 229v1M511.5 249v1M512.5 87v2M512.5 94v1M512.5 97v1M512.5 181v3M512.5 214v3M512.5 219v1M512.5 221v2M513.5 87v2M513.5 97v2M513.5 206v1M514.5 89v1M514.5 137v2M514.5 147v2M514.5 249v1M515.5 89v1M515.5 91v6M515.5 199v1M515.5 216v1M516.5 90v1M516.5 93v5M516.5 201v2M516.5 210v2M516.5 248v1M517.5 89v4M517.5 95v6M517.5 155v1M517.5 198v2M517.5 212v3M517.5 228v2M517.5 232v1M518.5 90v2M518.5 93v7M518.5 148v3M518.5 226v1M518.5 229v1M519.5 89v1M519.5 92v1M519.5 94v3M519.5 153v1M519.5 200v1M519.5 229v1M519.5 234v2M520.5 88v1M520.5 93v2M520.5 98v2M520.5 138v1M520.5 142v1M520.5 144v1M520.5 148v3M520.5 153v3M520.5 158v1M520.5 249v1M521.5 89v5M521.5 95v1M521.5 97v5M521.5 138v2M521.5 141v14M521.5 156v1M521.5 158v1M521.5 200v3M521.5 205v2M521.5 213v1M522.5 91v4M522.5 97v1M522.5 138v3M522.5 142v7M522.5 150v5M522.5 156v1M522.5 205v1M522.5 228v3M522.5 249v1M523.5 89v4M523.5 94v2M523.5 98v1M523.5 149v2M523.5 161v1M523.5 195v2M523.5 208v4M524.5 89v1M524.5 98v4M524.5 169v2M524.5 185v1M524.5 227v3M524.5 249v1M525.5 90v1M525.5 96v3M525.5 142v2M525.5 200v1M525.5 227v2M525.5 247v1M526.5 90v2M526.5 93v2M526.5 96v1M526.5 140v2M526.5 143v1M526.5 191v2M526.5 225v2M526.5 250v1M527.5 92v1M527.5 95v5M527.5 136v1M527.5 194v2M528.5 100v2M528.5 187v1M528.5 200v1M528.5 204v2M528.5 208v1M528.5 228v4M529.5 87v3M529.5 93v2M529.5 98v5M529.5 204v1M529.5 227v1M529.5 232v2M529.5 243v1M530.5 87v5M530.5 197v3M530.5 210v1M530.5 248v1M531.5 86v1M531.5 94v1M531.5 99v1M531.5 198v2M531.5 210v1M531.5 217v2M531.5 245v2M531.5 250v1M532.5 90v3M532.5 141v1M532.5 156v1M532.5 201v1M532.5 207v1M532.5 210v1M532.5 212v1M532.5 250v1M533.5 89v1M533.5 93v3M533.5 105v1M533.5 140v1M533.5 142v1M533.5 160v2M533.5 191v1M533.5 199v1M533.5 208v1M533.5 247v1M534.5 88v2M534.5 101v3M534.5 145v1M534.5 157v3M534.5 196v2M534.5 248v1M535.5 88v2M535.5 92v2M535.5 156v2M535.5 224v1M535.5 248v1M536.5 90v2M536.5 93v6M536.5 189v3M536.5 194v3M536.5 219v1M537.5 89v1M537.5 93v3M537.5 101v1M537.5 141v1M537.5 221v1M537.5 225v1M538.5 96v2M538.5 214v1M538.5 221v1M538.5 226v2M538.5 230v3M538.5 249v1M539.5 88v1M539.5 98v1M539.5 182v1M539.5 207v1M539.5 214v2M540.5 86v1M540.5 89v5M540.5 218v3M540.5 230v2M540.5 248v1M541.5 90v2M541.5 94v3M541.5 98v1M541.5 139v1M541.5 243v1M541.5 251v1M542.5 88v1M542.5 90v4M542.5 96v1M542.5 98v1M542.5 100v2M542.5 119v2M542.5 193v1M542.5 226v1M542.5 229v1M542.5 248v1M543.5 88v2M543.5 95v2M543.5 102v1M543.5 138v2M543.5 142v3M543.5 149v2M543.5 152v2M543.5 155v1M543.5 157v5M543.5 163v2M543.5 230v1M543.5 250v1M544.5 88v1M544.5 96v2M544.5 140v3M544.5 153v11M544.5 178v1M544.5 216v3M544.5 228v1M544.5 231v2M544.5 248v1M545.5 85v2M545.5 88v2M545.5 138v4M545.5 143v7M545.5 151v2M545.5 155v2M545.5 161v2M545.5 194v2M545.5 201v1M545.5 206v1M545.5 226v1M545.5 228v1M546.5 89v3M546.5 94v3M546.5 98v3M546.5 201v1M546.5 250v1M547.5 87v5M547.5 96v1M547.5 196v3M547.5 200v3M547.5 205v2M547.5 209v4M547.5 226v3M547.5 246v1M548.5 95v5M548.5 144v1M548.5 185v2M548.5 196v2M548.5 211v7M549.5 89v3M549.5 138v2M549.5 197v1M549.5 199v1M549.5 202v1M549.5 205v1M549.5 209v1M549.5 211v2M549.5 225v3M549.5 229v2M550.5 93v1M550.5 96v2M550.5 164v2M550.5 250v1M551.5 90v1M551.5 157v1M551.5 193v1M551.5 197v3M551.5 202v1M551.5 219v1M551.5 230v3M552.5 91v1M552.5 99v2M552.5 227v1M552.5 249v1M553.5 90v1M553.5 93v1M553.5 97v4M553.5 220v2M553.5 228v2M553.5 245v2M554.5 91v2M554.5 97v3M554.5 208v3M554.5 225v2M554.5 230v2M554.5 248v1M555.5 87v2M555.5 91v1M555.5 96v1M555.5 141v1M555.5 192v1M555.5 232v1M556.5 90v3M556.5 94v3M556.5 98v1M556.5 209v1M556.5 225v1M556.5 246v1M556.5 248v2M557.5 89v1M557.5 96v1M557.5 99v2M557.5 205v1M557.5 212v2M558.5 89v1M558.5 94v2M558.5 134v1M558.5 204v1M558.5 216v2M558.5 228v2M558.5 240v1M559.5 92v6M559.5 99v1M559.5 152v1M559.5 154v1M559.5 159v1M559.5 203v1M559.5 208v2M559.5 211v1M559.5 214v1M560.5 90v3M560.5 99v1M560.5 101v3M560.5 133v2M560.5 139v1M560.5 162v1M560.5 164v1M560.5 196v2M560.5 218v1M560.5 227v2M561.5 88v2M561.5 93v1M561.5 137v2M561.5 162v3M561.5 196v2M561.5 217v3M561.5 245v1M562.5 89v2M562.5 93v2M562.5 96v3M562.5 137v9M562.5 148v12M562.5 161v2M562.5 196v4M562.5 210v1M562.5 216v4M562.5 246v1M563.5 90v1M563.5 92v2M563.5 98v1M563.5 151v1M563.5 157v1M563.5 205v1M563.5 208v1M563.5 214v1M563.5 223v4M563.5 249v1M564.5 94v2M564.5 98v2M564.5 140v2M564.5 196v1M564.5 200v3M564.5 206v5M564.5 214v2M564.5 217v1M564.5 220v4M564.5 228v3M565.5 88v1M565.5 90v1M565.5 93v1M565.5 150v1M565.5 196v3M565.5 222v2M565.5 229v1M566.5 89v2M566.5 92v2M566.5 96v1M566.5 157v2M566.5 196v2M566.5 222v2M567.5 85v2M567.5 90v3M567.5 94v1M567.5 98v1M567.5 150v2M567.5 155v2M567.5 196v2M567.5 221v3M567.5 250v1M568.5 87v1M568.5 89v3M568.5 97v1M568.5 133v2M568.5 197v1M568.5 199v1M568.5 202v1M568.5 206v1M568.5 209v3M568.5 215v1M568.5 217v1M568.5 219v1M568.5 221v3M568.5 246v2M569.5 92v3M569.5 131v1M569.5 133v3M569.5 137v1M569.5 139v2M569.5 143v2M569.5 146v1M569.5 148v2M569.5 152v1M569.5 155v1M569.5 157v2M569.5 211v1M569.5 217v1M569.5 229v3M569.5 247v1M570.5 89v2M570.5 92v1M570.5 96v2M570.5 131v5M570.5 139v3M570.5 146v2M570.5 150v2M570.5 154v5M570.5 229v3M570.5 250v1M571.5 93v6M571.5 130v3M571.5 136v6M571.5 143v5M571.5 149v1M571.5 152v2M571.5 156v1M571.5 158v1M571.5 208v2M571.5 250v1M572.5 85v8M572.5 95v1M572.5 97v1M572.5 100v1M572.5 207v1M572.5 226v1M572.5 248v1M573.5 87v3M573.5 91v2M573.5 95v1M573.5 100v2M573.5 155v2M573.5 158v3M573.5 209v3M573.5 245v1M574.5 88v3M574.5 93v3M574.5 98v2M574.5 145v3M574.5 214v5M575.5 92v1M575.5 111v1M575.5 225v6M576.5 87v1M576.5 89v6M576.5 97v3M577.5 87v2M577.5 91v3M577.5 95v4M577.5 201v2M578.5 88v1M578.5 91v3M578.5 98v1M578.5 100v1M578.5 139v2M578.5 201v2M578.5 227v5M579.5 98v3M579.5 139v1M579.5 142v3M579.5 195v2M579.5 207v1M579.5 227v2M579.5 249v1M580.5 91v1M580.5 95v5M580.5 249v1M581.5 88v2M581.5 94v1M581.5 149v3M581.5 198v2M581.5 219v1M581.5 232v1M582.5 89v1M582.5 95v2M582.5 101v1M582.5 163v1M582.5 231v1M583.5 94v1M583.5 98v4M583.5 219v2M583.5 224v4M583.5 229v1M584.5 89v1M584.5 98v1M584.5 204v2M584.5 228v2M584.5 250v1M585.5 93v2M585.5 102v1M585.5 133v3M585.5 155v2M585.5 225v2M585.5 228v1M585.5 249v1M586.5 87v2M586.5 90v7M586.5 149v1M586.5 152v1M586.5 172v2M586.5 206v1M586.5 248v2M587.5 92v1M587.5 156v2M587.5 232v2M588.5 87v2M588.5 92v1M588.5 96v2M588.5 144v4M588.5 167v1M588.5 211v2M588.5 221v1M588.5 231v1M588.5 239v1M588.5 249v1M589.5 95v2M589.5 98v2M589.5 144v1M589.5 215v3M589.5 227v2M590.5 88v2M590.5 91v2M590.5 95v4M590.5 157v3M590.5 202v2M590.5 230v1M591.5 98v1M591.5 101v1M591.5 164v2M591.5 225v2M592.5 85v6M592.5 96v3M592.5 226v1M592.5 230v3M592.5 250v1M593.5 89v1M593.5 91v2M593.5 95v1M593.5 97v4M593.5 146v2M593.5 195v2M593.5 238v2M593.5 248v1M594.5 89v5M594.5 98v2M594.5 196v3M594.5 203v2M594.5 248v1M595.5 90v4M595.5 229v1M595.5 247v1M596.5 90v3M596.5 95v1M596.5 100v1M596.5 114v3M596.5 142v4M596.5 149v1M596.5 197v1M596.5 199v1M596.5 228v1M596.5 249v1M597.5 92v1M597.5 94v1M597.5 97v2M597.5 125v1M597.5 130v2M597.5 145v1M597.5 159v3M597.5 220v1M597.5 226v1M597.5 229v3M598.5 90v1M598.5 93v1M598.5 96v1M598.5 98v4M598.5 140v2M598.5 197v1M598.5 207v1M598.5 221v1M598.5 226v1M599.5 86v1M599.5 95v1M599.5 200v1M599.5 225v3M599.5 230v1M599.5 247v1M600.5 91v1M600.5 94v4M600.5 197v2M600.5 200v3M600.5 204v1M600.5 207v3M600.5 211v1M600.5 213v2M600.5 223v2M600.5 249v1M601.5 89v2M601.5 92v2M601.5 96v5M601.5 197v1M601.5 213v1M601.5 225v1M602.5 92v6M602.5 131v2M602.5 138v2M602.5 151v3M602.5 199v6M602.5 206v2M602.5 209v2M602.5 212v3M603.5 86v1M603.5 90v1M603.5 92v1M603.5 96v3M603.5 133v2M603.5 139v3M603.5 200v2M603.5 203v1M603.5 210v1M603.5 227v3M603.5 249v1M604.5 94v5M604.5 128v1M604.5 229v3M605.5 93v5M605.5 188v2M605.5 247v1M606.5 88v2M606.5 93v2M606.5 97v1M606.5 99v2M606.5 230v3M606.5 249v1M607.5 88v4M607.5 93v1M607.5 97v2M607.5 208v1M607.5 218v1M607.5 246v1M608.5 95v4M608.5 188v2M608.5 242v1M609.5 91v1M609.5 93v1M609.5 129v1M609.5 144v3M609.5 155v1M609.5 201v1M609.5 213v1M609.5 247v1M610.5 93v2M610.5 96v2M610.5 121v1M610.5 136v1M610.5 138v1M610.5 154v1M610.5 199v1M610.5 201v1M610.5 208v1M610.5 212v1M610.5 228v3M611.5 93v5M611.5 110v24M611.5 157v10M611.5 169v2M611.5 172v1M611.5 174v2M611.5 177v2M611.5 180v7M611.5 189v2M611.5 192v11M611.5 205v3M611.5 209v2M611.5 212v1M611.5 214v2M611.5 217v2M611.5 220v1M611.5 222v2M611.5 229v3M612.5 93v1M612.5 97v2M612.5 110v7M612.5 118v2M612.5 158v3M612.5 162v6M612.5 170v1M612.5 172v1M612.5 174v2M612.5 178v2M612.5 184v2M612.5 192v5M612.5 216v3M612.5 220v2M612.5 223v1M612.5 225v1M612.5 250v1M613.5 94v1M613.5 97v1M613.5 110v12M613.5 123v11M613.5 156v2M613.5 159v1M613.5 161v8M613.5 170v1M613.5 176v8M613.5 185v3M613.5 189v1M613.5 194v5M613.5 201v2M613.5 208v4M613.5 214v7M613.5 222v2M613.5 233v3M613.5 250v1M614.5 99v2M614.5 115v1M614.5 142v2M614.5 146v1M614.5 155v1M614.5 160v1M614.5 200v1M614.5 203v1M614.5 227v1M615.5 85v2M615.5 95v2M615.5 98v4M615.5 134v4M615.5 144v1M615.5 192v2M615.5 201v1M615.5 209v1M615.5 211v1M615.5 216v1M615.5 223v1M615.5 229v2M615.5 245v2M616.5 97v1M616.5 136v2M616.5 144v1M616.5 190v2M616.5 197v4M616.5 202v2M616.5 205v2M616.5 208v3M616.5 212v2M616.5 215v1M616.5 222v1M616.5 248v1M617.5 94v2M617.5 168v3M617.5 197v1M617.5 216v3M617.5 227v3M618.5 89v2M618.5 92v3M618.5 197v2M618.5 201v2M618.5 207v1M618.5 209v1M618.5 211v1M618.5 214v1M618.5 216v3M618.5 221v1M618.5 230v1M619.5 91v2M619.5 94v4M619.5 118v2M619.5 138v1M619.5 210v1M619.5 212v1M619.5 249v1M620.5 152v3M620.5 197v1M620.5 199v1M620.5 208v1M620.5 220v1M620.5 225v1M621.5 94v1M621.5 98v3M621.5 208v1M621.5 250v1M622.5 93v2M622.5 96v3M622.5 149v1M622.5 158v2M622.5 193v2M622.5 220v2M622.5 229v2M623.5 88v5M623.5 95v7M623.5 138v4M623.5 144v1M623.5 147v1M623.5 196v1M623.5 204v1M623.5 206v1M623.5 213v1M623.5 220v1M623.5 222v1M624.5 100v1M624.5 132v4M624.5 162v1M624.5 194v1M624.5 196v2M624.5 201v2M624.5 204v1M624.5 207v2M624.5 211v2M624.5 214v1M624.5 230v3M625.5 99v1M625.5 133v2M625.5 162v3M625.5 191v2M625.5 194v4M625.5 212v1M625.5 226v8M626.5 92v1M626.5 95v3M626.5 134v3M626.5 143v3M626.5 147v1M626.5 150v1M626.5 152v2M626.5 155v1M626.5 158v1M626.5 160v1M626.5 162v1M626.5 164v1M626.5 199v2M626.5 207v1M626.5 209v2M626.5 230v1M626.5 238v1M627.5 89v2M627.5 92v6M627.5 140v6M627.5 148v1M627.5 161v1M627.5 207v1M627.5 212v1M627.5 214v2M627.5 228v4M627.5 246v1M628.5 89v4M628.5 95v1M628.5 135v1M628.5 148v1M628.5 196v1M628.5 199v3M628.5 222v1M628.5 230v1M629.5 85v3M629.5 98v2M629.5 198v2M629.5 229v1M630.5 89v1M630.5 92v2M630.5 95v1M630.5 97v2M630.5 197v2M630.5 226v2M631.5 88v1M631.5 91v1M631.5 93v1M631.5 96v3M631.5 223v1M631.5 250v1M632.5 87v1M632.5 90v1M632.5 93v1M632.5 95v4M632.5 136v2M632.5 245v1M633.5 88v5M633.5 95v4M633.5 153v2M633.5 200v1M633.5 233v1M634.5 92v1M634.5 96v1M634.5 209v3M634.5 250v1M635.5 95v3M635.5 153v1M636.5 90v1M636.5 92v3M636.5 98v1M636.5 202v3M636.5 214v3M636.5 246v1M637.5 91v1M637.5 97v1M637.5 197v2M637.5 203v2M637.5 210v2M637.5 223v1M637.5 250v1M638.5 89v1M638.5 97v1M638.5 100v1M638.5 142v1M638.5 197v2M638.5 210v2M638.5 229v3M638.5 239v1M639.5 88v3M639.5 93v1M639.5 95v2M639.5 98v3M639.5 180v1M639.5 198v1M639.5 210v2M639.5 220v1M639.5 223v2M639.5 231v3M640.5 89v2M640.5 93v1M640.5 95v4M640.5 162v2M640.5 197v2M640.5 211v1M640.5 233v2M640.5 250v1M641.5 88v2M641.5 91v1M641.5 94v1M641.5 96v4M641.5 197v3M641.5 210v1M642.5 95v2M642.5 214v2M642.5 249v2M643.5 88v2M643.5 95v1M643.5 101v1M643.5 202v2M643.5 209v4M643.5 221v2M643.5 250v1M644.5 94v1M644.5 152v2M644.5 200v2M645.5 89v1M645.5 92v2M645.5 207v1M645.5 213v2M646.5 87v1M646.5 91v1M646.5 93v1M646.5 96v4M646.5 117v2M646.5 224v3M647.5 91v1M647.5 93v2M647.5 97v2M647.5 101v1M647.5 205v3M647.5 227v2M647.5 250v1M648.5 94v2M648.5 142v3M648.5 214v4M648.5 247v1M649.5 88v3M649.5 92v2M649.5 98v1M649.5 157v3M649.5 208v1M649.5 210v2M649.5 219v1M649.5 222v3M649.5 226v2M649.5 235v1M649.5 250v1M650.5 89v1M650.5 92v1M650.5 96v1M650.5 98v1M650.5 153v2M650.5 209v2M650.5 227v3M650.5 244v2M651.5 88v4M651.5 99v1M651.5 102v4M651.5 190v2M651.5 201v1M651.5 209v1M651.5 226v2M651.5 246v1M651.5 249v1M652.5 89v1M652.5 91v1M652.5 94v6M652.5 193v1M652.5 197v1M652.5 199v4M652.5 204v1M652.5 226v1M652.5 229v2M652.5 232v5M652.5 238v11M653.5 97v2M653.5 133v2M653.5 197v1M653.5 200v2M653.5 229v11M653.5 241v6M653.5 248v1M654.5 87v1M654.5 92v4M654.5 97v4M654.5 158v2M654.5 200v2M654.5 228v5M654.5 235v2M654.5 242v9M655.5 200v2M655.5 222v22M655.5 246v2M655.5 249v1M655.5 251v1M656.5 91v2M656.5 94v1M656.5 97v1M656.5 99v2M656.5 140v6M656.5 147v6M656.5 154v2M656.5 158v1M656.5 162v2M656.5 165v1M656.5 167v6M656.5 175v2M656.5 209v1M656.5 214v1M656.5 239v2M657.5 90v1M657.5 94v2M657.5 99v1M657.5 137v4M657.5 143v4M657.5 150v3M657.5 156v22M657.5 208v1M657.5 217v2M657.5 245v1M658.5 93v3M658.5 100v1M658.5 199v1M658.5 217v2M658.5 246v1M659.5 95v1M659.5 158v3M659.5 227v2M659.5 248v1M660.5 216v2M660.5 225v2M661.5 92v4M661.5 98v1M661.5 221v1M661.5 229v2M662.5 89v1M662.5 93v1M662.5 96v1M662.5 196v1M662.5 200v2M662.5 205v1M662.5 227v1M662.5 229v1M663.5 89v1M663.5 92v3M663.5 151v1M663.5 227v3M663.5 249v1M664.5 88v2M664.5 92v2M664.5 96v1M664.5 138v2M664.5 156v2M664.5 198v1M664.5 250v1M665.5 89v1M665.5 91v1M665.5 96v2M665.5 153v1M665.5 231v1M665.5 247v1M666.5 85v2M666.5 88v1M666.5 92v1M666.5 125v3M666.5 239v1M666.5 250v1M667.5 85v5M667.5 92v3M667.5 96v2M667.5 145v2M667.5 159v1M667.5 204v2M667.5 238v1M667.5 250v1M668.5 85v3M668.5 90v4M668.5 158v1M668.5 224v2M669.5 89v1M669.5 97v1M669.5 99v2M669.5 227v2M669.5 249v1M670.5 91v2M670.5 95v2M670.5 202v1M670.5 225v3M670.5 230v1M671.5 94v6M671.5 140v1M671.5 142v2M671.5 154v2M671.5 221v2M671.5 250v1M672.5 94v2M672.5 134v2M672.5 201v1M672.5 203v1M672.5 208v2M672.5 213v1M672.5 223v1M672.5 242v2M673.5 91v2M673.5 96v3M673.5 163v1M673.5 197v4M673.5 207v3M673.5 215v3M673.5 227v1M673.5 247v2M674.5 89v3M674.5 94v5M674.5 197v4M674.5 216v3M674.5 231v2M675.5 92v1M675.5 99v3M675.5 158v2M675.5 203v1M675.5 207v4M675.5 213v1M675.5 215v1M675.5 219v2M675.5 249v1M676.5 90v3M676.5 99v2M676.5 208v2M676.5 232v3M676.5 250v1M677.5 91v1M677.5 96v2M677.5 99v1M677.5 137v3M677.5 207v1M677.5 228v4M678.5 92v3M678.5 99v1M678.5 162v3M678.5 220v1M678.5 229v2M678.5 250v1M679.5 89v2M679.5 95v2M679.5 229v2M679.5 239v1M680.5 98v1M680.5 131v7M680.5 139v5M680.5 145v2M680.5 148v6M680.5 215v1M680.5 227v2M681.5 96v2M681.5 130v1M681.5 132v2M681.5 148v1M681.5 217v4M681.5 226v1M681.5 228v2M681.5 248v1M682.5 88v3M682.5 97v2M682.5 131v4M682.5 137v3M682.5 141v1M682.5 143v1M682.5 145v3M682.5 150v1M682.5 152v1M682.5 181v2M682.5 246v2M683.5 90v2M683.5 98v2M683.5 153v2M683.5 203v1M684.5 91v1M684.5 96v1M684.5 151v1M684.5 204v3M684.5 213v1M684.5 231v2M685.5 92v1M685.5 98v1M685.5 101v1M685.5 135v2M685.5 203v1M685.5 250v1M686.5 89v3M686.5 94v2M686.5 189v2M686.5 250v1M687.5 90v5M687.5 98v1M687.5 142v1M687.5 211v3M687.5 250v1M688.5 90v1M688.5 95v1M688.5 98v1M688.5 210v2M688.5 223v3M689.5 87v3M689.5 91v2M689.5 100v2M689.5 139v1M689.5 224v1M689.5 228v1M689.5 249v1M690.5 86v2M690.5 89v2M690.5 94v1M690.5 97v3M690.5 146v2M690.5 206v2M690.5 247v1M691.5 86v1M691.5 88v7M691.5 99v2M691.5 207v3M691.5 214v1M691.5 228v2M692.5 86v1M692.5 91v2M692.5 96v4M692.5 228v1M692.5 231v1M693.5 89v1M693.5 95v2M693.5 98v2M693.5 196v3M693.5 228v2M693.5 249v1M694.5 89v1M694.5 91v3M694.5 99v3M694.5 203v1M695.5 91v1M695.5 93v2M695.5 98v1M695.5 168v1M695.5 197v2M695.5 208v4M695.5 230v1M696.5 87v3M696.5 93v1M696.5 95v2M696.5 108v1M696.5 135v1M696.5 228v3M697.5 89v1M697.5 92v1M697.5 98v4M697.5 129v2M697.5 179v3M697.5 228v2M698.5 93v1M698.5 98v1M698.5 249v1M699.5 88v1M699.5 96v1M699.5 195v1M699.5 226v1M699.5 229v3M699.5 249v1M700.5 91v1M700.5 95v3M700.5 139v1M700.5 248v1M701.5 89v4M701.5 95v3M701.5 99v2M701.5 153v2M701.5 199v1M701.5 219v1M701.5 221v3M702.5 90v1M702.5 97v2M702.5 212v2M702.5 216v3M702.5 223v2M703.5 89v1M703.5 95v5M703.5 136v2M703.5 183v2M703.5 228v1M704.5 88v2M704.5 93v1M704.5 220v3M704.5 234v1M704.5 247v1M705.5 93v3M705.5 182v1M705.5 218v2M705.5 249v1M706.5 93v1M706.5 102v1M706.5 107v3M706.5 140v1M706.5 201v4M706.5 213v1M707.5 94v1M707.5 197v2M707.5 210v1M707.5 249v1M708.5 90v2M708.5 94v1M708.5 97v2M708.5 221v3M709.5 93v3M709.5 97v3M709.5 234v3M710.5 97v2M710.5 198v4M710.5 220v4M710.5 241v2M711.5 88v2M711.5 97v3M711.5 197v1M711.5 229v1M711.5 250v1M712.5 87v2M712.5 92v2M712.5 100v2M712.5 145v1M712.5 206v2M712.5 221v3M712.5 227v2M713.5 85v1M713.5 95v1M713.5 97v2M713.5 101v1M713.5 139v1M713.5 194v2M713.5 230v2M714.5 88v2M714.5 94v2M714.5 132v3M714.5 160v1M714.5 225v1M714.5 227v2M714.5 250v1M715.5 90v2M715.5 97v2M715.5 129v2M715.5 198v1M715.5 236v1M716.5 93v3M716.5 98v1M716.5 191v1M716.5 202v4M716.5 227v1M716.5 237v1M717.5 88v1M717.5 93v1M717.5 96v2M717.5 187v1M717.5 219v1M717.5 225v3M718.5 89v1M718.5 92v1M718.5 94v1M718.5 96v1M718.5 137v3M718.5 148v3M718.5 195v2M718.5 209v1M718.5 225v2M718.5 228v3M718.5 250v1M719.5 95v3M719.5 139v2M719.5 143v1M719.5 148v2M719.5 249v1M720.5 90v2M720.5 94v1M720.5 96v1M720.5 216v1M720.5 218v4M720.5 229v2M720.5 249v1M721.5 96v3M721.5 135v1M721.5 138v4M721.5 143v1M721.5 145v1M721.5 151v1M721.5 153v1M721.5 155v4M721.5 160v1M721.5 221v3M721.5 248v1M722.5 87v1M722.5 91v2M722.5 97v1M722.5 136v1M722.5 159v2M722.5 231v1M722.5 250v1M723.5 88v1M723.5 90v1M723.5 92v3M723.5 137v2M723.5 140v5M723.5 147v4M723.5 153v3M723.5 157v1M723.5 160v1M723.5 192v2M723.5 227v2M723.5 245v1M724.5 92v3M724.5 96v2M724.5 141v1M724.5 145v1M724.5 152v1M724.5 157v1M724.5 159v1M724.5 248v1M725.5 84v1M725.5 88v1M725.5 90v2M725.5 95v2M725.5 98v2M725.5 228v3M726.5 88v1M726.5 91v4M726.5 117v2M726.5 134v2M726.5 154v1M726.5 193v2M726.5 228v4M727.5 92v9M727.5 130v1M727.5 176v3M727.5 230v2M728.5 89v4M728.5 94v1M728.5 154v1M728.5 196v3M728.5 200v1M728.5 202v1M728.5 213v1M728.5 229v4M728.5 248v1M729.5 88v2M729.5 91v1M729.5 98v2M729.5 223v1M729.5 250v1M730.5 96v1M730.5 156v1M730.5 206v2M730.5 250v1M731.5 89v2M731.5 93v1M731.5 148v2M731.5 205v2M731.5 219v1M731.5 228v2M731.5 250v1M732.5 90v1M732.5 94v1M732.5 99v3M732.5 158v1M732.5 198v2M732.5 201v1M732.5 203v2M732.5 206v3M732.5 210v1M732.5 212v2M732.5 228v3M732.5 250v1M733.5 89v2M733.5 98v1M733.5 107v3M733.5 196v3M733.5 213v1M733.5 250v1M734.5 86v1M734.5 90v1M734.5 97v2M734.5 197v1M734.5 199v7M734.5 207v5M734.5 214v1M734.5 221v1M734.5 231v1M735.5 87v4M735.5 203v2M735.5 209v1M735.5 228v4M736.5 91v1M736.5 99v1M736.5 207v2M736.5 216v3M736.5 227v1M737.5 86v5M737.5 94v2M737.5 98v1M737.5 156v2M737.5 211v2M737.5 227v2M737.5 248v1M738.5 89v1M738.5 91v2M738.5 97v1M738.5 151v3M738.5 228v2M738.5 236v1M738.5 246v1M739.5 95v1M739.5 135v1M739.5 145v1M739.5 150v2M739.5 200v1M739.5 208v1M739.5 220v2M739.5 230v2M739.5 250v1M740.5 91v1M740.5 96v1M740.5 132v2M740.5 137v1M740.5 139v4M740.5 145v1M740.5 200v1M740.5 204v2M740.5 209v1M740.5 218v2M740.5 226v4M740.5 249v1M741.5 92v4M741.5 127v4M741.5 158v1M741.5 160v1M741.5 196v4M741.5 212v1M741.5 214v1M741.5 250v1M742.5 92v1M742.5 128v3M742.5 157v4M742.5 189v1M742.5 196v5M742.5 206v2M742.5 212v1M742.5 214v1M742.5 229v2M742.5 248v1M743.5 93v3M743.5 138v1M743.5 147v1M743.5 151v1M743.5 155v2M743.5 200v1M743.5 212v1M743.5 238v1M743.5 249v1M744.5 93v1M744.5 96v3M744.5 111v1M744.5 140v1M744.5 145v1M744.5 155v1M744.5 201v1M744.5 208v1M744.5 211v2M744.5 223v1M744.5 228v1M744.5 247v1M745.5 92v1M745.5 156v1M745.5 161v3M745.5 175v3M745.5 193v1M745.5 197v1M745.5 199v1M745.5 201v1M745.5 210v2M745.5 213v1M745.5 225v2M745.5 228v3M746.5 89v2M746.5 94v2M746.5 99v2M746.5 158v2M746.5 196v2M746.5 200v1M746.5 207v2M746.5 212v4M746.5 217v1M747.5 95v3M747.5 99v1M747.5 196v1M747.5 198v1M747.5 216v3M747.5 226v3M747.5 233v2M747.5 249v1M748.5 89v2M748.5 92v2M748.5 143v2M748.5 201v1M748.5 203v1M748.5 205v1M748.5 210v1M748.5 213v1M748.5 216v3M749.5 97v1M749.5 101v1M749.5 200v1M749.5 206v5M749.5 213v1M749.5 223v1M749.5 228v2M749.5 250v1M750.5 92v2M750.5 96v2M750.5 188v1M750.5 201v1M750.5 206v1M750.5 225v2M750.5 231v2M751.5 88v1M751.5 93v2M751.5 98v1M751.5 162v2M751.5 196v1M751.5 227v3M752.5 94v4M752.5 99v1M752.5 249v1M753.5 90v1M753.5 99v1M753.5 226v1M754.5 88v2M754.5 92v1M754.5 94v1M754.5 154v2M754.5 194v1M754.5 205v2M754.5 228v4M755.5 88v3M755.5 94v1M755.5 250v1M756.5 88v4M756.5 139v2M756.5 153v2M756.5 220v1M756.5 225v4M756.5 248v1M757.5 98v1M757.5 215v1M757.5 222v2M758.5 88v1M758.5 94v1M758.5 140v1M758.5 154v1M758.5 202v2M758.5 205v1M758.5 240v2M758.5 247v1M759.5 84v3M759.5 91v3M759.5 96v2M759.5 175v2M759.5 189v1M759.5 220v2M760.5 90v2M760.5 98v1M760.5 147v2M760.5 202v1M760.5 211v1M760.5 244v2M761.5 87v4M761.5 99v1M761.5 135v1M761.5 137v6M761.5 147v5M761.5 229v2M761.5 248v1M762.5 85v6M762.5 95v3M762.5 135v1M762.5 137v2M762.5 144v2M762.5 150v4M762.5 155v1M762.5 203v3M762.5 213v1M762.5 215v2M762.5 248v1M763.5 87v3M763.5 91v3M763.5 95v1M763.5 199v2M763.5 223v1M763.5 228v1M763.5 230v3M763.5 250v1M764.5 91v2M764.5 94v1M764.5 160v2M764.5 177v1M764.5 198v1M764.5 226v4M765.5 93v3M765.5 131v2M765.5 158v1M765.5 162v1M765.5 234v2M766.5 90v1M766.5 95v1M766.5 97v3M766.5 159v1M766.5 162v1M766.5 178v1M766.5 213v2M766.5 227v1M767.5 87v1M767.5 140v3M767.5 148v1M767.5 157v2M767.5 169v1M768.5 87v2M768.5 94v2M768.5 128v1M768.5 138v4M768.5 169v4M768.5 195v2M768.5 228v3M769.5 87v2M769.5 91v2M769.5 119v2M769.5 138v1M769.5 140v4M769.5 157v14M769.5 172v1M769.5 174v1M769.5 197v3M769.5 227v2M769.5 250v1M770.5 87v3M770.5 95v1M770.5 100v1M770.5 139v2M770.5 144v1M770.5 203v1M770.5 206v2M770.5 220v3M770.5 226v2M770.5 231v2M770.5 250v1M771.5 87v1M771.5 90v1M771.5 92v1M771.5 95v2M771.5 98v2M771.5 108v2M771.5 139v1M771.5 141v1M771.5 152v4M771.5 200v1M771.5 208v1M771.5 222v2M771.5 241v2M772.5 88v2M772.5 91v2M772.5 94v3M772.5 143v1M772.5 202v1M772.5 204v1M772.5 206v1M772.5 218v2M772.5 221v1M773.5 91v1M773.5 93v3M773.5 160v3M773.5 196v1M773.5 199v1M773.5 212v1M773.5 221v3M773.5 225v1M773.5 249v1M774.5 89v1M774.5 91v2M774.5 198v1M774.5 212v3M774.5 224v1M775.5 94v2M775.5 97v3M775.5 154v1M775.5 207v1M775.5 210v1M775.5 212v2M775.5 216v3M775.5 227v2M775.5 246v1M776.5 91v2M776.5 97v3M776.5 142v1M776.5 145v1M776.5 147v1M776.5 150v2M776.5 155v1M776.5 159v3M776.5 206v1M776.5 209v1M776.5 227v1M776.5 249v1M777.5 92v2M777.5 98v5M777.5 138v1M777.5 140v3M777.5 150v2M777.5 156v8M777.5 193v1M777.5 195v2M777.5 212v1M777.5 250v1M778.5 92v4M778.5 150v1M778.5 213v2M778.5 222v1M778.5 250v1M779.5 94v2M779.5 215v2M779.5 248v1M780.5 92v1M780.5 94v2M780.5 98v2M780.5 116v2M780.5 140v1M780.5 208v1M780.5 215v1M781.5 89v1M781.5 92v3M781.5 99v2M781.5 136v2M781.5 217v1M781.5 228v1M781.5 250v1M782.5 90v2M782.5 93v1M782.5 161v2M782.5 193v1M782.5 214v2M782.5 221v2M782.5 226v1M783.5 92v3M783.5 206v2M783.5 223v2M783.5 249v1M784.5 90v1M784.5 94v1M784.5 97v2M784.5 148v1M784.5 226v2M784.5 245v2M784.5 250v1M785.5 87v1M785.5 90v5M785.5 97v1M785.5 207v2M785.5 227v2M785.5 230v1M785.5 250v1M786.5 91v2M786.5 94v2M786.5 99v1M786.5 147v2M786.5 158v3M786.5 211v1M786.5 227v3M786.5 247v1M787.5 89v1M787.5 93v3M787.5 98v1M787.5 150v2M787.5 244v1M788.5 93v5M788.5 156v1M788.5 198v3M788.5 227v2M788.5 246v1M789.5 87v4M789.5 94v2M789.5 98v4M789.5 228v1M790.5 87v3M790.5 91v2M790.5 133v1M790.5 245v2M791.5 88v2M791.5 95v2M791.5 136v1M791.5 142v2M791.5 145v1M791.5 147v5M791.5 153v1M791.5 157v1M791.5 163v2M791.5 222v3M791.5 228v2M792.5 92v2M792.5 97v1M792.5 122v2M792.5 142v2M792.5 148v5M792.5 155v1M792.5 157v5M792.5 164v1M792.5 178v2M792.5 186v2M792.5 195v1M792.5 231v1M793.5 93v3M793.5 98v2M793.5 140v2M793.5 144v6M793.5 151v1M793.5 153v1M793.5 155v3M793.5 159v1M793.5 161v1M793.5 164v1M793.5 227v1M793.5 230v1M794.5 91v3M794.5 96v2M794.5 206v1M794.5 222v3M795.5 87v1M795.5 94v2M795.5 97v1M795.5 198v2M795.5 204v1M795.5 210v2M795.5 227v1M796.5 88v1M796.5 90v2M796.5 93v2M796.5 219v3M796.5 228v2M796.5 250v1M797.5 87v1M797.5 95v1M797.5 202v2M797.5 208v1M797.5 219v2M797.5 231v1M797.5 247v1M798.5 90v2M798.5 99v2M798.5 143v2M798.5 209v2M798.5 223v5M798.5 243v2M799.5 89v1M799.5 95v2M799.5 164v1M799.5 224v3M799.5 229v1M799.5 248v1M800.5 91v2M800.5 95v3M800.5 249v1M801.5 93v3M801.5 146v1M801.5 249v1M802.5 92v2M802.5 97v2M802.5 195v2M802.5 202v1M802.5 249v1M803.5 87v2M803.5 97v2M803.5 100v1M803.5 222v4M804.5 90v1M804.5 95v3M804.5 195v1M804.5 227v2M804.5 237v1M805.5 90v2M805.5 94v2M805.5 97v3M806.5 90v3M806.5 94v1M806.5 116v3M806.5 178v1M806.5 198v2M806.5 228v1M806.5 243v1M806.5 246v1M807.5 88v1M807.5 95v1M807.5 97v4M807.5 249v1M808.5 86v1M808.5 89v2M808.5 92v2M808.5 152v3M808.5 227v2M808.5 230v3M808.5 247v1M809.5 94v2M809.5 216v1M809.5 222v1M809.5 249v1M810.5 92v1M810.5 96v3M810.5 226v3M811.5 88v1M811.5 93v2M811.5 97v2M811.5 156v1M811.5 163v3M811.5 182v2M811.5 201v2M811.5 231v4M811.5 248v1M812.5 87v1M812.5 92v3M812.5 141v1M812.5 227v1M812.5 250v1M813.5 89v6M813.5 215v4M813.5 226v3M813.5 230v1M813.5 250v1M814.5 96v2M814.5 204v1M814.5 207v4M814.5 248v1M815.5 87v1M815.5 90v1M815.5 93v1M815.5 95v3M815.5 175v1M815.5 201v1M815.5 225v1M815.5 228v3M815.5 251v1M816.5 86v1M816.5 88v1M816.5 91v1M816.5 95v1M816.5 98v2M816.5 142v3M816.5 160v2M816.5 197v2M816.5 200v1M816.5 202v6M816.5 209v3M816.5 246v1M817.5 91v2M817.5 96v2M817.5 135v1M817.5 151v2M817.5 198v1M817.5 210v1M817.5 230v2M818.5 88v3M818.5 98v1M818.5 160v2M818.5 198v3M818.5 202v3M818.5 207v5M818.5 247v1M819.5 91v1M819.5 95v1M819.5 98v2M819.5 137v2M819.5 203v1M819.5 227v1M819.5 250v1M820.5 92v2M820.5 96v1M820.5 210v1M820.5 248v1M821.5 92v1M821.5 97v3M821.5 229v3M821.5 238v1M821.5 246v1M822.5 98v1M822.5 150v2M822.5 207v3M822.5 230v2M823.5 91v2M823.5 94v1M823.5 96v5M823.5 200v1M823.5 216v1M823.5 229v3M824.5 88v1M824.5 90v1M824.5 98v2M824.5 154v1M824.5 209v1M824.5 222v2M824.5 225v1M824.5 231v1M825.5 90v4M825.5 95v1M825.5 116v2M825.5 179v4M825.5 206v3M825.5 250v1M826.5 89v3M826.5 93v1M826.5 98v1M826.5 135v2M826.5 226v2M826.5 249v1M827.5 86v2M827.5 90v1M827.5 95v2M827.5 99v2M827.5 195v2M827.5 226v2M828.5 87v1M828.5 91v1M828.5 94v3M828.5 206v3M828.5 248v1M829.5 87v7M829.5 99v1M829.5 179v3M829.5 227v2M829.5 246v1M830.5 88v5M830.5 230v2M830.5 248v1M831.5 90v5M831.5 97v1M831.5 100v2M831.5 113v1M831.5 203v3M831.5 214v2M831.5 223v1M831.5 248v1M832.5 93v4M832.5 101v2M832.5 147v1M832.5 199v1M832.5 205v1M832.5 218v1M832.5 224v5M832.5 249v1M833.5 90v1M833.5 94v3M833.5 142v1M833.5 154v1M833.5 204v1M833.5 206v1M833.5 208v3M833.5 224v2M833.5 229v1M834.5 94v3M834.5 98v1M834.5 132v1M834.5 137v2M834.5 141v2M834.5 151v1M834.5 155v1M834.5 200v1M834.5 211v1M835.5 93v4M835.5 99v2M835.5 110v4M835.5 115v3M835.5 155v6M835.5 163v1M835.5 165v10M835.5 176v2M835.5 179v2M835.5 183v2M835.5 187v1M835.5 189v3M835.5 193v3M835.5 217v2M835.5 220v1M835.5 222v3M836.5 96v2M836.5 110v8M836.5 157v2M836.5 160v3M836.5 165v4M836.5 170v1M836.5 172v2M836.5 175v6M836.5 182v1M836.5 186v10M836.5 217v2M836.5 220v2M836.5 229v3M837.5 87v4M837.5 97v3M837.5 110v3M837.5 114v1M837.5 116v7M837.5 126v1M837.5 129v3M837.5 133v7M837.5 151v3M837.5 155v4M837.5 160v1M837.5 194v1M837.5 197v2M837.5 202v4M837.5 208v1M837.5 214v5M837.5 232v1M837.5 249v1M838.5 88v3M838.5 93v1M838.5 97v1M838.5 99v1M838.5 118v1M838.5 126v1M838.5 145v1M838.5 209v3M838.5 214v1M838.5 242v1M839.5 90v1M839.5 153v1M839.5 203v2M839.5 236v2M839.5 247v1M840.5 92v1M840.5 95v1M840.5 202v2M840.5 207v2M840.5 227v1M841.5 86v2M841.5 89v3M841.5 94v3M841.5 98v1M841.5 195v3M841.5 200v5M841.5 209v1M841.5 212v1M841.5 214v2M841.5 218v1M841.5 228v1M841.5 239v1M841.5 250v1M842.5 93v4M842.5 155v2M842.5 161v2M842.5 194v3M842.5 216v2M843.5 86v1M843.5 89v4M843.5 108v2M843.5 138v1M843.5 190v1M843.5 194v3M843.5 216v3M843.5 247v1M844.5 91v2M844.5 97v2M844.5 144v1M844.5 199v3M844.5 203v1M844.5 207v1M844.5 212v1M844.5 228v2M844.5 245v1M845.5 89v1M845.5 138v2M845.5 163v1M845.5 172v1M845.5 199v1M845.5 212v1M845.5 218v4M846.5 88v2M846.5 92v1M846.5 196v2M846.5 228v3M846.5 250v1M847.5 93v3M847.5 98v1M847.5 205v3M847.5 222v1M847.5 229v1M847.5 251v1M848.5 96v1M848.5 173v2M848.5 222v1M848.5 230v4M848.5 249v1M849.5 91v7M849.5 99v2M849.5 133v3M849.5 138v1M849.5 141v1M849.5 143v11M849.5 156v1M849.5 158v5M849.5 165v1M849.5 169v1M849.5 173v4M849.5 178v2M849.5 181v1M849.5 227v3M849.5 232v1M849.5 248v1M850.5 92v1M850.5 95v1M850.5 110v2M850.5 137v1M850.5 139v1M850.5 142v2M850.5 148v5M850.5 156v8M850.5 165v13M850.5 180v2M850.5 196v3M850.5 211v2M850.5 229v4M850.5 236v1M850.5 242v2M851.5 95v2M851.5 113v1M851.5 137v14M851.5 152v1M851.5 157v5M851.5 163v7M851.5 171v5M851.5 177v2M851.5 180v2M851.5 214v1M851.5 225v7M851.5 246v1M852.5 89v4M852.5 97v2M852.5 100v1M852.5 144v2M852.5 162v1M852.5 201v2M852.5 204v1M852.5 222v3M852.5 247v1M853.5 85v4M853.5 90v3M853.5 102v3M853.5 148v1M853.5 201v2M853.5 211v2M853.5 218v3M853.5 227v3M853.5 241v1M854.5 86v1M854.5 93v2M854.5 98v2M854.5 194v2M854.5 213v1M854.5 221v1M854.5 223v1M854.5 226v2M854.5 230v1M854.5 232v1M854.5 236v1M854.5 241v1M854.5 244v1M854.5 250v1M855.5 89v2M855.5 98v1M855.5 107v1M855.5 142v4M855.5 201v1M855.5 207v1M855.5 235v6M855.5 245v5M856.5 89v4M856.5 207v4M856.5 248v4M857.5 89v2M857.5 92v2M857.5 98v2M857.5 197v2M857.5 200v1M857.5 205v1M857.5 208v3M857.5 226v2M857.5 244v2M857.5 247v2M857.5 250v1"/><path stroke="#0028d2" d="M2.5 96v5M2.5 102v3M2.5 219v5M2.5 250v1M3.5 98v8M3.5 109v3M3.5 135v1M3.5 160v1M3.5 176v2M3.5 213v4M3.5 218v4M3.5 229v1M3.5 245v1M4.5 115v1M4.5 123v1M4.5 138v1M4.5 148v1M4.5 159v1M4.5 182v1M4.5 186v1M4.5 189v1M4.5 221v1M4.5 249v1M5.5 251v1M6.5 139v1M6.5 226v1M9.5 251v1M10.5 250v1M11.5 89v1M11.5 91v1M11.5 251v1M12.5 99v1M12.5 196v2M12.5 251v1M13.5 215v1M13.5 218v2M13.5 249v2M14.5 251v1M15.5 90v1M15.5 188v1M15.5 249v1M17.5 209v2M17.5 251v1M18.5 227v2M18.5 246v1M19.5 202v1M19.5 247v2M20.5 250v1M21.5 249v2M22.5 226v1M22.5 249v1M23.5 92v1M23.5 250v1M25.5 220v1M25.5 251v1M26.5 250v1M27.5 204v2M27.5 251v1M28.5 226v2M28.5 247v2M29.5 138v2M29.5 142v9M29.5 247v2M30.5 250v1M31.5 146v2M31.5 209v1M31.5 250v1M32.5 96v1M32.5 227v1M32.5 249v1M33.5 210v2M34.5 249v2M35.5 249v1M36.5 249v1M37.5 251v1M38.5 244v2M39.5 248v2M40.5 218v1M40.5 251v1M41.5 248v1M42.5 124v1M42.5 142v1M42.5 214v1M42.5 251v1M43.5 139v1M43.5 191v1M43.5 201v2M43.5 251v1M44.5 131v5M44.5 137v3M44.5 154v8M44.5 166v1M44.5 170v3M44.5 175v2M44.5 181v6M44.5 190v8M44.5 215v1M45.5 125v8M45.5 156v1M45.5 161v8M45.5 170v19M45.5 190v3M45.5 216v4M45.5 249v1M46.5 130v9M46.5 154v6M46.5 162v4M46.5 173v2M46.5 182v1M46.5 189v7M46.5 212v6M46.5 248v1M47.5 134v1M47.5 139v1M47.5 144v2M47.5 151v1M47.5 157v1M47.5 166v1M47.5 168v1M47.5 201v2M47.5 208v1M47.5 230v2M47.5 243v2M48.5 165v1M48.5 211v1M48.5 248v1M49.5 100v1M49.5 251v1M50.5 196v2M50.5 224v1M50.5 249v1M51.5 196v2M51.5 224v2M51.5 251v1M52.5 199v1M52.5 203v1M52.5 210v1M52.5 251v1M53.5 199v1M53.5 216v1M54.5 98v1M54.5 217v2M55.5 250v1M56.5 214v1M56.5 246v1M57.5 89v1M57.5 212v1M57.5 248v1M58.5 92v1M58.5 251v1M59.5 94v1M60.5 138v1M60.5 156v1M60.5 250v1M61.5 249v2M62.5 205v2M62.5 251v1M63.5 206v2M63.5 250v1M64.5 201v1M64.5 251v1M65.5 225v1M66.5 247v1M67.5 250v1M68.5 100v1M68.5 249v1M69.5 250v1M72.5 222v2M72.5 247v1M73.5 93v1M73.5 250v1M75.5 251v1M76.5 99v1M76.5 248v2M77.5 201v3M77.5 250v1M79.5 199v2M79.5 229v2M80.5 251v1M81.5 227v2M81.5 251v1M82.5 249v1M86.5 251v1M87.5 245v2M89.5 249v1M90.5 251v1M91.5 142v2M91.5 191v3M91.5 251v1M92.5 209v1M92.5 248v2M93.5 203v1M93.5 205v2M93.5 215v2M93.5 218v1M93.5 247v2M94.5 202v13M94.5 217v3M95.5 250v1M97.5 247v2M98.5 91v1M98.5 150v1M98.5 198v2M99.5 250v1M100.5 145v1M100.5 150v1M100.5 198v2M100.5 212v1M101.5 135v1M101.5 144v1M101.5 157v1M101.5 205v1M101.5 251v1M102.5 137v8M102.5 147v12M102.5 160v1M102.5 162v1M102.5 199v16M102.5 251v1M103.5 134v3M103.5 140v1M103.5 154v5M103.5 198v3M103.5 215v1M103.5 251v1M104.5 142v1M104.5 146v1M104.5 154v1M104.5 159v1M104.5 207v1M104.5 211v1M105.5 136v1M105.5 222v3M105.5 251v1M106.5 87v1M106.5 216v1M107.5 206v1M107.5 216v1M107.5 250v2M108.5 142v2M108.5 199v5M108.5 212v1M108.5 215v2M108.5 218v2M108.5 251v1M109.5 210v1M109.5 226v2M109.5 250v1M111.5 246v1M112.5 88v1M113.5 225v1M113.5 249v1M114.5 249v1M115.5 92v1M115.5 251v1M116.5 249v1M117.5 248v1M119.5 196v1M119.5 250v1M120.5 217v2M120.5 250v1M121.5 193v2M121.5 196v2M121.5 207v1M121.5 251v1M122.5 94v1M122.5 250v1M124.5 251v1M125.5 250v1M126.5 248v1M127.5 213v1M127.5 250v2M128.5 248v2M129.5 229v2M129.5 251v1M131.5 226v2M131.5 250v1M133.5 215v1M135.5 228v2M136.5 201v1M136.5 209v2M136.5 250v1M137.5 200v1M137.5 206v1M137.5 212v1M138.5 197v2M138.5 251v1M139.5 198v3M139.5 211v5M139.5 251v1M140.5 193v2M140.5 209v1M140.5 213v1M140.5 245v1M141.5 150v2M141.5 201v1M141.5 248v1M142.5 204v1M142.5 250v1M143.5 203v1M143.5 249v1M144.5 199v2M144.5 207v1M144.5 211v2M144.5 214v2M144.5 248v1M145.5 209v1M145.5 230v1M145.5 250v1M146.5 248v2M147.5 190v2M147.5 208v1M147.5 251v1M148.5 250v1M149.5 225v2M151.5 162v1M151.5 224v2M151.5 251v1M152.5 250v2M153.5 225v2M153.5 251v1M154.5 98v1M154.5 148v2M155.5 250v1M156.5 154v1M156.5 249v1M157.5 160v2M157.5 200v1M157.5 202v2M157.5 210v1M157.5 249v1M158.5 225v1M159.5 198v1M159.5 202v3M159.5 211v1M159.5 251v1M160.5 199v1M160.5 201v4M160.5 210v2M160.5 251v1M161.5 198v3M161.5 202v1M161.5 211v1M161.5 250v1M162.5 202v1M162.5 251v1M163.5 251v1M164.5 222v3M164.5 249v1M165.5 204v1M166.5 201v2M166.5 251v1M167.5 205v1M167.5 251v1M168.5 204v3M168.5 210v2M168.5 250v1M169.5 205v1M169.5 208v2M169.5 214v1M169.5 216v1M169.5 250v1M170.5 205v1M170.5 251v1M171.5 200v2M171.5 224v2M172.5 200v2M172.5 250v1M173.5 250v1M174.5 246v2M175.5 228v2M175.5 250v1M176.5 220v2M177.5 210v1M177.5 249v1M178.5 249v1M179.5 99v1M179.5 214v1M180.5 198v1M180.5 200v3M180.5 209v2M180.5 214v6M180.5 251v1M181.5 251v1M182.5 249v1M183.5 94v1M183.5 206v1M183.5 208v1M183.5 250v1M184.5 127v1M184.5 145v1M184.5 149v1M184.5 205v1M184.5 250v1M185.5 115v1M185.5 136v1M185.5 152v1M185.5 213v1M185.5 251v1M186.5 97v1M186.5 110v1M186.5 112v2M186.5 120v1M186.5 130v2M186.5 133v5M186.5 146v4M186.5 151v1M186.5 197v3M186.5 217v2M186.5 248v1M187.5 108v8M187.5 118v15M187.5 134v1M187.5 148v3M187.5 196v2M187.5 218v2M187.5 248v2M188.5 103v1M188.5 134v1M188.5 145v1M188.5 199v1M188.5 214v2M188.5 251v1M189.5 206v1M189.5 251v1M190.5 212v1M190.5 251v1M191.5 137v2M191.5 141v1M191.5 213v1M191.5 217v1M191.5 251v1M192.5 196v2M192.5 221v1M192.5 251v1M193.5 192v2M193.5 196v1M193.5 221v1M194.5 194v2M194.5 198v2M194.5 224v2M194.5 250v1M195.5 203v1M195.5 250v1M197.5 224v2M197.5 250v1M198.5 251v1M200.5 248v2M201.5 249v1M202.5 248v1M203.5 250v1M204.5 250v1M205.5 199v2M205.5 251v1M206.5 249v2M207.5 250v1M208.5 250v1M209.5 249v2M211.5 199v1M211.5 203v1M211.5 214v1M211.5 250v1M212.5 194v2M212.5 197v6M212.5 204v5M212.5 248v1M213.5 197v9M213.5 207v2M213.5 210v1M213.5 250v1M214.5 184v1M214.5 202v2M214.5 207v1M214.5 251v1M215.5 204v1M215.5 251v1M216.5 199v1M216.5 250v1M217.5 250v1M218.5 198v4M218.5 207v2M218.5 214v6M219.5 198v1M219.5 201v2M219.5 207v3M219.5 211v8M220.5 196v2M220.5 208v1M220.5 222v1M220.5 251v1M221.5 88v1M221.5 138v1M221.5 200v1M221.5 216v1M221.5 251v1M222.5 228v2M222.5 251v1M223.5 216v1M223.5 218v2M223.5 246v2M224.5 250v1M225.5 212v1M225.5 218v1M225.5 225v2M225.5 249v1M227.5 204v1M227.5 225v2M227.5 244v1M227.5 246v1M228.5 93v1M228.5 200v1M228.5 215v1M229.5 191v1M229.5 194v1M229.5 200v1M229.5 202v1M229.5 206v1M229.5 213v1M229.5 251v1M230.5 139v5M230.5 146v2M230.5 150v2M230.5 192v2M230.5 216v1M230.5 223v2M231.5 195v1M231.5 197v1M231.5 250v1M232.5 160v2M232.5 196v1M232.5 208v1M232.5 213v1M232.5 216v2M232.5 250v1M233.5 196v2M233.5 250v1M234.5 225v3M234.5 251v1M235.5 249v1M236.5 89v1M236.5 249v1M237.5 251v1M238.5 217v2M238.5 251v1M240.5 226v2M240.5 250v1M241.5 198v2M241.5 210v2M241.5 250v1M242.5 92v1M242.5 122v1M242.5 131v1M242.5 250v1M243.5 101v1M243.5 142v1M243.5 205v2M243.5 251v1M244.5 91v1M244.5 94v1M244.5 135v1M244.5 139v4M244.5 192v1M244.5 195v4M244.5 201v1M244.5 203v3M244.5 209v6M245.5 87v1M245.5 96v3M245.5 100v1M245.5 102v13M245.5 117v8M245.5 127v3M245.5 132v1M245.5 148v3M245.5 192v2M245.5 215v3M245.5 250v1M246.5 94v1M246.5 107v1M246.5 126v1M246.5 133v1M246.5 135v1M246.5 140v5M246.5 147v1M246.5 191v1M246.5 197v17M247.5 150v1M247.5 212v1M247.5 251v1M248.5 195v1M248.5 203v1M248.5 207v1M248.5 212v1M248.5 220v1M248.5 222v2M248.5 247v1M249.5 93v1M249.5 193v2M249.5 214v1M249.5 219v1M249.5 231v2M249.5 249v1M250.5 138v12M250.5 192v2M250.5 220v1M250.5 250v1M251.5 193v2M251.5 200v1M251.5 217v4M251.5 251v1M252.5 251v1M253.5 202v1M253.5 221v1M253.5 250v1M254.5 157v1M254.5 216v1M254.5 244v2M255.5 195v4M255.5 200v3M255.5 214v1M255.5 248v2M256.5 197v2M256.5 201v1M256.5 210v1M256.5 251v1M257.5 196v1M257.5 251v1M258.5 201v1M258.5 243v2M259.5 248v2M260.5 249v1M261.5 213v2M262.5 206v2M262.5 222v1M262.5 243v3M263.5 220v1M263.5 248v1M264.5 203v1M264.5 248v1M266.5 204v1M267.5 199v1M267.5 211v1M268.5 198v4M268.5 206v6M269.5 199v1M269.5 211v1M269.5 251v1M270.5 195v2M270.5 201v2M270.5 215v2M270.5 249v1M271.5 152v1M271.5 206v3M271.5 251v1M272.5 246v1M273.5 249v1M274.5 247v1M275.5 197v1M275.5 247v1M276.5 96v2M276.5 137v2M276.5 141v8M276.5 151v7M276.5 199v17M276.5 225v3M276.5 250v1M277.5 251v1M278.5 143v1M278.5 206v1M278.5 223v1M278.5 250v1M279.5 201v1M279.5 250v1M280.5 209v1M280.5 229v1M280.5 249v1M281.5 195v2M282.5 96v1M282.5 245v2M283.5 98v1M283.5 140v1M283.5 206v1M283.5 247v2M284.5 198v1M284.5 203v2M284.5 211v1M284.5 218v1M285.5 138v2M285.5 143v10M285.5 193v3M285.5 220v2M285.5 250v1M286.5 195v1M286.5 205v1M286.5 212v2M286.5 217v2M286.5 220v1M286.5 251v1M287.5 196v1M288.5 202v3M288.5 251v1M289.5 222v2M290.5 244v1M291.5 249v1M293.5 212v2M293.5 250v1M294.5 195v2M294.5 203v1M294.5 250v1M295.5 112v1M295.5 121v1M295.5 140v1M295.5 158v1M295.5 202v1M295.5 213v1M295.5 250v1M296.5 100v1M296.5 123v1M296.5 134v1M296.5 142v8M296.5 194v8M296.5 203v2M296.5 208v10M296.5 248v1M297.5 107v6M297.5 115v18M297.5 134v1M297.5 138v1M297.5 154v2M297.5 189v3M297.5 222v1M297.5 251v1M298.5 87v1M298.5 110v1M298.5 120v1M298.5 138v4M298.5 143v8M298.5 193v2M298.5 196v7M298.5 205v8M298.5 214v5M298.5 250v1M299.5 96v2M299.5 120v1M299.5 200v1M299.5 203v1M299.5 214v1M299.5 219v2M299.5 249v2M300.5 95v2M300.5 192v1M300.5 198v2M300.5 211v2M300.5 215v1M300.5 217v1M300.5 248v1M301.5 190v2M301.5 217v1M301.5 249v1M302.5 101v2M302.5 134v2M302.5 137v3M302.5 143v3M302.5 148v2M302.5 189v2M302.5 218v2M302.5 246v1M303.5 133v1M303.5 150v1M303.5 189v1M303.5 219v1M303.5 249v1M304.5 188v1M304.5 191v2M304.5 218v1M305.5 212v1M305.5 248v1M306.5 91v1M306.5 192v3M306.5 210v1M306.5 217v2M307.5 207v1M307.5 212v3M307.5 219v1M307.5 246v1M308.5 209v1M308.5 211v1M308.5 247v2M309.5 191v2M309.5 216v2M309.5 250v1M310.5 193v1M310.5 205v1M310.5 208v1M310.5 211v1M310.5 249v1M311.5 195v2M311.5 202v1M311.5 206v1M311.5 219v1M311.5 251v1M312.5 92v1M312.5 249v1M313.5 251v1M315.5 248v1M316.5 251v1M317.5 249v1M318.5 251v1M319.5 92v2M319.5 245v2M320.5 249v2M321.5 101v2M321.5 140v1M321.5 251v1M322.5 149v1M322.5 193v1M322.5 205v1M322.5 211v1M322.5 215v1M323.5 89v1M323.5 137v2M323.5 145v8M323.5 155v4M323.5 195v1M323.5 197v2M323.5 213v3M324.5 92v2M324.5 95v3M324.5 134v1M324.5 145v1M324.5 147v1M324.5 193v1M324.5 197v1M324.5 203v1M324.5 208v1M324.5 210v1M325.5 92v2M325.5 97v2M325.5 212v1M325.5 249v2M326.5 196v1M326.5 250v1M327.5 250v1M328.5 190v2M328.5 197v1M328.5 210v1M328.5 215v1M328.5 217v1M328.5 250v1M329.5 187v2M329.5 218v1M329.5 251v1M330.5 189v2M330.5 192v1M330.5 215v1M330.5 249v1M331.5 192v1M331.5 206v1M331.5 220v1M331.5 250v1M332.5 251v1M333.5 96v1M333.5 197v1M333.5 229v1M333.5 250v1M334.5 88v1M334.5 92v1M334.5 221v2M334.5 225v2M334.5 250v1M335.5 191v2M336.5 251v1M337.5 91v2M337.5 229v1M337.5 250v1M338.5 249v1M339.5 229v2M339.5 250v1M340.5 91v2M340.5 97v2M340.5 148v7M340.5 160v1M340.5 251v1M341.5 92v2M341.5 97v2M342.5 251v1M343.5 88v1M343.5 134v1M343.5 150v1M343.5 196v1M343.5 205v1M343.5 207v1M343.5 251v1M344.5 92v2M344.5 142v10M344.5 196v1M344.5 199v3M344.5 203v2M344.5 213v2M344.5 220v1M344.5 250v1M345.5 137v1M345.5 139v3M345.5 145v7M345.5 155v2M345.5 195v5M345.5 210v6M345.5 248v1M346.5 98v1M346.5 152v1M346.5 154v1M346.5 197v1M346.5 199v1M346.5 224v2M346.5 249v2M347.5 249v1M348.5 88v3M348.5 94v1M348.5 251v1M349.5 100v1M349.5 134v1M349.5 229v2M349.5 249v1M350.5 221v2M350.5 251v1M351.5 251v1M352.5 197v1M352.5 201v1M352.5 213v1M352.5 251v1M353.5 95v3M353.5 139v8M353.5 150v1M353.5 153v1M353.5 196v1M353.5 200v3M353.5 208v3M353.5 251v1M354.5 95v1M354.5 99v2M354.5 204v1M354.5 206v3M354.5 217v3M354.5 250v1M355.5 86v2M355.5 94v3M355.5 158v2M355.5 197v1M355.5 204v1M355.5 209v1M355.5 251v1M356.5 208v1M357.5 88v2M357.5 95v3M357.5 218v2M357.5 251v1M358.5 96v2M358.5 197v1M358.5 214v2M358.5 249v1M359.5 93v2M359.5 96v1M359.5 100v2M359.5 198v2M360.5 87v2M360.5 249v1M361.5 141v1M361.5 251v1M362.5 90v1M362.5 139v5M362.5 147v5M362.5 208v1M362.5 249v1M363.5 93v2M363.5 152v1M363.5 212v1M363.5 229v2M364.5 89v2M364.5 92v3M364.5 246v2M365.5 89v2M365.5 97v2M365.5 250v1M366.5 98v2M366.5 151v1M366.5 153v1M366.5 231v2M366.5 244v2M367.5 86v1M367.5 88v1M367.5 97v2M367.5 142v1M367.5 151v1M367.5 226v1M367.5 248v2M368.5 139v6M368.5 146v7M368.5 155v1M368.5 159v1M368.5 195v2M368.5 209v1M369.5 92v2M369.5 137v2M369.5 156v2M369.5 161v1M369.5 209v1M369.5 249v1M370.5 149v1M370.5 152v1M370.5 154v1M370.5 199v1M370.5 207v1M370.5 230v1M370.5 251v1M371.5 145v1M371.5 148v2M371.5 199v2M371.5 203v1M371.5 248v1M372.5 201v1M372.5 208v1M372.5 251v1M373.5 88v2M373.5 92v2M373.5 203v1M373.5 251v1M374.5 88v1M374.5 204v1M374.5 251v1M375.5 87v2M375.5 96v2M375.5 199v1M375.5 203v3M375.5 208v4M375.5 219v1M376.5 200v1M376.5 206v1M376.5 223v2M377.5 96v4M378.5 88v1M379.5 93v1M379.5 140v7M379.5 150v4M379.5 203v2M379.5 251v1M380.5 248v1M381.5 87v3M381.5 247v1M382.5 94v2M382.5 98v3M382.5 248v2M383.5 93v2M383.5 157v1M383.5 225v2M384.5 97v2M384.5 212v1M384.5 246v1M385.5 93v1M385.5 99v1M385.5 231v1M385.5 250v1M386.5 92v2M387.5 94v2M387.5 135v1M387.5 141v9M388.5 209v2M389.5 89v2M389.5 99v2M389.5 251v1M390.5 249v1M391.5 91v5M391.5 97v2M391.5 144v1M391.5 188v2M391.5 249v1M392.5 91v3M392.5 102v2M392.5 251v1M393.5 92v2M393.5 251v1M394.5 93v1M394.5 96v4M394.5 194v2M394.5 230v2M394.5 249v1M395.5 101v2M395.5 228v2M396.5 206v1M397.5 87v1M397.5 191v2M398.5 87v4M398.5 199v1M398.5 203v2M399.5 206v1M399.5 250v1M400.5 96v3M400.5 199v1M400.5 205v1M400.5 210v1M400.5 251v1M401.5 250v1M402.5 208v2M402.5 251v1M403.5 251v1M404.5 249v1M405.5 87v4M405.5 94v2M405.5 251v1M406.5 92v2M406.5 205v2M406.5 251v1M407.5 137v1M407.5 248v1M408.5 92v2M408.5 248v1M409.5 88v3M409.5 198v1M409.5 207v1M409.5 249v1M410.5 204v1M410.5 210v1M410.5 251v1M411.5 89v2M411.5 96v2M411.5 199v12M411.5 250v1M412.5 91v3M412.5 97v2M412.5 210v1M412.5 251v1M413.5 224v3M413.5 251v1M414.5 194v2M414.5 209v2M414.5 250v1M415.5 92v2M415.5 98v3M415.5 250v1M416.5 251v1M417.5 94v2M417.5 150v1M417.5 222v1M417.5 251v1M419.5 94v2M419.5 251v1M420.5 133v1M421.5 99v2M422.5 90v2M422.5 98v3M422.5 227v1M422.5 248v2M423.5 91v2M423.5 199v2M423.5 251v1M425.5 93v2M425.5 230v2M425.5 251v1M426.5 88v2M426.5 93v2M426.5 98v2M426.5 147v3M426.5 152v1M426.5 154v2M426.5 251v1M427.5 94v3M428.5 94v5M428.5 220v1M428.5 229v1M428.5 251v1M429.5 87v1M429.5 92v3M429.5 99v2M430.5 231v2M431.5 218v2M431.5 245v2M432.5 90v3M432.5 248v1M433.5 96v2M433.5 250v1M434.5 88v1M434.5 200v1M434.5 251v1M435.5 97v1M435.5 195v1M435.5 203v2M435.5 229v2M435.5 251v1M436.5 152v2M436.5 251v1M437.5 89v2M437.5 94v5M437.5 249v1M438.5 87v2M438.5 90v2M438.5 196v1M438.5 250v2M439.5 87v2M439.5 249v1M440.5 250v1M441.5 86v1M441.5 90v2M441.5 94v2M441.5 97v2M441.5 248v1M442.5 92v3M442.5 250v1M443.5 90v2M443.5 96v1M443.5 250v1M444.5 98v2M444.5 250v1M445.5 86v1M445.5 203v1M445.5 251v1M446.5 86v2M447.5 87v3M447.5 199v1M447.5 210v1M447.5 214v1M448.5 89v1M448.5 219v2M448.5 250v1M449.5 99v1M449.5 139v3M449.5 143v11M449.5 156v3M449.5 162v1M449.5 198v3M449.5 215v1M450.5 93v1M450.5 97v2M450.5 133v1M450.5 160v1M450.5 197v1M450.5 216v1M451.5 98v2M451.5 139v5M451.5 145v5M451.5 151v6M451.5 197v1M451.5 214v2M452.5 94v1M452.5 153v1M452.5 207v2M453.5 94v1M453.5 100v1M453.5 198v2M453.5 208v1M453.5 212v1M453.5 227v1M454.5 200v1M454.5 202v1M454.5 204v1M454.5 210v1M454.5 251v1M455.5 155v2M455.5 197v1M455.5 219v2M456.5 91v2M456.5 94v3M456.5 142v11M456.5 197v2M456.5 218v3M456.5 231v2M456.5 249v1M457.5 88v1M457.5 94v2M457.5 198v1M457.5 219v1M457.5 251v1M459.5 85v3M459.5 249v2M460.5 88v3M460.5 97v2M460.5 196v1M460.5 248v2M461.5 251v1M462.5 91v1M462.5 250v1M463.5 142v2M463.5 146v1M463.5 250v1M464.5 250v1M465.5 158v2M465.5 246v2M466.5 250v1M468.5 249v2M469.5 249v2M470.5 92v2M470.5 251v1M471.5 250v1M472.5 227v1M472.5 249v2M473.5 251v1M474.5 91v2M474.5 198v2M476.5 96v1M476.5 139v11M476.5 153v2M476.5 249v1M477.5 248v2M478.5 250v1M479.5 92v1M479.5 251v1M480.5 97v1M481.5 95v2M481.5 209v1M481.5 251v1M482.5 97v3M482.5 249v1M483.5 91v1M483.5 93v2M483.5 100v3M483.5 251v1M484.5 249v1M485.5 97v2M485.5 158v1M485.5 228v1M485.5 251v1M486.5 152v2M486.5 190v1M487.5 92v1M488.5 87v6M488.5 94v2M488.5 219v2M488.5 227v1M488.5 247v1M489.5 100v2M489.5 249v1M490.5 251v1M491.5 94v2M491.5 97v1M491.5 248v1M492.5 96v2M492.5 147v1M493.5 102v2M493.5 201v2M493.5 250v1M494.5 248v1M495.5 89v2M496.5 211v2M496.5 251v1M497.5 195v2M497.5 251v1M498.5 250v1M499.5 250v1M500.5 88v2M500.5 202v1M500.5 225v1M500.5 251v1M501.5 94v1M501.5 203v3M501.5 207v2M502.5 85v2M502.5 101v1M503.5 171v1M503.5 249v1M504.5 168v1M504.5 250v1M505.5 143v4M505.5 152v1M505.5 167v1M506.5 249v1M507.5 89v1M507.5 91v1M507.5 147v1M508.5 89v1M508.5 102v2M508.5 232v1M508.5 250v1M509.5 90v3M509.5 94v1M509.5 99v1M509.5 148v2M509.5 206v2M509.5 251v1M510.5 98v1M510.5 248v2M511.5 95v2M512.5 201v2M513.5 90v1M513.5 247v2M514.5 201v2M514.5 250v1M515.5 247v2M516.5 87v3M516.5 214v3M516.5 249v2M517.5 250v1M519.5 191v3M519.5 198v2M519.5 227v2M519.5 251v1M521.5 204v1M521.5 251v1M522.5 226v2M522.5 250v1M523.5 96v2M523.5 250v1M524.5 97v1M524.5 215v2M524.5 250v1M525.5 88v2M525.5 92v1M525.5 248v1M526.5 87v3M526.5 139v1M526.5 213v3M526.5 251v1M527.5 225v3M527.5 251v1M528.5 250v1M529.5 210v1M529.5 245v2M530.5 92v3M530.5 200v10M530.5 249v1M531.5 96v3M531.5 200v10M531.5 216v1M531.5 251v1M532.5 139v2M533.5 141v1M533.5 190v1M533.5 205v1M533.5 248v1M534.5 249v1M535.5 95v2M535.5 154v2M536.5 89v1M536.5 193v1M537.5 138v3M538.5 213v1M538.5 250v1M539.5 89v3M539.5 96v2M539.5 249v1M540.5 250v1M541.5 97v1M541.5 252v1M542.5 208v2M542.5 249v1M543.5 91v3M543.5 97v5M543.5 251v1M544.5 95v1M544.5 138v2M544.5 143v10M544.5 229v2M545.5 90v3M545.5 251v1M546.5 88v1M546.5 202v1M546.5 210v1M546.5 251v1M547.5 199v1M547.5 203v2M547.5 207v2M547.5 247v1M548.5 89v2M548.5 92v3M548.5 198v5M548.5 204v2M548.5 208v3M548.5 250v1M549.5 251v1M550.5 226v2M551.5 89v1M551.5 95v2M551.5 99v1M551.5 218v1M552.5 89v2M552.5 93v6M552.5 225v2M552.5 250v1M553.5 88v2M553.5 92v1M553.5 219v1M554.5 249v1M555.5 90v1M555.5 189v3M555.5 230v2M556.5 87v2M556.5 97v1M556.5 250v1M557.5 250v1M558.5 92v2M558.5 98v1M558.5 144v2M558.5 200v1M558.5 203v1M558.5 250v1M559.5 91v1M559.5 145v1M559.5 251v1M560.5 100v1M560.5 140v3M560.5 145v2M560.5 149v2M560.5 152v10M560.5 198v2M560.5 217v1M560.5 250v1M561.5 91v1M561.5 161v1M561.5 198v1M561.5 216v1M561.5 250v1M562.5 91v2M562.5 146v2M562.5 200v3M562.5 204v6M562.5 211v5M562.5 247v1M563.5 202v1M563.5 250v1M564.5 203v1M564.5 212v2M564.5 251v1M565.5 96v2M565.5 199v1M565.5 221v1M565.5 251v1M566.5 87v2M566.5 94v2M566.5 99v1M566.5 198v2M566.5 220v2M566.5 250v2M567.5 99v2M567.5 198v1M567.5 251v1M568.5 93v1M568.5 205v1M568.5 248v1M569.5 215v1M569.5 218v1M569.5 248v1M570.5 87v2M570.5 99v3M570.5 136v3M570.5 142v4M570.5 148v2M570.5 152v2M570.5 251v1M571.5 207v1M571.5 251v1M572.5 98v2M573.5 90v1M573.5 251v1M574.5 96v2M575.5 89v3M576.5 251v1M577.5 89v1M577.5 251v1M578.5 96v2M578.5 138v1M579.5 95v1M579.5 250v1M580.5 250v1M581.5 230v2M582.5 230v1M582.5 250v1M583.5 96v2M583.5 250v1M584.5 96v2M584.5 99v2M584.5 251v1M585.5 88v2M585.5 100v2M586.5 250v1M587.5 91v1M587.5 230v2M588.5 91v1M588.5 94v2M588.5 220v1M589.5 92v1M589.5 251v1M590.5 90v1M591.5 99v2M591.5 251v1M592.5 100v1M592.5 224v2M593.5 93v2M593.5 249v1M594.5 96v2M594.5 201v2M594.5 249v1M595.5 251v1M596.5 93v2M596.5 198v1M596.5 250v1M597.5 100v1M597.5 218v2M597.5 225v1M597.5 250v1M598.5 206v1M598.5 219v2M598.5 224v2M598.5 251v1M599.5 93v2M599.5 203v1M599.5 229v1M599.5 248v1M600.5 203v1M600.5 206v1M600.5 250v1M601.5 198v1M601.5 212v1M601.5 250v1M602.5 90v2M602.5 198v1M602.5 205v1M602.5 249v1M603.5 93v3M603.5 198v1M603.5 202v1M603.5 226v1M603.5 250v1M604.5 92v2M604.5 227v2M604.5 251v1M605.5 92v1M606.5 90v3M606.5 250v1M607.5 94v2M607.5 223v3M607.5 247v1M608.5 91v2M608.5 94v1M608.5 245v1M609.5 142v1M609.5 248v1M610.5 90v3M610.5 116v1M610.5 143v1M610.5 146v2M610.5 151v1M610.5 195v1M610.5 202v1M610.5 207v1M610.5 250v1M611.5 87v2M611.5 134v4M611.5 153v4M611.5 203v2M611.5 208v1M611.5 211v1M611.5 251v1M612.5 117v1M612.5 120v17M612.5 156v2M612.5 161v1M612.5 197v1M612.5 215v1M612.5 251v1M613.5 95v2M613.5 122v1M613.5 134v4M613.5 152v4M613.5 158v1M613.5 199v2M613.5 203v5M613.5 212v2M613.5 251v1M614.5 95v4M614.5 141v1M614.5 191v1M614.5 198v2M614.5 248v1M615.5 92v2M615.5 133v1M615.5 141v1M615.5 210v1M615.5 247v1M616.5 94v3M616.5 99v2M616.5 201v1M616.5 211v1M617.5 89v2M617.5 198v4M617.5 204v2M617.5 212v4M617.5 251v1M618.5 91v1M618.5 97v2M618.5 210v1M618.5 250v1M619.5 250v1M620.5 142v1M620.5 251v1M621.5 92v1M621.5 203v1M622.5 91v2M622.5 136v1M622.5 161v1M622.5 210v1M622.5 250v1M623.5 94v1M623.5 157v1M623.5 199v1M623.5 219v1M623.5 251v1M624.5 98v2M624.5 136v1M624.5 159v3M624.5 198v3M624.5 203v1M624.5 205v2M624.5 209v2M624.5 216v2M624.5 251v1M625.5 97v2M625.5 135v1M625.5 160v2M625.5 198v1M625.5 200v3M625.5 205v7M625.5 250v1M626.5 89v3M626.5 138v1M626.5 140v1M626.5 149v1M626.5 226v4M626.5 251v1M627.5 91v1M627.5 154v1M627.5 210v1M627.5 247v1M628.5 250v1M629.5 251v1M630.5 90v2M630.5 251v1M631.5 90v1M631.5 94v2M631.5 99v3M631.5 251v1M632.5 91v2M632.5 212v2M632.5 246v1M632.5 248v1M633.5 93v2M633.5 199v1M633.5 249v1M634.5 94v2M634.5 208v1M634.5 251v1M636.5 247v2M637.5 88v3M637.5 199v4M637.5 205v2M637.5 209v1M638.5 98v2M638.5 141v1M638.5 199v1M638.5 209v1M638.5 251v1M639.5 91v2M639.5 97v1M639.5 199v1M639.5 209v1M639.5 218v2M639.5 222v1M639.5 251v1M640.5 160v2M640.5 195v2M640.5 199v1M640.5 209v2M641.5 90v1M641.5 200v10M642.5 207v1M643.5 91v4M643.5 96v5M643.5 228v2M643.5 251v1M644.5 198v2M644.5 251v1M645.5 91v1M645.5 205v2M645.5 212v1M645.5 251v1M647.5 89v2M647.5 251v1M648.5 92v2M648.5 229v2M648.5 248v1M649.5 95v3M649.5 212v7M649.5 220v2M649.5 225v1M649.5 251v1M650.5 87v2M650.5 94v2M650.5 211v1M650.5 213v2M650.5 220v7M650.5 246v2M651.5 92v2M651.5 96v3M651.5 210v2M651.5 218v2M651.5 221v5M651.5 250v1M652.5 90v1M652.5 203v1M652.5 205v4M652.5 210v3M652.5 217v1M652.5 220v6M652.5 227v2M652.5 231v1M652.5 237v1M652.5 249v1M653.5 90v1M653.5 92v3M653.5 132v1M653.5 198v1M653.5 202v2M653.5 218v2M653.5 222v7M653.5 240v1M653.5 250v2M654.5 96v1M654.5 202v2M654.5 218v3M654.5 223v1M654.5 225v3M654.5 233v2M654.5 237v3M654.5 251v1M655.5 202v8M655.5 212v10M655.5 250v1M656.5 89v2M656.5 215v1M656.5 226v1M656.5 251v1M657.5 92v2M657.5 147v3M657.5 153v3M657.5 246v1M658.5 248v1M659.5 89v1M659.5 93v2M659.5 249v1M660.5 251v1M661.5 99v2M661.5 216v2M661.5 251v1M662.5 199v1M663.5 90v2M663.5 96v3M665.5 90v1M665.5 93v3M665.5 248v2M666.5 90v2M667.5 91v1M667.5 194v1M668.5 206v2M668.5 250v1M669.5 94v2M669.5 218v5M669.5 250v1M670.5 86v5M670.5 251v1M671.5 88v2M671.5 141v1M671.5 210v1M671.5 251v1M672.5 92v2M672.5 206v1M672.5 212v1M672.5 214v1M672.5 244v2M673.5 161v2M673.5 201v6M673.5 210v5M674.5 201v4M674.5 209v7M674.5 249v1M675.5 96v3M675.5 204v1M675.5 250v1M676.5 94v1M676.5 97v2M676.5 230v2M676.5 251v1M677.5 94v2M677.5 206v1M678.5 200v1M678.5 251v1M679.5 91v2M679.5 217v1M679.5 250v1M680.5 90v2M680.5 225v2M680.5 251v1M681.5 99v1M681.5 134v14M681.5 249v2M682.5 223v2M682.5 248v2M683.5 89v1M683.5 251v1M684.5 251v1M685.5 91v1M685.5 95v3M685.5 251v1M686.5 92v2M686.5 251v1M687.5 95v3M687.5 251v1M689.5 90v1M689.5 250v1M690.5 145v1M691.5 98v1M691.5 212v2M692.5 88v3M692.5 93v1M692.5 227v1M692.5 229v2M692.5 250v1M694.5 95v2M694.5 98v1M694.5 250v1M695.5 92v1M695.5 229v1M696.5 86v1M696.5 91v2M696.5 97v3M696.5 251v1M697.5 250v1M698.5 250v1M699.5 93v3M699.5 250v1M700.5 94v1M700.5 249v1M701.5 217v2M701.5 220v1M701.5 251v1M702.5 89v1M702.5 91v2M702.5 222v1M702.5 251v1M703.5 93v2M703.5 230v2M703.5 251v1M704.5 90v3M704.5 233v1M704.5 248v1M705.5 87v2M705.5 250v1M706.5 90v3M706.5 95v2M706.5 100v2M706.5 251v1M707.5 89v3M707.5 196v1M707.5 209v1M707.5 250v1M708.5 92v2M708.5 95v2M708.5 251v1M709.5 92v1M709.5 196v2M710.5 95v2M710.5 251v1M711.5 251v1M712.5 249v1M713.5 93v2M713.5 99v2M713.5 250v1M714.5 92v2M714.5 251v1M715.5 88v2M715.5 249v1M716.5 92v1M716.5 250v1M717.5 94v1M717.5 251v1M718.5 101v1M718.5 208v1M718.5 224v1M718.5 251v1M719.5 91v2M719.5 250v1M720.5 89v1M720.5 153v1M721.5 137v1M721.5 144v1M721.5 147v1M721.5 149v1M722.5 90v1M722.5 96v1M722.5 137v2M722.5 158v1M722.5 230v1M722.5 251v1M723.5 146v1M724.5 87v3M724.5 138v1M724.5 144v1M724.5 150v1M724.5 249v2M725.5 89v1M725.5 97v1M725.5 142v1M725.5 145v1M725.5 251v1M726.5 86v2M726.5 89v1M726.5 133v1M726.5 152v2M726.5 251v1M727.5 88v2M727.5 251v1M728.5 96v3M729.5 251v1M730.5 89v2M730.5 196v2M730.5 209v1M730.5 227v1M730.5 251v1M731.5 251v1M732.5 89v1M732.5 91v3M732.5 95v2M732.5 156v2M732.5 193v1M732.5 205v1M732.5 209v1M732.5 251v1M733.5 199v1M733.5 212v1M733.5 251v1M734.5 96v1M734.5 100v2M734.5 220v1M735.5 211v1M735.5 251v1M736.5 154v2M736.5 251v1M737.5 230v2M737.5 249v1M738.5 90v1M738.5 94v3M738.5 150v1M738.5 249v1M739.5 88v2M739.5 251v1M740.5 89v2M740.5 144v1M740.5 153v1M740.5 198v2M741.5 131v5M741.5 154v4M741.5 159v1M741.5 200v12M741.5 251v1M742.5 96v4M742.5 131v2M742.5 137v1M742.5 151v2M742.5 156v1M742.5 201v5M742.5 208v4M742.5 227v2M742.5 249v1M743.5 143v1M743.5 202v1M743.5 211v1M743.5 214v1M743.5 250v1M744.5 95v1M744.5 133v1M744.5 150v2M744.5 210v1M744.5 221v2M744.5 248v2M745.5 90v2M745.5 195v2M745.5 209v1M745.5 250v1M746.5 198v2M746.5 201v6M746.5 209v3M746.5 251v1M747.5 91v4M747.5 199v2M747.5 203v10M747.5 215v1M747.5 250v1M748.5 87v2M748.5 91v1M748.5 214v1M749.5 100v1M749.5 251v1M750.5 139v1M750.5 249v2M751.5 247v1M752.5 88v3M752.5 250v2M753.5 94v2M753.5 97v2M753.5 227v1M753.5 251v1M754.5 97v1M754.5 192v2M754.5 250v2M755.5 92v2M755.5 99v2M755.5 251v1M756.5 94v2M756.5 249v1M757.5 96v2M758.5 92v2M758.5 210v1M759.5 89v2M759.5 203v2M759.5 250v1M760.5 92v2M760.5 199v3M760.5 246v2M761.5 95v2M761.5 249v2M762.5 93v2M762.5 139v5M762.5 146v4M762.5 214v1M762.5 249v1M763.5 251v1M764.5 98v3M764.5 250v1M765.5 88v3M765.5 92v1M765.5 146v1M766.5 96v1M766.5 251v1M767.5 93v2M767.5 144v1M767.5 147v1M767.5 162v2M767.5 249v1M768.5 142v2M768.5 151v4M768.5 156v13M768.5 248v1M769.5 95v2M769.5 144v1M769.5 150v6M769.5 251v1M770.5 97v3M770.5 137v2M770.5 158v1M770.5 167v1M770.5 196v2M770.5 205v1M771.5 94v1M771.5 209v1M771.5 220v2M772.5 250v1M773.5 90v1M773.5 101v1M773.5 198v1M773.5 200v9M773.5 210v2M773.5 250v1M774.5 197v1M774.5 199v6M774.5 206v6M774.5 246v2M775.5 91v3M775.5 141v2M775.5 200v1M775.5 214v2M775.5 248v1M776.5 90v1M776.5 199v1M776.5 208v1M776.5 250v1M777.5 91v1M777.5 96v2M777.5 143v7M777.5 152v4M778.5 88v4M779.5 249v1M780.5 93v1M780.5 249v1M781.5 90v2M781.5 97v2M781.5 134v2M781.5 215v2M781.5 227v1M782.5 88v2M782.5 250v1M783.5 90v2M783.5 98v2M783.5 221v2M783.5 250v1M784.5 88v2M786.5 157v1M786.5 209v2M786.5 248v1M787.5 96v2M787.5 246v2M788.5 91v2M788.5 157v1M788.5 247v2M789.5 92v2M789.5 250v1M790.5 247v2M791.5 87v1M791.5 227v1M791.5 251v1M792.5 91v1M792.5 95v2M792.5 99v1M792.5 144v4M792.5 153v2M792.5 156v1M792.5 251v1M793.5 92v1M793.5 96v2M793.5 251v1M794.5 204v2M794.5 251v1M795.5 86v1M795.5 92v2M795.5 209v1M796.5 92v1M797.5 90v2M797.5 248v1M798.5 93v1M798.5 95v2M798.5 246v1M799.5 92v2M799.5 223v1M799.5 249v1M800.5 100v1M800.5 204v1M800.5 250v1M801.5 145v1M801.5 250v1M802.5 193v2M802.5 250v1M803.5 94v1M803.5 99v1M803.5 249v1M804.5 88v2M804.5 194v1M804.5 250v1M805.5 89v1M805.5 248v1M806.5 213v1M806.5 227v1M806.5 247v1M807.5 89v3M807.5 191v2M808.5 248v1M809.5 89v5M809.5 99v2M809.5 192v3M809.5 250v1M810.5 225v1M810.5 249v1M811.5 89v4M811.5 96v1M811.5 155v1M811.5 211v1M811.5 249v1M812.5 95v1M812.5 251v1M813.5 142v2M813.5 251v1M814.5 95v1M814.5 205v1M814.5 249v1M815.5 99v1M815.5 199v1M816.5 201v1M816.5 247v2M817.5 199v1M817.5 201v3M817.5 207v1M817.5 209v1M817.5 251v1M818.5 96v2M818.5 201v1M819.5 93v2M819.5 200v1M819.5 251v1M820.5 249v1M821.5 90v2M821.5 93v3M821.5 247v1M822.5 93v3M822.5 250v1M823.5 215v1M823.5 228v1M823.5 248v1M824.5 229v2M825.5 96v3M826.5 250v1M827.5 98v1M827.5 193v2M827.5 251v1M828.5 88v3M828.5 93v1M828.5 249v1M829.5 248v1M831.5 88v2M831.5 213v1M832.5 216v2M832.5 250v1M833.5 91v3M833.5 205v1M833.5 250v1M834.5 114v1M834.5 146v1M834.5 152v1M834.5 251v1M835.5 91v2M835.5 114v1M835.5 118v3M835.5 122v11M835.5 154v1M835.5 196v1M835.5 216v1M835.5 250v1M836.5 95v1M836.5 118v12M836.5 135v1M836.5 154v3M836.5 196v1M836.5 216v1M837.5 94v1M837.5 96v1M837.5 128v1M837.5 140v11M837.5 199v3M837.5 206v2M837.5 209v5M837.5 230v2M838.5 94v2M838.5 144v1M838.5 206v1M838.5 245v1M839.5 202v1M839.5 205v1M839.5 248v2M840.5 88v1M840.5 94v1M841.5 84v2M841.5 205v1M841.5 207v1M842.5 91v2M842.5 197v4M842.5 214v2M842.5 250v1M843.5 137v1M843.5 197v2M843.5 203v4M843.5 210v6M843.5 248v2M844.5 143v1M844.5 195v1M844.5 206v1M844.5 246v2M845.5 162v1M845.5 198v1M845.5 216v1M845.5 250v1M846.5 91v1M846.5 93v2M846.5 98v2M846.5 195v1M846.5 226v2M846.5 251v1M847.5 92v1M847.5 96v2M847.5 203v2M848.5 220v2M848.5 250v1M849.5 249v2M850.5 90v2M850.5 94v1M850.5 96v3M850.5 144v4M850.5 153v3M850.5 164v1M850.5 205v1M850.5 244v1M850.5 246v1M851.5 248v1M852.5 94v1M852.5 200v1M852.5 248v1M853.5 89v1M853.5 205v2M854.5 251v1M855.5 93v2M855.5 209v2M855.5 212v23M855.5 241v4M856.5 211v2M856.5 232v3M856.5 239v2M856.5 244v4M857.5 87v2M857.5 203v2M857.5 211v15M857.5 228v16M857.5 246v1M857.5 251v2"/><path stroke="#0a78e1" d="M2.5 101v1M2.5 105v4M2.5 213v6M2.5 251v1M3.5 106v3M3.5 112v4M3.5 118v4M3.5 124v2M3.5 128v4M3.5 134v1M3.5 136v1M3.5 151v2M3.5 156v4M3.5 161v8M3.5 171v5M3.5 178v1M3.5 181v3M3.5 186v5M3.5 193v4M3.5 211v2M3.5 217v1M3.5 247v2M4.5 250v2M5.5 117v1M5.5 172v1M5.5 207v1M5.5 252v1M6.5 251v1M7.5 251v1M10.5 251v1M11.5 252v1M12.5 252v1M13.5 251v1M15.5 250v1M17.5 252v1M18.5 249v1M19.5 249v2M21.5 251v1M22.5 250v1M23.5 251v1M24.5 251v1M26.5 251v1M27.5 252v1M28.5 249v1M29.5 249v1M30.5 251v1M31.5 251v1M32.5 250v2M33.5 250v1M34.5 251v1M35.5 250v2M37.5 252v1M38.5 246v2M40.5 252v1M41.5 249v2M42.5 252v1M43.5 252v1M44.5 136v1M44.5 140v1M44.5 143v2M44.5 148v1M44.5 152v2M44.5 198v3M44.5 202v5M44.5 210v5M44.5 248v2M45.5 133v5M45.5 155v1M45.5 157v4M45.5 169v1M45.5 189v1M45.5 193v2M45.5 212v4M45.5 250v1M46.5 139v3M46.5 145v2M46.5 149v5M46.5 166v1M46.5 196v4M46.5 202v4M46.5 209v3M46.5 219v1M46.5 249v1M47.5 189v1M47.5 245v1M48.5 208v1M48.5 250v1M49.5 252v1M50.5 198v1M50.5 223v1M50.5 250v2M51.5 198v1M51.5 208v1M51.5 219v1M51.5 223v1M51.5 252v1M52.5 227v1M52.5 252v1M53.5 251v1M54.5 252v1M55.5 251v1M56.5 247v2M58.5 252v1M59.5 251v1M61.5 251v1M63.5 251v2M64.5 252v1M65.5 251v1M66.5 248v1M67.5 251v1M68.5 250v2M69.5 251v1M70.5 252v1M73.5 251v1M74.5 251v1M75.5 252v1M76.5 250v1M77.5 251v1M78.5 252v1M79.5 251v1M80.5 252v1M81.5 252v1M82.5 250v2M83.5 251v1M84.5 250v2M85.5 252v1M87.5 247v2M88.5 250v2M89.5 250v1M90.5 252v1M91.5 252v1M92.5 250v1M93.5 249v1M94.5 251v1M96.5 252v1M97.5 249v1M98.5 251v2M100.5 251v1M101.5 252v1M102.5 145v2M103.5 137v3M103.5 141v4M103.5 149v5M103.5 201v14M103.5 252v1M104.5 252v1M106.5 251v1M107.5 252v1M108.5 204v8M108.5 213v2M108.5 217v1M108.5 252v1M109.5 251v1M110.5 252v1M111.5 249v1M114.5 250v2M115.5 252v1M116.5 250v2M117.5 249v1M119.5 251v1M120.5 251v2M121.5 252v1M122.5 251v1M123.5 250v2M125.5 251v1M126.5 250v1M128.5 250v2M129.5 252v1M130.5 251v1M132.5 251v1M134.5 251v1M135.5 252v1M136.5 251v1M137.5 252v1M139.5 201v10M139.5 252v1M140.5 247v2M141.5 249v2M142.5 251v1M143.5 250v2M144.5 201v6M144.5 208v3M144.5 213v1M144.5 249v1M145.5 251v1M147.5 252v1M148.5 251v1M149.5 252v1M150.5 253v1M151.5 252v1M153.5 252v1M154.5 251v2M156.5 250v1M157.5 250v2M158.5 250v2M159.5 199v3M159.5 205v4M159.5 210v1M160.5 200v1M160.5 205v1M160.5 207v3M161.5 201v1M161.5 203v8M162.5 252v1M163.5 252v1M164.5 250v2M165.5 252v1M166.5 252v1M167.5 252v1M168.5 252v1M170.5 252v1M172.5 251v1M174.5 248v2M176.5 251v1M177.5 250v1M178.5 251v1M179.5 250v2M180.5 203v6M180.5 211v3M180.5 252v1M181.5 252v1M182.5 250v2M183.5 251v1M184.5 251v1M185.5 135v1M185.5 252v1M186.5 111v1M186.5 138v6M186.5 145v1M186.5 200v1M186.5 203v1M186.5 206v2M186.5 213v2M186.5 216v1M186.5 250v1M187.5 133v1M187.5 135v2M187.5 141v1M187.5 145v3M187.5 198v5M187.5 213v1M187.5 217v1M187.5 250v1M188.5 128v1M188.5 150v1M189.5 252v1M190.5 252v1M191.5 212v1M191.5 252v1M192.5 198v1M192.5 220v1M192.5 252v1M193.5 197v1M193.5 219v2M194.5 220v1M194.5 251v1M195.5 251v1M196.5 214v1M196.5 248v1M197.5 251v1M198.5 252v1M199.5 251v1M200.5 250v1M201.5 251v1M202.5 249v2M203.5 251v1M204.5 251v1M205.5 252v1M206.5 251v1M208.5 251v1M209.5 251v1M210.5 251v2M211.5 251v1M212.5 249v1M213.5 206v1M213.5 209v1M213.5 251v1M214.5 252v1M215.5 252v1M216.5 251v1M217.5 205v1M218.5 202v5M218.5 209v5M218.5 250v1M219.5 199v2M219.5 203v4M219.5 210v1M219.5 249v1M221.5 252v1M222.5 252v1M223.5 248v1M224.5 251v1M225.5 250v2M226.5 252v1M227.5 247v1M228.5 250v2M229.5 198v1M229.5 252v1M230.5 194v1M230.5 197v3M230.5 210v1M230.5 214v2M231.5 251v1M232.5 251v1M233.5 251v1M235.5 250v1M236.5 250v1M237.5 252v1M238.5 252v1M239.5 252v1M240.5 251v1M241.5 251v1M243.5 147v1M243.5 252v1M244.5 202v1M244.5 252v1M245.5 131v1M245.5 133v4M245.5 140v4M245.5 147v1M245.5 191v1M245.5 194v3M245.5 214v1M245.5 251v2M246.5 148v1M246.5 252v1M247.5 252v1M248.5 103v1M249.5 195v19M249.5 215v4M249.5 250v1M250.5 194v1M250.5 211v2M250.5 214v2M250.5 219v1M250.5 251v2M251.5 195v5M251.5 201v7M251.5 212v5M251.5 252v1M252.5 252v1M253.5 251v1M254.5 246v2M255.5 199v1M255.5 203v11M255.5 250v1M256.5 252v1M257.5 252v1M258.5 245v2M259.5 251v1M260.5 251v2M261.5 249v1M262.5 246v2M263.5 249v2M264.5 249v1M266.5 251v1M267.5 200v3M267.5 206v5M267.5 252v1M268.5 202v2M268.5 205v1M268.5 252v1M269.5 200v4M269.5 206v2M269.5 210v1M269.5 252v1M270.5 250v2M272.5 247v3M273.5 251v1M274.5 249v2M275.5 249v2M276.5 251v1M277.5 252v1M278.5 251v1M279.5 251v1M280.5 250v1M282.5 247v3M283.5 249v2M284.5 219v1M284.5 251v2M285.5 218v2M286.5 252v1M287.5 217v1M287.5 250v2M289.5 252v1M290.5 247v1M291.5 250v1M293.5 251v1M295.5 251v1M296.5 205v3M296.5 249v2M297.5 133v1M297.5 135v3M297.5 139v2M297.5 146v1M297.5 151v3M297.5 219v3M297.5 252v1M298.5 122v1M298.5 203v2M298.5 213v1M298.5 251v1M299.5 251v1M300.5 249v2M301.5 149v1M301.5 192v1M301.5 213v1M301.5 216v1M301.5 251v1M302.5 140v3M302.5 146v2M302.5 191v1M302.5 247v2M303.5 190v2M303.5 217v2M303.5 250v1M304.5 193v3M304.5 197v1M304.5 216v2M305.5 249v1M306.5 215v1M306.5 251v1M307.5 248v3M308.5 249v1M309.5 193v1M309.5 197v7M309.5 209v1M309.5 215v1M309.5 251v2M310.5 215v1M310.5 250v2M312.5 250v1M313.5 252v1M314.5 251v2M315.5 251v1M316.5 252v1M317.5 250v2M318.5 252v1M319.5 248v1M319.5 250v1M320.5 252v1M321.5 252v1M322.5 249v3M323.5 139v6M323.5 153v2M323.5 196v1M323.5 199v8M323.5 208v5M323.5 252v1M324.5 252v1M325.5 251v1M326.5 205v1M326.5 251v1M327.5 251v1M328.5 251v1M329.5 189v6M329.5 216v2M329.5 252v1M331.5 251v1M332.5 252v1M333.5 251v1M335.5 252v1M336.5 252v1M337.5 251v1M340.5 252v1M341.5 251v1M343.5 252v1M344.5 197v2M344.5 202v1M344.5 205v8M344.5 252v1M345.5 200v10M348.5 252v1M349.5 251v1M350.5 252v1M351.5 252v1M353.5 197v3M353.5 203v5M353.5 252v1M354.5 251v1M355.5 252v1M356.5 251v1M358.5 250v2M359.5 251v1M360.5 250v1M361.5 252v1M362.5 250v2M364.5 249v1M365.5 251v1M366.5 246v2M367.5 87v1M367.5 96v1M367.5 250v1M368.5 145v1M368.5 197v7M368.5 207v2M368.5 251v1M369.5 91v1M369.5 152v1M369.5 155v1M369.5 196v1M369.5 198v3M369.5 251v1M370.5 198v1M370.5 252v1M371.5 249v2M372.5 252v1M373.5 252v1M375.5 200v3M375.5 206v2M375.5 252v1M376.5 251v1M377.5 95v1M377.5 251v1M378.5 251v1M380.5 249v2M381.5 249v1M382.5 250v1M383.5 252v1M384.5 248v2M385.5 251v1M390.5 250v1M391.5 96v1M391.5 250v1M393.5 252v1M394.5 250v1M395.5 249v2M396.5 251v1M397.5 252v1M398.5 200v3M398.5 205v5M399.5 251v1M400.5 252v1M401.5 251v1M402.5 252v1M403.5 252v1M404.5 250v2M405.5 93v1M405.5 252v2M406.5 252v1M407.5 249v1M408.5 98v1M408.5 249v2M409.5 250v2M410.5 252v1M411.5 251v2M412.5 252v1M413.5 252v1M414.5 251v1M415.5 91v1M415.5 251v1M416.5 252v1M417.5 252v1M418.5 252v1M419.5 252v1M420.5 252v1M421.5 249v1M422.5 250v1M423.5 252v1M424.5 250v2M425.5 252v1M426.5 252v1M428.5 93v1M428.5 252v1M429.5 252v1M430.5 251v1M431.5 247v3M432.5 251v1M433.5 251v1M434.5 252v1M435.5 252v1M436.5 252v1M438.5 252v1M440.5 251v1M441.5 249v1M442.5 251v2M443.5 251v1M445.5 252v1M447.5 211v1M447.5 252v1M448.5 251v1M449.5 201v2M449.5 207v2M449.5 210v3M449.5 214v1M450.5 134v4M450.5 158v2M451.5 97v1M451.5 163v1M451.5 198v10M451.5 210v4M452.5 252v1M453.5 250v1M455.5 198v3M455.5 205v1M455.5 210v4M455.5 217v2M455.5 251v1M456.5 199v1M456.5 206v4M456.5 211v4M456.5 250v1M457.5 199v2M457.5 208v5M457.5 215v4M457.5 252v1M458.5 251v1M459.5 251v1M460.5 96v1M460.5 250v1M461.5 252v1M463.5 251v1M464.5 251v1M465.5 249v1M466.5 251v2M467.5 251v2M468.5 251v1M469.5 251v1M470.5 91v1M471.5 251v1M472.5 251v1M473.5 252v1M474.5 251v1M475.5 251v1M476.5 250v1M477.5 250v1M478.5 251v1M480.5 252v1M481.5 94v1M481.5 252v1M482.5 251v1M483.5 92v1M483.5 252v1M484.5 251v1M486.5 251v2M487.5 91v1M487.5 250v1M488.5 248v2M489.5 250v2M490.5 252v1M491.5 96v1M491.5 249v1M492.5 250v1M493.5 251v1M494.5 249v1M495.5 251v1M497.5 252v1M498.5 251v1M500.5 87v1M500.5 252v1M501.5 252v1M502.5 251v1M503.5 250v2M504.5 251v1M505.5 251v1M507.5 252v1M508.5 101v1M508.5 251v1M509.5 252v1M510.5 97v1M510.5 250v1M511.5 251v1M512.5 252v1M513.5 89v1M513.5 249v1M514.5 251v1M515.5 249v1M516.5 86v1M516.5 251v1M517.5 252v1M518.5 250v2M519.5 252v1M520.5 251v1M522.5 251v1M523.5 251v1M525.5 91v1M525.5 249v1M526.5 252v1M527.5 252v1M528.5 251v1M529.5 248v1M530.5 250v2M531.5 252v1M532.5 251v1M533.5 249v2M534.5 250v1M535.5 94v1M535.5 250v2M537.5 252v1M538.5 251v1M541.5 253v1M542.5 250v2M543.5 252v1M544.5 250v1M545.5 252v1M546.5 252v1M547.5 249v2M548.5 203v1M548.5 206v2M548.5 251v1M550.5 252v1M551.5 88v1M551.5 98v1M551.5 251v1M553.5 248v1M554.5 250v1M556.5 251v1M558.5 97v1M558.5 251v1M560.5 143v2M560.5 147v2M560.5 151v1M560.5 200v1M560.5 214v3M560.5 251v1M561.5 90v1M561.5 139v2M561.5 143v1M561.5 157v4M561.5 199v2M561.5 215v1M561.5 251v1M562.5 203v1M562.5 250v1M563.5 251v1M565.5 95v1M565.5 217v4M565.5 252v1M566.5 97v2M566.5 200v1M566.5 203v2M566.5 217v3M566.5 252v1M567.5 199v4M567.5 220v1M567.5 252v1M568.5 92v1M568.5 201v1M568.5 249v2M569.5 249v2M572.5 250v1M574.5 251v1M576.5 252v1M578.5 95v1M578.5 251v1M579.5 251v1M581.5 252v1M582.5 251v1M584.5 252v1M587.5 252v1M588.5 93v1M589.5 252v1M591.5 252v1M592.5 99v1M592.5 252v1M593.5 251v1M594.5 251v1M595.5 252v1M597.5 251v1M598.5 252v1M599.5 249v2M600.5 252v1M601.5 201v4M601.5 210v2M601.5 252v1M602.5 251v2M603.5 251v1M606.5 251v1M607.5 248v2M608.5 93v1M608.5 246v2M609.5 250v1M610.5 128v1M610.5 251v1M611.5 138v9M611.5 149v4M611.5 213v1M612.5 137v2M612.5 150v6M612.5 198v2M612.5 201v2M612.5 208v3M612.5 214v1M612.5 252v1M613.5 138v4M613.5 145v7M614.5 249v2M615.5 249v1M616.5 98v1M616.5 251v1M617.5 202v2M617.5 206v6M617.5 252v1M618.5 251v1M619.5 251v1M620.5 252v1M621.5 252v1M624.5 137v1M624.5 152v4M624.5 158v1M624.5 252v1M625.5 136v1M625.5 158v2M625.5 199v1M625.5 203v2M625.5 251v1M629.5 252v1M630.5 252v1M631.5 252v1M632.5 249v2M633.5 250v2M634.5 252v1M635.5 252v1M636.5 249v2M637.5 207v2M638.5 200v9M638.5 252v1M639.5 200v5M639.5 207v2M639.5 252v1M640.5 200v9M640.5 252v1M641.5 252v1M642.5 251v1M643.5 90v1M643.5 252v1M644.5 92v1M644.5 252v1M645.5 252v1M646.5 251v1M647.5 252v1M648.5 91v1M648.5 251v1M650.5 93v1M650.5 212v1M650.5 215v5M650.5 248v1M651.5 212v6M651.5 220v1M652.5 209v1M652.5 213v4M652.5 218v2M652.5 251v1M653.5 89v1M653.5 204v2M653.5 208v2M653.5 212v6M653.5 220v2M653.5 252v1M654.5 204v4M654.5 212v6M654.5 221v2M654.5 224v1M654.5 240v2M654.5 252v2M655.5 210v2M655.5 252v1M656.5 252v1M658.5 249v2M659.5 88v1M659.5 250v1M660.5 252v1M661.5 252v1M662.5 91v1M662.5 252v1M663.5 251v1M665.5 250v1M666.5 251v1M667.5 252v1M668.5 251v1M669.5 251v1M671.5 252v1M672.5 246v1M672.5 248v1M674.5 205v4M674.5 250v1M675.5 251v2M676.5 252v1M677.5 93v1M677.5 251v1M679.5 251v1M680.5 252v1M681.5 98v1M681.5 251v1M682.5 250v2M684.5 252v1M685.5 252v1M686.5 252v1M689.5 251v1M691.5 252v1M692.5 251v1M693.5 252v1M694.5 94v1M694.5 251v1M695.5 251v1M696.5 90v1M697.5 251v1M699.5 252v1M700.5 250v1M701.5 252v1M702.5 88v1M703.5 92v1M704.5 249v1M705.5 251v1M706.5 252v1M708.5 252v1M709.5 252v2M711.5 252v1M712.5 250v2M713.5 251v1M715.5 250v1M716.5 87v1M717.5 252v1M718.5 100v1M718.5 252v1M719.5 251v2M720.5 251v2M722.5 95v1M722.5 152v1M722.5 157v1M723.5 156v1M723.5 252v2M724.5 251v1M725.5 138v1M725.5 252v1M726.5 252v1M727.5 252v1M728.5 250v1M730.5 252v1M732.5 252v1M733.5 200v3M733.5 204v6M733.5 211v1M734.5 251v2M736.5 252v1M737.5 251v1M738.5 250v2M739.5 252v1M740.5 251v2M741.5 136v4M741.5 142v2M741.5 146v8M741.5 252v1M742.5 133v4M742.5 138v1M742.5 140v8M742.5 149v2M742.5 153v3M742.5 250v1M743.5 251v1M744.5 250v1M745.5 251v1M747.5 201v2M747.5 213v2M747.5 251v1M749.5 252v1M750.5 251v1M751.5 249v1M751.5 251v1M752.5 252v1M753.5 96v1M753.5 253v1M754.5 96v1M754.5 252v1M755.5 91v1M755.5 98v1M755.5 252v1M756.5 251v1M757.5 251v1M758.5 249v1M759.5 251v1M760.5 249v1M761.5 94v1M761.5 251v1M762.5 92v1M762.5 250v2M763.5 252v1M764.5 251v1M765.5 252v1M766.5 139v1M766.5 252v1M767.5 154v1M767.5 250v1M768.5 144v2M768.5 147v4M768.5 155v1M769.5 94v1M769.5 145v5M769.5 156v1M770.5 252v1M771.5 93v1M771.5 251v1M772.5 251v1M773.5 100v1M773.5 209v1M773.5 251v1M774.5 205v1M774.5 249v1M775.5 250v1M776.5 251v1M777.5 252v1M778.5 252v1M779.5 250v1M780.5 250v1M781.5 96v1M781.5 251v2M782.5 251v1M783.5 251v1M784.5 251v1M787.5 248v2M788.5 250v1M789.5 251v1M790.5 250v1M791.5 252v1M792.5 94v1M792.5 252v1M793.5 252v1M795.5 251v1M796.5 252v1M797.5 89v1M797.5 249v2M798.5 247v2M799.5 250v2M800.5 99v1M800.5 251v1M801.5 251v2M803.5 93v1M803.5 250v2M804.5 87v1M804.5 251v1M806.5 249v1M807.5 250v1M808.5 249v2M809.5 98v1M811.5 250v1M813.5 252v1M814.5 94v1M815.5 98v1M815.5 252v2M816.5 92v1M816.5 249v2M817.5 200v1M817.5 204v3M817.5 208v1M817.5 252v1M818.5 250v1M820.5 250v1M821.5 248v2M822.5 251v1M823.5 249v1M824.5 249v1M826.5 251v1M829.5 249v2M830.5 251v2M831.5 250v2M832.5 251v1M833.5 251v2M834.5 126v1M834.5 252v1M835.5 121v1M835.5 133v1M835.5 137v1M835.5 152v2M835.5 197v2M835.5 214v2M835.5 251v1M836.5 130v5M836.5 136v4M836.5 153v1M836.5 197v1M836.5 207v1M836.5 215v1M836.5 252v1M837.5 93v1M837.5 95v1M837.5 124v1M837.5 196v1M837.5 251v1M838.5 123v1M838.5 247v2M840.5 251v1M841.5 251v1M842.5 201v10M842.5 212v2M843.5 199v4M843.5 207v3M847.5 252v1M848.5 251v2M849.5 251v1M850.5 248v1M851.5 249v2M852.5 93v1M852.5 249v1M853.5 251v1M855.5 92v1M855.5 211v1M855.5 252v1M856.5 213v2M856.5 217v5M856.5 223v9M856.5 235v4M856.5 241v3M856.5 252v1M857.5 253v1"/><path stroke="#0aa0ff" d="M2.5 109v6M2.5 119v3M2.5 123v3M2.5 128v3M2.5 134v2M2.5 139v1M2.5 207v2M2.5 212v1M2.5 253v1M3.5 116v2M3.5 122v2M3.5 126v2M3.5 132v2M3.5 137v1M3.5 150v1M3.5 153v3M3.5 169v2M3.5 179v2M3.5 184v2M3.5 191v2M3.5 197v2M3.5 200v1M3.5 208v3M3.5 252v1M4.5 252v2M5.5 253v1M6.5 252v1M7.5 252v1M8.5 253v1M9.5 253v1M10.5 253v1M11.5 253v1M12.5 253v2M13.5 252v2M14.5 253v1M15.5 251v1M16.5 252v1M17.5 253v1M18.5 250v2M19.5 251v1M20.5 252v2M22.5 251v2M23.5 252v1M24.5 252v1M25.5 253v1M26.5 252v1M27.5 253v1M28.5 250v2M29.5 250v1M30.5 252v2M32.5 252v1M33.5 252v1M34.5 252v1M36.5 252v2M37.5 253v1M38.5 249v2M39.5 251v2M40.5 253v1M41.5 251v2M42.5 253v1M43.5 253v1M44.5 141v2M44.5 145v3M44.5 149v3M44.5 201v1M44.5 207v3M44.5 250v2M45.5 138v1M45.5 145v1M45.5 150v5M45.5 195v4M45.5 201v1M45.5 211v1M45.5 251v1M46.5 142v3M46.5 147v2M46.5 200v2M46.5 206v3M46.5 250v1M47.5 248v1M48.5 251v1M49.5 253v1M50.5 199v3M50.5 205v2M50.5 216v4M50.5 222v1M50.5 252v1M51.5 199v2M51.5 202v4M51.5 207v1M51.5 209v3M51.5 214v5M51.5 220v3M51.5 253v1M52.5 253v1M53.5 252v2M54.5 253v1M56.5 249v2M57.5 251v1M58.5 253v1M60.5 252v2M61.5 253v1M62.5 253v1M63.5 253v1M64.5 253v1M66.5 250v2M67.5 252v1M68.5 252v1M69.5 252v1M70.5 253v1M71.5 252v1M72.5 249v1M73.5 252v1M74.5 252v2M75.5 253v1M76.5 251v2M77.5 252v2M78.5 253v2M79.5 252v2M80.5 253v1M81.5 253v1M83.5 252v2M84.5 252v2M85.5 253v1M86.5 253v1M87.5 249v2M88.5 252v1M89.5 251v1M90.5 253v1M91.5 253v1M92.5 251v2M93.5 250v2M94.5 252v1M95.5 252v1M96.5 253v1M97.5 251v1M98.5 253v1M101.5 253v1M102.5 253v1M103.5 145v4M103.5 253v1M104.5 253v1M105.5 253v1M107.5 253v1M108.5 253v2M109.5 252v2M110.5 253v1M111.5 250v1M112.5 251v1M113.5 251v2M114.5 252v1M115.5 253v1M116.5 252v1M118.5 252v1M119.5 252v1M120.5 253v1M121.5 253v1M122.5 252v2M123.5 252v1M124.5 253v1M125.5 252v1M126.5 252v1M127.5 253v1M128.5 253v1M129.5 253v1M130.5 252v2M131.5 252v2M132.5 252v2M133.5 253v1M134.5 253v1M137.5 253v1M138.5 253v1M139.5 253v1M140.5 249v3M143.5 252v1M145.5 252v1M146.5 251v1M147.5 253v1M148.5 252v2M149.5 253v1M150.5 254v1M151.5 253v2M152.5 253v1M153.5 253v1M154.5 253v1M155.5 252v1M156.5 252v1M157.5 252v1M158.5 252v1M159.5 209v1M159.5 253v1M160.5 206v1M161.5 252v1M162.5 253v1M163.5 253v1M165.5 253v1M166.5 253v1M167.5 253v1M168.5 253v1M169.5 252v1M170.5 253v1M171.5 252v1M172.5 252v1M173.5 253v1M174.5 250v2M175.5 252v2M176.5 253v1M178.5 252v2M179.5 252v2M180.5 253v1M181.5 253v1M182.5 252v1M183.5 252v1M185.5 253v1M186.5 144v1M186.5 201v2M186.5 204v2M186.5 208v5M186.5 215v1M186.5 251v2M187.5 137v4M187.5 142v3M187.5 205v2M187.5 212v1M187.5 214v3M187.5 251v2M188.5 253v1M189.5 253v1M190.5 253v1M191.5 253v1M192.5 199v1M192.5 203v8M192.5 216v4M192.5 253v1M193.5 198v8M193.5 214v2M193.5 218v1M193.5 252v1M194.5 252v1M196.5 250v2M197.5 252v2M198.5 253v1M199.5 252v1M200.5 251v2M201.5 252v2M202.5 251v2M204.5 252v1M205.5 253v1M206.5 253v1M207.5 253v1M208.5 253v1M209.5 253v1M210.5 253v1M211.5 253v1M212.5 251v2M213.5 252v2M214.5 253v1M215.5 253v1M216.5 252v2M217.5 253v1M218.5 251v1M220.5 253v1M221.5 253v1M222.5 253v1M223.5 250v2M224.5 252v1M225.5 252v1M226.5 253v1M227.5 251v1M228.5 253v1M229.5 253v1M230.5 195v2M230.5 200v1M230.5 202v3M230.5 209v1M230.5 211v1M230.5 213v1M230.5 252v1M232.5 252v2M233.5 252v1M234.5 252v1M235.5 251v2M236.5 252v1M237.5 253v1M238.5 253v1M239.5 253v1M240.5 252v1M241.5 252v2M242.5 252v1M243.5 253v1M244.5 253v1M245.5 137v3M245.5 144v3M245.5 197v1M245.5 200v2M245.5 204v1M245.5 208v2M245.5 211v3M245.5 253v1M246.5 253v1M247.5 253v1M248.5 250v1M249.5 251v1M250.5 195v7M250.5 203v3M250.5 209v2M250.5 213v1M250.5 216v3M250.5 253v1M251.5 208v4M251.5 253v1M252.5 253v1M253.5 252v1M254.5 248v2M255.5 252v1M256.5 253v1M257.5 253v1M258.5 249v1M259.5 253v1M260.5 253v2M261.5 251v2M262.5 248v3M263.5 251v1M264.5 251v1M266.5 252v1M267.5 203v3M267.5 253v1M268.5 204v1M268.5 253v1M269.5 204v2M269.5 208v2M269.5 253v2M270.5 253v1M271.5 253v1M272.5 250v3M273.5 252v2M274.5 251v2M276.5 252v1M277.5 253v1M278.5 252v2M280.5 251v2M281.5 252v2M282.5 250v3M283.5 251v3M284.5 253v1M285.5 196v1M285.5 201v1M285.5 210v2M285.5 216v2M285.5 252v1M286.5 253v1M287.5 252v1M288.5 253v1M289.5 253v1M290.5 251v1M291.5 251v2M292.5 252v1M295.5 252v1M296.5 251v1M297.5 141v2M297.5 145v1M297.5 147v1M297.5 150v1M297.5 192v1M297.5 196v2M297.5 200v3M297.5 216v3M297.5 253v1M298.5 253v1M299.5 252v2M300.5 251v1M301.5 193v6M301.5 200v4M301.5 212v1M301.5 214v2M301.5 252v1M302.5 192v1M302.5 215v1M302.5 217v1M302.5 249v2M303.5 192v1M303.5 251v2M304.5 196v1M304.5 198v3M304.5 204v4M304.5 211v5M304.5 251v1M305.5 250v2M307.5 251v2M308.5 251v3M309.5 194v3M309.5 204v1M309.5 207v2M309.5 210v5M309.5 253v1M311.5 253v1M312.5 251v2M313.5 253v1M314.5 253v2M315.5 252v2M316.5 253v1M318.5 253v1M319.5 251v3M320.5 253v2M321.5 253v2M322.5 253v1M323.5 207v1M323.5 253v1M324.5 253v1M325.5 252v2M326.5 253v1M327.5 252v2M328.5 252v1M329.5 195v1M329.5 199v1M329.5 202v3M329.5 206v2M329.5 212v1M329.5 214v2M329.5 253v1M330.5 251v2M332.5 253v1M333.5 252v2M334.5 252v1M335.5 253v1M336.5 253v1M337.5 252v2M338.5 251v2M340.5 253v1M341.5 252v1M342.5 253v1M343.5 253v1M344.5 253v1M345.5 251v2M347.5 251v2M348.5 253v1M349.5 252v2M350.5 253v1M351.5 253v1M352.5 253v1M353.5 253v1M354.5 253v1M355.5 253v1M357.5 252v1M358.5 252v1M359.5 253v1M360.5 251v1M361.5 253v1M364.5 251v1M365.5 252v2M366.5 248v3M367.5 251v2M368.5 204v3M368.5 253v1M369.5 139v1M369.5 147v1M369.5 151v1M369.5 153v2M369.5 197v1M369.5 201v1M369.5 203v3M369.5 252v1M370.5 253v1M372.5 253v1M373.5 253v1M374.5 253v1M375.5 253v1M376.5 253v1M377.5 252v2M378.5 253v1M379.5 253v1M380.5 251v1M381.5 250v1M382.5 251v1M383.5 253v1M384.5 251v2M385.5 252v2M386.5 253v1M387.5 252v1M388.5 252v1M390.5 251v1M391.5 251v2M392.5 253v1M393.5 253v1M396.5 252v1M397.5 253v1M398.5 253v1M399.5 252v2M400.5 253v1M401.5 252v2M402.5 253v1M403.5 253v1M404.5 252v1M405.5 254v1M406.5 253v2M407.5 251v2M408.5 251v1M409.5 253v1M410.5 253v2M411.5 253v1M412.5 253v1M413.5 253v1M414.5 253v1M415.5 252v1M416.5 253v1M417.5 253v1M418.5 253v1M419.5 253v2M420.5 253v2M421.5 250v1M422.5 251v1M423.5 253v1M424.5 252v2M425.5 253v1M426.5 253v1M427.5 252v1M428.5 253v1M429.5 253v1M430.5 253v1M431.5 251v2M432.5 252v2M433.5 252v1M434.5 253v1M435.5 253v1M436.5 253v1M437.5 252v1M438.5 253v1M439.5 252v2M440.5 252v1M441.5 251v1M442.5 253v1M443.5 253v1M444.5 252v1M445.5 253v1M446.5 252v1M447.5 253v1M448.5 252v1M449.5 203v4M449.5 209v1M449.5 213v1M449.5 252v1M450.5 138v5M450.5 148v2M450.5 152v2M450.5 157v1M450.5 198v1M450.5 210v2M450.5 214v2M450.5 253v1M451.5 208v2M451.5 253v1M452.5 253v1M453.5 251v2M454.5 252v1M455.5 201v4M455.5 206v4M455.5 214v3M455.5 252v1M456.5 200v2M456.5 205v1M456.5 210v1M456.5 215v3M456.5 251v2M457.5 201v7M457.5 213v2M457.5 253v1M458.5 252v1M460.5 252v1M461.5 253v1M462.5 252v2M463.5 252v2M464.5 252v1M465.5 250v2M466.5 253v1M467.5 253v1M468.5 252v2M469.5 252v2M470.5 253v1M471.5 253v2M472.5 252v2M473.5 253v1M474.5 252v1M475.5 252v1M476.5 251v2M477.5 251v2M478.5 252v1M479.5 252v1M480.5 253v1M481.5 253v1M482.5 253v1M483.5 253v1M484.5 252v2M485.5 253v1M486.5 253v1M487.5 251v2M488.5 251v2M489.5 253v1M490.5 253v1M491.5 250v2M492.5 251v1M493.5 252v1M494.5 251v1M495.5 252v1M497.5 253v1M498.5 253v1M500.5 253v1M501.5 253v1M502.5 252v1M503.5 252v1M504.5 252v2M505.5 252v1M506.5 251v2M507.5 253v1M508.5 252v1M509.5 253v1M510.5 251v2M511.5 252v2M512.5 253v1M513.5 251v1M515.5 250v2M516.5 252v2M517.5 253v1M518.5 252v1M519.5 253v1M520.5 252v2M521.5 253v1M522.5 252v1M523.5 252v1M524.5 252v1M526.5 253v1M527.5 253v1M528.5 252v2M529.5 249v1M530.5 252v1M531.5 253v1M532.5 252v1M533.5 251v1M534.5 251v1M535.5 252v1M536.5 253v1M537.5 253v1M538.5 252v1M539.5 252v1M540.5 253v1M541.5 254v1M542.5 252v2M543.5 253v1M545.5 253v1M546.5 253v1M547.5 252v1M548.5 253v1M549.5 253v1M550.5 253v1M551.5 252v2M552.5 252v1M553.5 250v2M554.5 252v1M555.5 253v1M556.5 252v1M557.5 252v1M558.5 252v1M560.5 201v1M560.5 203v3M560.5 208v3M560.5 213v1M560.5 252v1M561.5 141v2M561.5 144v1M561.5 149v8M561.5 214v1M561.5 253v1M562.5 251v3M563.5 253v1M564.5 253v1M565.5 200v1M565.5 204v2M565.5 212v5M565.5 253v1M566.5 201v2M566.5 205v1M566.5 210v2M566.5 215v2M566.5 253v1M567.5 209v2M567.5 213v5M567.5 219v1M567.5 253v1M568.5 251v2M569.5 252v1M570.5 253v1M571.5 252v1M572.5 252v1M573.5 253v1M574.5 252v1M575.5 251v1M576.5 253v1M577.5 253v1M578.5 252v2M580.5 252v1M581.5 253v1M582.5 252v1M583.5 252v2M584.5 253v1M585.5 253v1M586.5 252v1M587.5 253v1M588.5 252v1M589.5 253v1M590.5 253v1M591.5 253v1M592.5 253v1M593.5 252v2M594.5 252v2M595.5 253v1M597.5 252v1M598.5 253v1M599.5 251v2M600.5 253v1M601.5 199v2M601.5 205v5M601.5 253v2M602.5 253v2M603.5 252v2M604.5 253v1M605.5 251v1M606.5 252v2M607.5 250v2M608.5 248v2M609.5 251v2M610.5 252v1M611.5 147v2M611.5 253v1M612.5 139v4M612.5 147v1M612.5 149v1M612.5 200v1M612.5 203v5M612.5 211v1M612.5 213v1M612.5 253v1M613.5 142v3M613.5 252v1M615.5 250v2M616.5 252v1M617.5 253v1M618.5 252v1M620.5 253v1M621.5 253v1M623.5 253v1M624.5 138v5M624.5 146v1M624.5 149v3M624.5 156v2M624.5 253v1M625.5 137v3M625.5 141v2M625.5 145v2M625.5 148v4M625.5 153v5M626.5 253v1M627.5 250v2M628.5 252v1M629.5 253v1M630.5 253v1M631.5 253v2M632.5 251v3M633.5 252v2M634.5 253v1M635.5 253v1M636.5 251v1M637.5 252v2M638.5 253v1M639.5 205v2M639.5 253v1M640.5 253v1M641.5 253v1M642.5 252v2M643.5 253v1M644.5 253v1M645.5 253v1M646.5 252v1M647.5 253v1M648.5 252v2M649.5 253v1M650.5 252v1M651.5 253v1M652.5 252v2M653.5 206v2M653.5 210v2M653.5 253v2M654.5 208v4M654.5 254v1M655.5 253v2M656.5 253v1M657.5 250v2M658.5 251v1M659.5 251v2M660.5 253v1M661.5 253v1M662.5 253v1M663.5 252v1M664.5 253v1M665.5 251v2M666.5 252v1M667.5 253v1M668.5 252v1M669.5 252v1M670.5 253v1M671.5 253v1M673.5 252v2M674.5 252v2M675.5 253v1M676.5 253v1M677.5 252v1M678.5 252v1M680.5 253v1M681.5 252v2M682.5 252v2M683.5 253v2M684.5 253v2M685.5 253v1M686.5 253v1M687.5 252v2M688.5 253v1M689.5 252v1M690.5 251v1M692.5 252v1M693.5 253v1M694.5 252v2M695.5 252v1M696.5 253v1M697.5 252v1M698.5 252v2M699.5 253v1M700.5 251v2M701.5 253v1M702.5 253v1M703.5 253v1M704.5 250v2M705.5 252v1M707.5 252v1M708.5 253v2M709.5 254v1M710.5 253v1M711.5 253v1M712.5 252v1M713.5 252v1M714.5 252v1M715.5 251v1M716.5 252v1M717.5 253v1M718.5 253v1M719.5 253v1M720.5 253v1M721.5 253v1M722.5 139v1M722.5 141v2M722.5 149v3M722.5 153v4M722.5 253v2M723.5 254v1M724.5 252v2M725.5 253v1M726.5 253v1M727.5 253v1M728.5 252v2M729.5 253v1M730.5 253v1M731.5 253v1M732.5 253v1M733.5 203v1M733.5 210v1M733.5 253v1M734.5 253v1M735.5 253v1M736.5 253v1M737.5 252v2M738.5 252v2M739.5 253v2M740.5 253v1M741.5 140v2M741.5 144v2M741.5 253v1M742.5 139v1M742.5 148v1M742.5 252v2M743.5 252v1M744.5 251v2M745.5 252v2M746.5 253v1M747.5 252v1M748.5 253v1M749.5 253v1M750.5 252v2M751.5 252v2M752.5 253v2M753.5 254v1M754.5 253v1M755.5 253v1M756.5 252v2M757.5 252v1M758.5 250v1M759.5 252v1M760.5 251v1M761.5 253v1M762.5 252v2M763.5 253v1M764.5 253v1M765.5 253v1M768.5 146v1M768.5 250v2M769.5 253v1M770.5 253v1M771.5 252v1M772.5 252v1M773.5 252v1M774.5 251v1M775.5 251v2M776.5 253v1M777.5 253v2M778.5 253v1M779.5 252v1M780.5 252v1M781.5 253v1M782.5 252v2M785.5 252v1M786.5 251v1M787.5 250v1M787.5 252v1M789.5 252v2M790.5 251v2M791.5 253v2M792.5 253v1M793.5 253v1M794.5 253v1M795.5 252v1M796.5 253v1M797.5 252v1M798.5 249v2M799.5 252v1M800.5 252v2M801.5 253v1M802.5 252v2M803.5 252v1M804.5 252v1M805.5 250v1M807.5 251v2M808.5 251v2M810.5 251v2M811.5 251v1M812.5 252v1M813.5 253v1M814.5 253v1M815.5 254v1M816.5 251v3M817.5 253v1M818.5 251v1M819.5 253v1M820.5 253v1M821.5 250v2M822.5 252v1M824.5 251v1M826.5 253v1M827.5 253v1M828.5 252v1M829.5 251v1M830.5 253v1M831.5 252v1M832.5 253v1M833.5 253v1M834.5 253v1M835.5 134v3M835.5 138v1M835.5 141v2M835.5 150v2M835.5 199v2M835.5 206v2M835.5 213v1M835.5 252v1M836.5 140v1M836.5 146v1M836.5 150v3M836.5 198v2M836.5 202v1M836.5 206v1M836.5 208v1M836.5 212v3M836.5 253v1M837.5 252v2M838.5 249v3M839.5 252v1M840.5 252v1M841.5 252v1M842.5 211v1M842.5 252v1M843.5 251v1M846.5 253v1M847.5 253v1M848.5 253v2M849.5 252v2M850.5 250v2M850.5 253v1M851.5 252v2M852.5 251v1M853.5 252v2M854.5 253v1M855.5 253v1M856.5 215v2M856.5 222v1M856.5 253v1M857.5 254v2"/><path stroke="#0ad2fa" d="M2.5 115v1M2.5 122v1M2.5 126v2M2.5 131v1M2.5 133v1M2.5 138v1M2.5 140v1M2.5 154v2M2.5 159v5M2.5 165v6M2.5 174v1M2.5 176v8M2.5 185v3M2.5 193v2M2.5 196v2M2.5 209v1M2.5 254v1M3.5 138v12M3.5 199v1M3.5 201v7M3.5 253v3M4.5 254v2M5.5 254v1M6.5 253v1M7.5 253v1M8.5 254v1M9.5 254v1M10.5 254v1M11.5 254v2M12.5 255v1M13.5 254v2M14.5 254v1M15.5 253v1M16.5 253v1M17.5 254v1M18.5 252v3M19.5 253v2M20.5 254v1M21.5 253v2M22.5 253v2M23.5 253v1M24.5 253v1M25.5 254v1M26.5 253v2M27.5 254v1M28.5 253v1M29.5 252v2M30.5 254v1M31.5 253v2M32.5 253v2M33.5 253v2M34.5 253v2M35.5 253v2M36.5 254v2M37.5 254v1M38.5 251v2M39.5 253v1M40.5 254v1M41.5 253v1M42.5 254v1M43.5 254v1M44.5 253v1M45.5 139v1M45.5 142v1M45.5 144v1M45.5 146v1M45.5 148v2M45.5 199v2M45.5 202v1M45.5 205v6M45.5 253v2M46.5 252v2M47.5 250v2M48.5 252v2M49.5 254v1M50.5 202v3M50.5 207v9M50.5 220v2M50.5 253v2M51.5 201v1M51.5 206v1M51.5 212v2M51.5 254v1M52.5 254v1M53.5 254v1M54.5 254v1M55.5 253v1M56.5 251v2M57.5 253v1M58.5 254v1M59.5 253v1M60.5 254v1M61.5 254v1M62.5 254v1M63.5 254v1M64.5 254v1M65.5 253v1M66.5 252v2M67.5 253v2M68.5 253v2M69.5 253v1M71.5 253v1M72.5 252v1M73.5 253v1M74.5 254v1M75.5 254v1M76.5 253v2M77.5 254v2M78.5 255v1M79.5 254v1M80.5 254v1M81.5 254v1M82.5 253v1M83.5 254v1M84.5 254v2M85.5 254v1M86.5 254v1M87.5 252v2M88.5 253v2M89.5 253v1M90.5 254v1M91.5 254v1M92.5 253v1M93.5 253v1M94.5 253v1M95.5 253v1M96.5 254v1M97.5 253v2M98.5 254v2M99.5 253v2M100.5 253v2M101.5 254v1M102.5 254v1M103.5 254v2M104.5 254v1M106.5 253v1M107.5 254v1M108.5 255v1M109.5 254v2M110.5 254v1M111.5 252v2M112.5 253v1M113.5 253v1M114.5 253v2M115.5 254v1M116.5 253v2M117.5 252v2M118.5 253v1M119.5 253v1M120.5 254v1M121.5 254v2M122.5 254v1M123.5 253v1M124.5 254v1M125.5 253v2M126.5 253v2M127.5 254v1M128.5 254v2M129.5 254v2M130.5 254v1M131.5 254v1M132.5 254v1M133.5 254v1M134.5 254v1M135.5 253v1M136.5 253v2M137.5 254v2M138.5 254v1M139.5 254v1M140.5 252v2M141.5 252v2M142.5 253v2M143.5 253v1M144.5 252v2M145.5 253v1M146.5 253v1M147.5 254v2M148.5 254v2M149.5 254v1M150.5 255v1M151.5 255v1M152.5 254v1M153.5 254v1M154.5 254v1M155.5 253v2M156.5 253v2M157.5 253v1M158.5 253v1M159.5 254v1M160.5 253v1M161.5 253v1M162.5 254v1M163.5 254v2M164.5 253v2M165.5 254v1M166.5 254v1M167.5 254v2M168.5 254v1M169.5 253v2M170.5 254v1M171.5 253v1M172.5 253v2M173.5 254v2M174.5 253v2M175.5 254v1M176.5 254v1M177.5 253v2M178.5 254v2M179.5 254v2M180.5 254v1M181.5 254v1M182.5 253v1M183.5 253v2M184.5 253v2M185.5 254v1M186.5 253v2M187.5 203v2M187.5 207v1M187.5 209v3M187.5 253v2M188.5 254v1M189.5 254v1M190.5 254v1M191.5 254v1M192.5 200v3M192.5 211v5M192.5 254v1M193.5 206v8M193.5 216v2M193.5 253v2M194.5 253v1M195.5 253v2M196.5 253v1M197.5 254v1M198.5 254v1M199.5 253v1M200.5 253v2M201.5 254v2M202.5 253v2M203.5 253v2M204.5 253v2M205.5 254v1M206.5 254v1M207.5 254v2M208.5 254v2M209.5 254v2M210.5 254v2M211.5 254v1M212.5 253v2M213.5 254v1M214.5 254v1M215.5 254v1M216.5 254v1M217.5 254v1M218.5 253v1M219.5 252v2M220.5 254v1M221.5 254v1M222.5 254v1M223.5 253v1M224.5 253v1M225.5 253v1M226.5 254v1M227.5 253v2M228.5 254v2M229.5 254v1M230.5 201v1M230.5 205v1M230.5 208v1M230.5 212v1M230.5 253v1M231.5 253v2M232.5 254v1M233.5 253v1M234.5 253v1M235.5 253v1M236.5 253v1M237.5 254v1M238.5 254v1M240.5 253v1M241.5 254v1M242.5 253v2M243.5 254v1M244.5 254v1M245.5 198v2M245.5 202v2M245.5 205v3M245.5 210v1M245.5 254v2M246.5 254v1M247.5 254v1M248.5 252v2M249.5 252v2M250.5 202v1M250.5 206v3M250.5 254v1M251.5 254v1M252.5 254v1M253.5 253v1M254.5 250v1M254.5 252v1M255.5 253v1M256.5 254v1M257.5 254v1M258.5 250v3M259.5 254v2M260.5 255v1M261.5 253v3M262.5 251v2M263.5 252v2M264.5 252v2M265.5 253v2M266.5 253v2M267.5 254v1M268.5 254v2M269.5 255v1M270.5 254v1M271.5 254v1M272.5 253v3M273.5 254v2M274.5 253v2M275.5 253v1M276.5 253v2M277.5 254v1M278.5 254v1M279.5 253v2M280.5 253v2M281.5 254v1M282.5 253v3M283.5 254v2M284.5 254v1M285.5 197v4M285.5 202v8M285.5 212v4M285.5 253v1M286.5 254v1M287.5 253v2M288.5 254v2M289.5 254v2M290.5 252v2M291.5 253v1M292.5 253v1M293.5 253v1M294.5 253v1M295.5 253v2M296.5 252v2M297.5 143v2M297.5 148v2M297.5 193v3M297.5 203v1M297.5 205v4M297.5 215v1M297.5 254v1M298.5 254v1M299.5 254v2M300.5 252v2M301.5 199v1M301.5 204v1M301.5 206v6M301.5 253v1M302.5 193v1M302.5 197v1M302.5 202v1M302.5 214v1M302.5 216v1M302.5 251v2M303.5 193v8M303.5 209v2M303.5 216v1M303.5 253v1M304.5 201v3M304.5 208v3M304.5 253v1M305.5 252v2M306.5 253v2M307.5 253v3M308.5 254v2M309.5 205v2M309.5 254v1M310.5 253v2M311.5 254v1M312.5 253v2M313.5 254v2M314.5 255v1M315.5 254v2M316.5 254v1M317.5 253v2M318.5 254v1M319.5 254v2M320.5 255v1M321.5 255v1M322.5 254v2M323.5 254v2M324.5 254v2M325.5 254v1M326.5 254v1M327.5 254v1M328.5 253v2M329.5 196v3M329.5 200v2M329.5 205v1M329.5 208v1M329.5 211v1M329.5 213v1M329.5 254v1M330.5 253v1M331.5 253v1M332.5 254v1M333.5 254v1M334.5 253v1M335.5 254v1M336.5 254v1M337.5 254v1M338.5 253v1M339.5 253v1M340.5 254v1M341.5 253v1M342.5 254v1M343.5 254v1M344.5 254v2M345.5 253v3M346.5 253v2M347.5 253v1M348.5 254v1M349.5 254v1M350.5 254v2M351.5 254v1M352.5 254v1M353.5 254v2M354.5 254v2M355.5 254v1M356.5 253v1M357.5 253v1M358.5 253v1M359.5 254v1M360.5 253v2M361.5 254v1M362.5 253v1M363.5 253v1M364.5 253v1M365.5 254v1M366.5 252v2M367.5 253v1M368.5 254v1M369.5 140v7M369.5 148v3M369.5 202v1M369.5 206v3M369.5 253v2M370.5 254v1M371.5 253v2M372.5 254v2M373.5 254v2M374.5 254v1M375.5 254v1M376.5 254v1M377.5 254v1M378.5 254v1M379.5 254v1M380.5 253v2M381.5 252v1M382.5 252v2M383.5 254v1M384.5 253v2M385.5 254v1M386.5 254v1M387.5 253v1M388.5 253v1M389.5 253v1M390.5 252v2M391.5 253v2M392.5 254v1M393.5 254v2M394.5 253v2M395.5 252v2M396.5 253v2M397.5 254v2M398.5 254v1M399.5 254v1M400.5 254v2M401.5 254v1M402.5 254v1M403.5 254v1M404.5 253v2M405.5 255v1M406.5 255v1M407.5 253v2M408.5 252v2M409.5 254v2M410.5 255v1M411.5 254v2M412.5 254v1M413.5 254v1M414.5 254v1M415.5 253v2M416.5 254v1M417.5 254v1M418.5 254v1M419.5 255v1M420.5 255v1M421.5 253v2M422.5 253v2M423.5 254v2M424.5 254v2M425.5 254v1M426.5 254v1M427.5 253v1M428.5 254v1M429.5 254v1M430.5 254v1M431.5 253v3M432.5 254v2M433.5 253v2M434.5 254v1M435.5 254v1M436.5 254v1M437.5 253v2M438.5 254v2M439.5 254v2M440.5 253v1M441.5 253v1M442.5 254v1M443.5 254v1M444.5 253v2M445.5 254v1M446.5 253v2M447.5 254v1M448.5 253v2M449.5 253v2M450.5 143v5M450.5 150v2M450.5 154v3M450.5 199v8M450.5 209v1M450.5 212v2M450.5 254v1M451.5 254v2M452.5 254v1M453.5 253v1M454.5 253v1M455.5 253v1M456.5 202v3M456.5 253v2M457.5 254v1M458.5 253v2M459.5 253v2M460.5 253v2M461.5 254v1M462.5 254v1M463.5 254v1M464.5 253v2M465.5 252v3M466.5 254v2M467.5 254v2M468.5 254v2M469.5 254v2M470.5 254v2M471.5 255v1M472.5 254v2M473.5 254v1M474.5 253v1M475.5 253v1M476.5 253v1M477.5 253v2M478.5 253v1M479.5 253v1M480.5 254v1M481.5 254v1M482.5 254v2M483.5 254v2M484.5 254v1M485.5 254v1M486.5 254v1M487.5 253v2M488.5 253v3M489.5 254v2M490.5 254v1M491.5 252v1M492.5 253v1M493.5 253v1M494.5 252v2M495.5 253v1M496.5 253v1M497.5 254v2M498.5 254v2M499.5 253v2M500.5 254v1M501.5 254v1M502.5 253v2M503.5 253v2M504.5 254v1M505.5 253v2M506.5 253v2M507.5 254v1M508.5 253v2M509.5 254v1M510.5 253v2M511.5 254v1M512.5 254v1M513.5 252v2M514.5 253v1M515.5 252v2M516.5 254v1M517.5 254v2M518.5 253v2M519.5 254v1M520.5 254v1M521.5 254v1M522.5 253v1M523.5 253v2M524.5 253v1M525.5 252v2M526.5 254v1M527.5 254v2M528.5 254v1M529.5 251v2M530.5 253v2M531.5 254v1M532.5 253v1M533.5 252v1M534.5 252v2M535.5 253v2M536.5 254v1M537.5 254v1M538.5 253v1M539.5 253v2M540.5 254v2M541.5 255v1M542.5 254v2M543.5 254v1M544.5 253v1M545.5 254v1M546.5 254v2M547.5 253v3M548.5 254v1M549.5 254v1M550.5 254v1M551.5 254v1M552.5 253v2M553.5 252v2M554.5 253v1M555.5 254v1M556.5 253v2M557.5 253v1M558.5 253v1M559.5 253v1M560.5 202v1M560.5 206v2M560.5 211v2M560.5 253v1M561.5 146v3M561.5 201v1M561.5 203v2M561.5 207v7M561.5 254v2M562.5 254v2M563.5 254v2M564.5 254v1M565.5 201v3M565.5 206v1M565.5 208v4M565.5 254v1M566.5 208v2M566.5 212v3M566.5 254v2M567.5 203v4M567.5 208v1M567.5 211v2M567.5 218v1M567.5 254v2M568.5 253v2M569.5 253v1M570.5 254v1M571.5 253v2M572.5 253v1M573.5 254v1M574.5 253v1M575.5 253v1M576.5 254v1M577.5 254v1M578.5 254v1M579.5 253v1M580.5 253v2M581.5 254v1M582.5 253v2M583.5 254v1M584.5 254v1M585.5 254v1M586.5 253v2M587.5 254v1M588.5 253v2M589.5 254v2M590.5 254v1M591.5 254v1M592.5 254v1M593.5 254v1M594.5 254v1M595.5 254v1M596.5 253v1M597.5 253v2M598.5 254v1M599.5 253v2M600.5 254v2M601.5 255v1M602.5 255v1M603.5 254v2M604.5 254v1M605.5 253v2M606.5 254v1M607.5 252v3M608.5 251v1M608.5 253v1M609.5 253v1M610.5 253v1M611.5 254v1M612.5 143v1M612.5 145v2M612.5 148v1M612.5 212v1M612.5 254v1M613.5 253v1M614.5 253v1M615.5 252v2M616.5 253v2M617.5 254v1M618.5 253v1M619.5 253v2M620.5 254v2M621.5 254v1M622.5 253v2M623.5 254v1M624.5 143v3M624.5 147v2M624.5 254v1M625.5 140v1M625.5 143v2M625.5 147v1M625.5 152v1M625.5 253v1M626.5 254v1M628.5 253v1M629.5 254v1M630.5 254v1M631.5 255v1M632.5 254v2M633.5 254v1M634.5 254v1M635.5 254v1M636.5 253v1M637.5 254v1M638.5 254v1M639.5 254v1M640.5 254v1M641.5 254v2M642.5 254v1M643.5 254v1M644.5 254v1M645.5 254v1M646.5 253v1M647.5 254v1M648.5 254v2M649.5 254v1M650.5 253v2M651.5 254v2M652.5 254v2M653.5 255v1M654.5 255v1M655.5 255v1M656.5 254v1M657.5 253v2M658.5 253v2M659.5 253v2M660.5 254v1M661.5 254v1M662.5 254v1M663.5 253v1M664.5 254v1M665.5 253v1M666.5 253v1M667.5 254v1M668.5 253v2M669.5 253v1M670.5 254v1M671.5 254v1M672.5 252v4M673.5 254v2M674.5 254v2M675.5 254v2M676.5 254v1M677.5 253v1M678.5 253v1M679.5 253v2M680.5 254v1M681.5 254v2M682.5 254v2M683.5 255v1M684.5 255v1M685.5 254v1M686.5 254v1M687.5 254v1M688.5 254v1M689.5 253v1M690.5 252v2M691.5 253v1M692.5 253v2M693.5 254v1M694.5 254v1M695.5 253v2M697.5 253v1M698.5 254v1M699.5 254v1M700.5 253v2M701.5 254v1M702.5 254v1M703.5 254v1M704.5 252v2M705.5 253v1M706.5 253v1M707.5 253v1M708.5 255v1M709.5 255v1M710.5 254v1M711.5 254v1M712.5 253v2M713.5 253v2M714.5 253v1M715.5 252v2M716.5 253v2M717.5 254v1M718.5 254v2M719.5 254v2M720.5 254v2M721.5 254v2M722.5 140v1M722.5 143v1M722.5 146v3M722.5 255v1M723.5 255v1M724.5 254v2M725.5 254v1M726.5 254v1M727.5 254v1M728.5 254v2M729.5 254v2M730.5 254v1M731.5 254v1M732.5 254v2M733.5 254v1M734.5 254v1M735.5 254v1M736.5 254v1M737.5 254v1M738.5 254v2M739.5 255v1M740.5 254v2M741.5 254v2M742.5 254v1M743.5 253v2M744.5 253v2M745.5 254v1M746.5 254v1M747.5 253v2M748.5 254v1M749.5 254v2M750.5 254v2M751.5 254v2M752.5 255v1M753.5 255v1M754.5 254v1M755.5 254v2M756.5 254v1M757.5 253v1M758.5 252v1M759.5 253v1M760.5 252v2M761.5 254v2M762.5 254v2M763.5 254v1M764.5 254v2M765.5 254v1M766.5 253v1M767.5 252v1M768.5 252v1M769.5 254v1M770.5 254v1M771.5 253v1M772.5 253v1M773.5 253v1M774.5 252v2M775.5 253v2M776.5 254v2M777.5 255v1M778.5 254v1M779.5 253v1M780.5 253v1M781.5 254v1M782.5 254v1M783.5 253v2M784.5 253v1M785.5 253v1M786.5 252v2M787.5 253v2M788.5 253v3M789.5 254v1M790.5 253v3M791.5 255v1M792.5 254v2M793.5 254v1M794.5 254v1M795.5 253v2M796.5 254v1M797.5 253v1M798.5 251v2M799.5 253v2M800.5 254v2M801.5 254v1M802.5 254v1M803.5 253v2M804.5 253v1M805.5 251v1M806.5 251v2M807.5 253v1M808.5 253v1M809.5 253v2M810.5 253v1M811.5 252v2M812.5 253v1M813.5 254v1M814.5 254v1M815.5 255v1M816.5 254v2M817.5 254v1M818.5 252v2M819.5 254v1M820.5 254v1M821.5 252v2M822.5 253v1M823.5 252v2M824.5 252v2M825.5 253v2M826.5 254v1M827.5 254v1M828.5 253v2M829.5 253v2M830.5 254v1M831.5 253v2M832.5 254v2M833.5 254v2M834.5 254v1M835.5 139v2M835.5 143v1M835.5 147v3M835.5 201v3M835.5 205v1M835.5 208v5M835.5 253v1M836.5 141v1M836.5 145v1M836.5 147v3M836.5 200v2M836.5 203v3M836.5 209v3M836.5 254v1M837.5 254v1M838.5 252v3M839.5 253v2M840.5 253v2M841.5 253v2M842.5 253v2M843.5 253v1M844.5 253v1M845.5 253v2M846.5 254v1M847.5 254v1M848.5 255v1M849.5 254v2M850.5 254v2M851.5 254v2M852.5 253v2M853.5 254v1M854.5 254v1M855.5 254v1M856.5 254v1"/><path stroke="#0adcd2" d="M2.5 116v3M2.5 132v1M2.5 136v1M2.5 141v1M2.5 144v2M2.5 151v3M2.5 156v3M2.5 164v1M2.5 171v3M2.5 175v1M2.5 184v1M2.5 188v5M2.5 195v1M2.5 198v7M2.5 206v1M2.5 210v2M2.5 255v1M5.5 255v1M6.5 254v1M7.5 254v1M8.5 255v1M9.5 255v1M10.5 255v1M14.5 255v1M15.5 254v1M16.5 254v1M17.5 255v1M18.5 255v1M19.5 255v1M20.5 255v1M21.5 255v1M22.5 255v1M23.5 254v1M24.5 254v1M25.5 255v1M26.5 255v1M27.5 255v1M28.5 254v2M29.5 254v2M30.5 255v1M31.5 255v1M32.5 255v1M33.5 255v1M34.5 255v1M35.5 255v1M37.5 255v1M38.5 253v3M39.5 254v2M40.5 255v1M41.5 254v2M42.5 255v1M43.5 255v1M44.5 254v2M45.5 140v2M45.5 143v1M45.5 147v1M45.5 203v2M45.5 255v1M46.5 254v2M47.5 252v3M48.5 254v2M49.5 255v1M50.5 255v1M51.5 255v1M52.5 255v1M53.5 255v1M54.5 255v1M55.5 254v1M56.5 253v2M57.5 254v2M58.5 255v1M59.5 254v1M60.5 255v1M61.5 255v1M62.5 255v1M63.5 255v1M64.5 255v1M65.5 254v2M66.5 254v2M67.5 255v1M68.5 255v1M69.5 254v2M70.5 254v1M71.5 254v2M72.5 253v2M73.5 254v2M74.5 255v1M75.5 255v1M76.5 255v1M79.5 255v1M80.5 255v1M81.5 255v1M82.5 254v2M83.5 255v1M85.5 255v1M86.5 255v1M87.5 254v2M88.5 255v1M89.5 254v2M90.5 255v1M91.5 255v1M92.5 254v2M93.5 254v1M94.5 254v1M95.5 254v1M96.5 255v1M97.5 255v1M99.5 255v1M100.5 255v1M101.5 255v1M102.5 255v1M104.5 255v1M105.5 254v1M106.5 254v1M107.5 255v1M110.5 255v1M111.5 254v2M112.5 254v2M113.5 254v2M114.5 255v1M115.5 255v1M116.5 255v1M117.5 254v2M118.5 254v1M119.5 254v2M120.5 255v1M122.5 255v1M123.5 254v2M124.5 255v1M125.5 255v1M126.5 255v1M127.5 255v1M130.5 255v1M131.5 255v1M132.5 255v1M133.5 255v1M134.5 255v1M135.5 254v1M136.5 255v1M138.5 255v1M139.5 255v1M140.5 254v2M141.5 254v2M142.5 255v1M143.5 254v2M144.5 254v2M145.5 254v1M146.5 254v2M149.5 255v1M152.5 255v1M153.5 255v1M154.5 255v1M155.5 255v1M156.5 255v1M157.5 254v2M158.5 254v2M159.5 255v1M160.5 254v1M161.5 254v1M162.5 255v1M164.5 255v1M165.5 255v1M166.5 255v1M168.5 255v1M169.5 255v1M170.5 255v1M171.5 254v2M172.5 255v1M174.5 255v1M175.5 255v1M176.5 255v1M177.5 255v1M180.5 255v1M181.5 255v1M182.5 254v2M183.5 255v1M184.5 255v1M185.5 255v1M186.5 255v1M187.5 208v1M187.5 255v1M188.5 255v1M189.5 255v1M190.5 255v1M191.5 255v1M192.5 255v1M193.5 255v1M194.5 254v2M195.5 255v1M196.5 254v2M197.5 255v1M198.5 255v1M199.5 254v1M200.5 255v1M202.5 255v1M203.5 255v1M204.5 255v1M205.5 255v1M206.5 255v1M211.5 255v1M212.5 255v1M213.5 255v1M214.5 255v1M215.5 255v1M216.5 255v1M217.5 255v1M218.5 254v2M219.5 254v1M220.5 255v1M221.5 255v1M222.5 255v1M223.5 254v2M224.5 254v1M225.5 254v2M226.5 255v1M227.5 255v1M229.5 255v1M230.5 206v2M230.5 254v2M231.5 255v1M232.5 255v1M233.5 254v2M234.5 254v1M235.5 254v2M236.5 254v2M237.5 255v1M238.5 255v1M239.5 254v1M240.5 254v2M241.5 255v1M242.5 255v1M243.5 255v1M244.5 255v1M246.5 255v1M247.5 255v1M248.5 254v2M249.5 254v1M250.5 255v1M251.5 255v1M252.5 255v1M253.5 254v2M254.5 253v3M255.5 254v2M256.5 255v1M257.5 255v1M258.5 253v3M262.5 253v3M263.5 254v1M264.5 254v1M265.5 255v1M266.5 255v1M267.5 255v1M270.5 255v1M271.5 255v1M274.5 255v1M275.5 254v2M276.5 255v1M277.5 255v1M278.5 255v1M279.5 255v1M280.5 255v1M281.5 255v1M284.5 255v1M285.5 254v1M286.5 255v1M287.5 255v1M290.5 254v2M291.5 254v2M292.5 254v1M293.5 254v1M294.5 254v2M295.5 255v1M296.5 254v2M297.5 198v2M297.5 204v1M297.5 209v6M297.5 255v1M298.5 255v1M300.5 254v2M301.5 205v1M301.5 254v1M302.5 194v3M302.5 198v4M302.5 203v1M302.5 213v1M302.5 253v2M303.5 201v3M303.5 208v1M303.5 211v1M303.5 213v3M303.5 254v1M304.5 254v1M305.5 254v1M306.5 255v1M309.5 255v1M310.5 255v1M311.5 255v1M312.5 255v1M316.5 255v1M317.5 255v1M318.5 255v1M325.5 255v1M326.5 255v1M327.5 255v1M328.5 255v1M329.5 209v2M329.5 255v1M330.5 254v1M331.5 254v2M332.5 255v1M333.5 255v1M334.5 254v2M335.5 255v1M336.5 255v1M337.5 255v1M338.5 254v2M339.5 254v2M340.5 255v1M341.5 254v2M342.5 255v1M343.5 255v1M346.5 255v1M347.5 254v2M348.5 255v1M349.5 255v1M351.5 255v1M352.5 255v1M355.5 255v1M356.5 254v1M357.5 254v1M358.5 254v2M359.5 255v1M360.5 255v1M361.5 255v1M362.5 254v2M363.5 254v1M364.5 254v2M365.5 255v1M366.5 254v2M367.5 254v2M368.5 255v1M369.5 255v1M370.5 255v1M371.5 255v1M374.5 255v1M375.5 255v1M376.5 255v1M377.5 255v1M378.5 255v1M379.5 255v1M380.5 255v1M381.5 253v2M382.5 254v1M383.5 255v1M384.5 255v1M385.5 255v1M386.5 255v1M387.5 254v1M388.5 254v2M389.5 254v1M390.5 254v1M391.5 255v1M392.5 255v1M394.5 255v1M395.5 254v2M396.5 255v1M398.5 255v1M399.5 255v1M401.5 255v1M402.5 255v1M403.5 255v1M404.5 255v1M407.5 255v1M408.5 254v2M412.5 255v1M413.5 255v1M414.5 255v1M415.5 255v1M417.5 255v1M418.5 255v1M421.5 255v1M422.5 255v1M425.5 255v1M426.5 255v1M427.5 254v1M428.5 255v1M429.5 255v1M430.5 255v1M433.5 255v1M434.5 255v1M435.5 255v1M436.5 255v1M437.5 255v1M440.5 254v2M441.5 254v2M442.5 255v1M443.5 255v1M444.5 255v1M445.5 255v1M446.5 255v1M447.5 255v1M448.5 255v1M449.5 255v1M450.5 207v2M450.5 255v1M452.5 255v1M453.5 254v2M454.5 254v1M455.5 254v1M456.5 255v1M457.5 255v1M458.5 255v1M459.5 255v1M460.5 255v1M461.5 255v1M462.5 255v1M463.5 255v1M464.5 255v1M465.5 255v1M473.5 255v1M474.5 254v2M475.5 254v1M476.5 254v1M477.5 255v1M478.5 254v2M479.5 254v1M480.5 255v1M481.5 255v1M484.5 255v1M485.5 255v1M486.5 255v1M487.5 255v1M490.5 255v1M491.5 253v2M492.5 254v1M493.5 254v2M494.5 254v1M495.5 254v1M496.5 254v2M499.5 255v1M500.5 255v1M501.5 255v1M502.5 255v1M503.5 255v1M504.5 255v1M505.5 255v1M506.5 255v1M507.5 255v1M508.5 255v1M509.5 255v1M510.5 255v1M511.5 255v1M512.5 255v1M513.5 254v2M514.5 254v1M515.5 254v1M516.5 255v1M518.5 255v1M519.5 255v1M520.5 255v1M521.5 255v1M522.5 254v2M523.5 255v1M524.5 254v2M525.5 254v1M526.5 255v1M528.5 255v1M529.5 253v3M530.5 255v1M531.5 255v1M532.5 254v1M533.5 253v2M534.5 254v1M535.5 255v1M536.5 255v1M537.5 255v1M538.5 254v2M539.5 255v1M543.5 255v1M544.5 254v1M545.5 255v1M548.5 255v1M549.5 255v1M550.5 255v1M551.5 255v1M552.5 255v1M553.5 254v2M554.5 254v2M555.5 255v1M556.5 255v1M557.5 254v2M558.5 254v1M559.5 254v1M560.5 254v2M561.5 145v1M561.5 202v1M561.5 205v2M564.5 255v1M565.5 207v1M565.5 255v1M566.5 206v2M567.5 207v1M568.5 255v1M569.5 254v2M570.5 255v1M571.5 255v1M572.5 254v1M573.5 255v1M574.5 254v2M575.5 254v2M576.5 255v1M577.5 255v1M578.5 255v1M579.5 254v2M580.5 255v1M581.5 255v1M582.5 255v1M583.5 255v1M584.5 255v1M585.5 255v1M586.5 255v1M587.5 255v1M588.5 255v1M590.5 255v1M591.5 255v1M592.5 255v1M593.5 255v1M594.5 255v1M595.5 255v1M596.5 254v2M597.5 255v1M598.5 255v1M599.5 255v1M604.5 255v1M605.5 255v1M606.5 255v1M607.5 255v1M608.5 254v2M609.5 254v2M610.5 254v2M611.5 255v1M612.5 144v1M612.5 255v1M613.5 254v1M614.5 254v1M615.5 254v2M616.5 255v1M617.5 255v1M618.5 254v2M619.5 255v1M621.5 255v1M622.5 255v1M623.5 255v1M624.5 255v1M625.5 254v1M626.5 255v1M627.5 253v2M628.5 254v1M629.5 255v1M630.5 255v1M633.5 255v1M634.5 255v1M635.5 255v1M636.5 254v2M637.5 255v1M638.5 255v1M639.5 255v1M640.5 255v1M642.5 255v1M643.5 255v1M644.5 255v1M645.5 255v1M646.5 254v1M647.5 255v1M649.5 255v1M650.5 255v1M656.5 255v1M657.5 255v1M658.5 255v1M659.5 255v1M660.5 255v1M661.5 255v1M662.5 255v1M663.5 254v1M664.5 255v1M665.5 254v2M666.5 254v2M667.5 255v1M668.5 255v1M669.5 254v2M670.5 255v1M671.5 255v1M676.5 255v1M677.5 254v1M678.5 254v1M679.5 255v1M680.5 255v1M685.5 255v1M686.5 255v1M687.5 255v1M688.5 255v1M689.5 254v2M690.5 254v1M691.5 254v1M692.5 255v1M693.5 255v1M694.5 255v1M695.5 255v1M696.5 254v1M697.5 254v2M698.5 255v1M699.5 255v1M700.5 255v1M701.5 255v1M702.5 255v1M703.5 255v1M704.5 254v2M705.5 254v1M706.5 254v1M707.5 254v2M710.5 255v1M711.5 255v1M712.5 255v1M713.5 255v1M714.5 254v1M715.5 254v1M716.5 255v1M717.5 255v1M722.5 144v2M725.5 255v1M726.5 255v1M727.5 255v1M730.5 255v1M731.5 255v1M733.5 255v1M734.5 255v1M735.5 255v1M736.5 255v1M737.5 255v1M742.5 255v1M743.5 255v1M744.5 255v1M745.5 255v1M746.5 255v1M747.5 255v1M748.5 255v1M754.5 255v1M756.5 255v1M757.5 254v1M758.5 253v2M759.5 254v1M760.5 254v2M763.5 255v1M765.5 255v1M766.5 254v1M767.5 253v2M768.5 253v2M769.5 255v1M770.5 255v1M771.5 254v1M772.5 254v1M773.5 254v2M774.5 254v2M775.5 255v1M778.5 255v1M779.5 254v2M780.5 254v2M781.5 255v1M782.5 255v1M783.5 255v1M784.5 254v1M785.5 254v1M786.5 254v2M787.5 255v1M789.5 255v1M793.5 255v1M794.5 255v1M795.5 255v1M796.5 255v1M797.5 254v2M798.5 253v3M799.5 255v1M801.5 255v1M802.5 255v1M803.5 255v1M804.5 254v1M805.5 253v2M806.5 253v1M807.5 254v1M808.5 254v2M809.5 255v1M810.5 254v2M811.5 254v1M812.5 254v1M813.5 255v1M814.5 255v1M817.5 255v1M818.5 254v2M819.5 255v1M820.5 255v1M821.5 254v2M822.5 254v1M823.5 254v1M824.5 254v1M825.5 255v1M826.5 255v1M827.5 255v1M828.5 255v1M829.5 255v1M830.5 255v1M831.5 255v1M834.5 255v1M835.5 144v3M835.5 204v1M835.5 254v2M836.5 142v3M836.5 255v1M837.5 255v1M838.5 255v1M839.5 255v1M840.5 255v1M841.5 255v1M842.5 255v1M843.5 254v2M844.5 254v2M845.5 255v1M846.5 255v1M847.5 255v1M852.5 255v1M853.5 255v1M854.5 255v1M855.5 255v1M856.5 255v1"/><path stroke="#1ee6a0" d="M2.5 137v1M2.5 142v2M2.5 146v5M2.5 205v1M6.5 255v1M7.5 255v1M15.5 255v1M16.5 255v1M23.5 255v1M24.5 255v1M47.5 255v1M55.5 255v1M56.5 255v1M59.5 255v1M70.5 255v1M72.5 255v1M93.5 255v1M94.5 255v1M95.5 255v1M105.5 255v1M106.5 255v1M118.5 255v1M135.5 255v1M145.5 255v1M160.5 255v1M161.5 255v1M199.5 255v1M219.5 255v1M224.5 255v1M234.5 255v1M239.5 255v1M249.5 255v1M263.5 255v1M264.5 255v1M285.5 255v1M292.5 255v1M293.5 255v1M301.5 255v1M302.5 204v1M302.5 210v3M302.5 255v1M303.5 204v4M303.5 212v1M303.5 255v1M304.5 255v1M305.5 255v1M330.5 255v1M356.5 255v1M357.5 255v1M363.5 255v1M381.5 255v1M382.5 255v1M387.5 255v1M389.5 255v1M390.5 255v1M416.5 255v1M427.5 255v1M454.5 255v1M455.5 255v1M475.5 255v1M476.5 255v1M479.5 255v1M491.5 255v1M492.5 255v1M494.5 255v1M495.5 255v1M514.5 255v1M515.5 255v1M525.5 255v1M532.5 255v1M533.5 255v1M534.5 255v1M544.5 255v1M558.5 255v1M559.5 255v1M572.5 255v1M613.5 255v1M614.5 255v1M625.5 255v1M627.5 255v1M628.5 255v1M646.5 255v1M663.5 255v1M677.5 255v1M678.5 255v1M690.5 255v1M691.5 255v1M696.5 255v1M705.5 255v1M706.5 255v1M714.5 255v1M715.5 255v1M757.5 255v1M758.5 255v1M759.5 255v1M766.5 255v1M767.5 255v1M768.5 255v1M771.5 255v1M772.5 255v1M784.5 255v1M785.5 255v1M804.5 255v1M805.5 255v1M806.5 254v2M807.5 255v1M811.5 255v1M812.5 255v1M822.5 255v1M823.5 255v1M824.5 255v1"/><path stroke="#46e678" d="M302.5 205v5"/></g></svg>
<svg class="a" style="left:0;top:0" width="1188" height="595" shape-rendering="crispEdges"><rect x="112" y="99" width="3" height="1" fill="#000"/><rect x="112" y="130" width="3" height="1" fill="#000"/><rect x="112" y="161" width="3" height="1" fill="#000"/><rect x="112" y="191" width="3" height="1" fill="#000"/><rect x="112" y="222" width="3" height="1" fill="#000"/><rect x="112" y="253" width="3" height="1" fill="#000"/><rect x="112" y="283" width="3" height="1" fill="#000"/><rect x="112" y="573" width="4" height="1" fill="#000"/><rect x="112" y="550" width="4" height="1" fill="#000"/><rect x="112" y="527" width="4" height="1" fill="#000"/><rect x="112" y="504" width="4" height="1" fill="#000"/><rect x="112" y="481" width="4" height="1" fill="#000"/><rect x="112" y="458" width="4" height="1" fill="#000"/><rect x="112" y="434" width="4" height="1" fill="#000"/><rect x="112" y="411" width="4" height="1" fill="#000"/><rect x="112" y="388" width="4" height="1" fill="#000"/><rect x="112" y="365" width="4" height="1" fill="#000"/><rect x="112" y="342" width="4" height="1" fill="#000"/><rect x="112" y="318" width="4" height="1" fill="#000"/><rect x="138" y="574" width="1" height="1" fill="#000"/><rect x="159" y="574" width="1" height="1" fill="#000"/><rect x="181" y="574" width="1" height="1" fill="#000"/><rect x="202" y="574" width="1" height="1" fill="#000"/><rect x="224" y="574" width="1" height="3" fill="#000"/><rect x="245" y="574" width="1" height="1" fill="#000"/><rect x="267" y="574" width="1" height="1" fill="#000"/><rect x="289" y="574" width="1" height="1" fill="#000"/><rect x="310" y="574" width="1" height="1" fill="#000"/><rect x="332" y="574" width="1" height="3" fill="#000"/><rect x="353" y="574" width="1" height="1" fill="#000"/><rect x="375" y="574" width="1" height="1" fill="#000"/><rect x="396" y="574" width="1" height="1" fill="#000"/><rect x="418" y="574" width="1" height="1" fill="#000"/><rect x="439" y="574" width="1" height="3" fill="#000"/><rect x="461" y="574" width="1" height="1" fill="#000"/><rect x="482" y="574" width="1" height="1" fill="#000"/><rect x="504" y="574" width="1" height="1" fill="#000"/><rect x="525" y="574" width="1" height="1" fill="#000"/><rect x="547" y="574" width="1" height="3" fill="#000"/><rect x="568" y="574" width="1" height="1" fill="#000"/><rect x="590" y="574" width="1" height="1" fill="#000"/><rect x="611" y="574" width="1" height="1" fill="#000"/><rect x="633" y="574" width="1" height="1" fill="#000"/><rect x="655" y="574" width="1" height="3" fill="#000"/><rect x="676" y="574" width="1" height="1" fill="#000"/><rect x="698" y="574" width="1" height="1" fill="#000"/><rect x="719" y="574" width="1" height="1" fill="#000"/><rect x="741" y="574" width="1" height="1" fill="#000"/><rect x="762" y="574" width="1" height="3" fill="#000"/><rect x="784" y="574" width="1" height="1" fill="#000"/><rect x="805" y="574" width="1" height="1" fill="#000"/><rect x="827" y="574" width="1" height="1" fill="#000"/><rect x="848" y="574" width="1" height="1" fill="#000"/><rect x="870" y="574" width="1" height="3" fill="#000"/><rect x="891" y="574" width="1" height="1" fill="#000"/><rect x="913" y="574" width="1" height="1" fill="#000"/><rect x="934" y="574" width="1" height="1" fill="#000"/><rect x="956" y="574" width="1" height="1" fill="#000"/><rect x="116" y="573" width="858" height="1" fill="#000"/></svg>
<div class="sunk" style="left:9px;top:316px;width:72px;height:259px"></div>
<svg class="a" style="left:0px;top:0px" width="90" height="595" shape-rendering="crispEdges"><path d="M11 550.5H79M11 527.5H79M11 504.5H79M11 481.5H79M11 458.5H79M11 434.5H79M11 411.5H79M11 388.5H79M11 365.5H79M11 342.5H79M11 318.5H79" stroke="#707070" stroke-width="1" stroke-dasharray="3 2.5" fill="none"/><path d="M78 317.5H80M79 318.5H80M78 319.5H80M79 320.5H80M79 321.5H80M78 322.5H80M78 323.5H80M79 324.5H80M78 325.5H80M78 326.5H80M79 327.5H80M78 328.5H80M78 329.5H80M78 330.5H80M78 331.5H80M77 332.5H80M78 333.5H80M78 334.5H80M78 335.5H80M78 336.5H80M78 337.5H80M77 338.5H80M78 339.5H80M77 340.5H80M77 341.5H80M77 342.5H80M77 343.5H80M77 344.5H80M77 345.5H80M77 346.5H80M77 347.5H80M77 348.5H80M77 349.5H80M77 350.5H80M77 351.5H80M77 352.5H80M77 353.5H80M76 354.5H80M76 355.5H80M76 356.5H80M77 357.5H80M76 358.5H80M76 359.5H80M76 360.5H80M76 361.5H80M76 362.5H80M76 363.5H80M76 364.5H80M76 365.5H80M76 366.5H80M76 367.5H80M76 368.5H80M76 369.5H80M76 370.5H80M76 371.5H80M75 372.5H80M76 373.5H80M76 374.5H80M76 375.5H80M75 376.5H80M75 377.5H80M75 378.5H80M75 379.5H80M75 380.5H80M75 381.5H80M74 382.5H80M75 383.5H80M75 384.5H80M74 385.5H80M75 386.5H80M75 387.5H80M74 388.5H80M75 389.5H80M75 390.5H80M75 391.5H80M74 392.5H80M74 393.5H80M73 394.5H80M74 395.5H80M73 396.5H80M74 397.5H80M74 398.5H80M72 399.5H80M72 400.5H80M71 401.5H80M70 402.5H80M70 403.5H80M69 404.5H80M68 405.5H80M68 406.5H80M68 407.5H80M67 408.5H80M67 409.5H80M68 410.5H80M67 411.5H80M68 412.5H80M68 413.5H80M67 414.5H80M68 415.5H80M68 416.5H80M69 417.5H80M70 418.5H80M70 419.5H80M71 420.5H80M71 421.5H80M71 422.5H80M72 423.5H80M73 424.5H80M73 425.5H80M73 426.5H80M74 427.5H80M74 428.5H80M75 429.5H80M74 430.5H80M75 431.5H80M75 432.5H80M75 433.5H80M76 434.5H80M76 435.5H80M75 436.5H80M76 437.5H80M76 438.5H80M76 439.5H80M76 440.5H80M76 441.5H80M76 442.5H80M74 443.5H80M72 444.5H80M72 445.5H80M73 446.5H80M72 447.5H80M72 448.5H80M72 449.5H80M71 450.5H80M70 451.5H80M70 452.5H80M69 453.5H80M69 454.5H80M68 455.5H80M67 456.5H80M67 457.5H80M67 458.5H80M67 459.5H80M68 460.5H80M68 461.5H80M68 462.5H80M69 463.5H80M69 464.5H80M70 465.5H80M71 466.5H80M71 467.5H80M70 468.5H80M70 469.5H80M70 470.5H80M71 471.5H80M70 472.5H80M72 473.5H80M72 474.5H80M73 475.5H80M74 476.5H80M74 477.5H80M74 478.5H80M74 479.5H80M74 480.5H80M74 481.5H80M74 482.5H80M75 483.5H80M75 484.5H80M74 485.5H80M74 486.5H80M75 487.5H80M75 488.5H80M75 489.5H80M75 490.5H80M74 491.5H80M75 492.5H80M75 493.5H80M75 494.5H80M75 495.5H80M74 496.5H80M74 497.5H80M74 498.5H80M75 499.5H80M74 500.5H80M73 501.5H80M74 502.5H80M74 503.5H80M74 504.5H80M73 505.5H80M74 506.5H80M74 507.5H80M73 508.5H80M73 509.5H80M71 510.5H80M71 511.5H80M72 512.5H80M71 513.5H80M70 514.5H80M69 515.5H80M68 516.5H80M69 517.5H80M68 518.5H80M68 519.5H80M66 520.5H80M66 521.5H80M66 522.5H80M66 523.5H80M66 524.5H80M66 525.5H80M65 526.5H80M64 527.5H80M65 528.5H80M64 529.5H80M63 530.5H80M64 531.5H80M64 532.5H80M64 533.5H80M65 534.5H80M66 535.5H80M66 536.5H80M66 537.5H80M66 538.5H80M66 539.5H80M66 540.5H80M66 541.5H80M66 542.5H80M68 543.5H80M69 544.5H80M68 545.5H80M70 546.5H80M71 547.5H80M71 548.5H80M71 549.5H80M71 550.5H80M72 551.5H80M72 552.5H80M72 553.5H80M72 554.5H80M72 555.5H80M72 556.5H80M72 557.5H80M72 558.5H80M72 559.5H80M71 560.5H80M71 561.5H80M71 562.5H80M70 563.5H80M69 564.5H80M70 565.5H80M69 566.5H80M66 567.5H80M64 568.5H80M59 569.5H80M52 570.5H80M41 571.5H80M30 572.5H80M16 573.5H80" stroke="#000" stroke-width="1" fill="none"/></svg>
<span class="t" id="rng" style="left:9px;top:578px">0.000-39.787</span>
</body></html>
